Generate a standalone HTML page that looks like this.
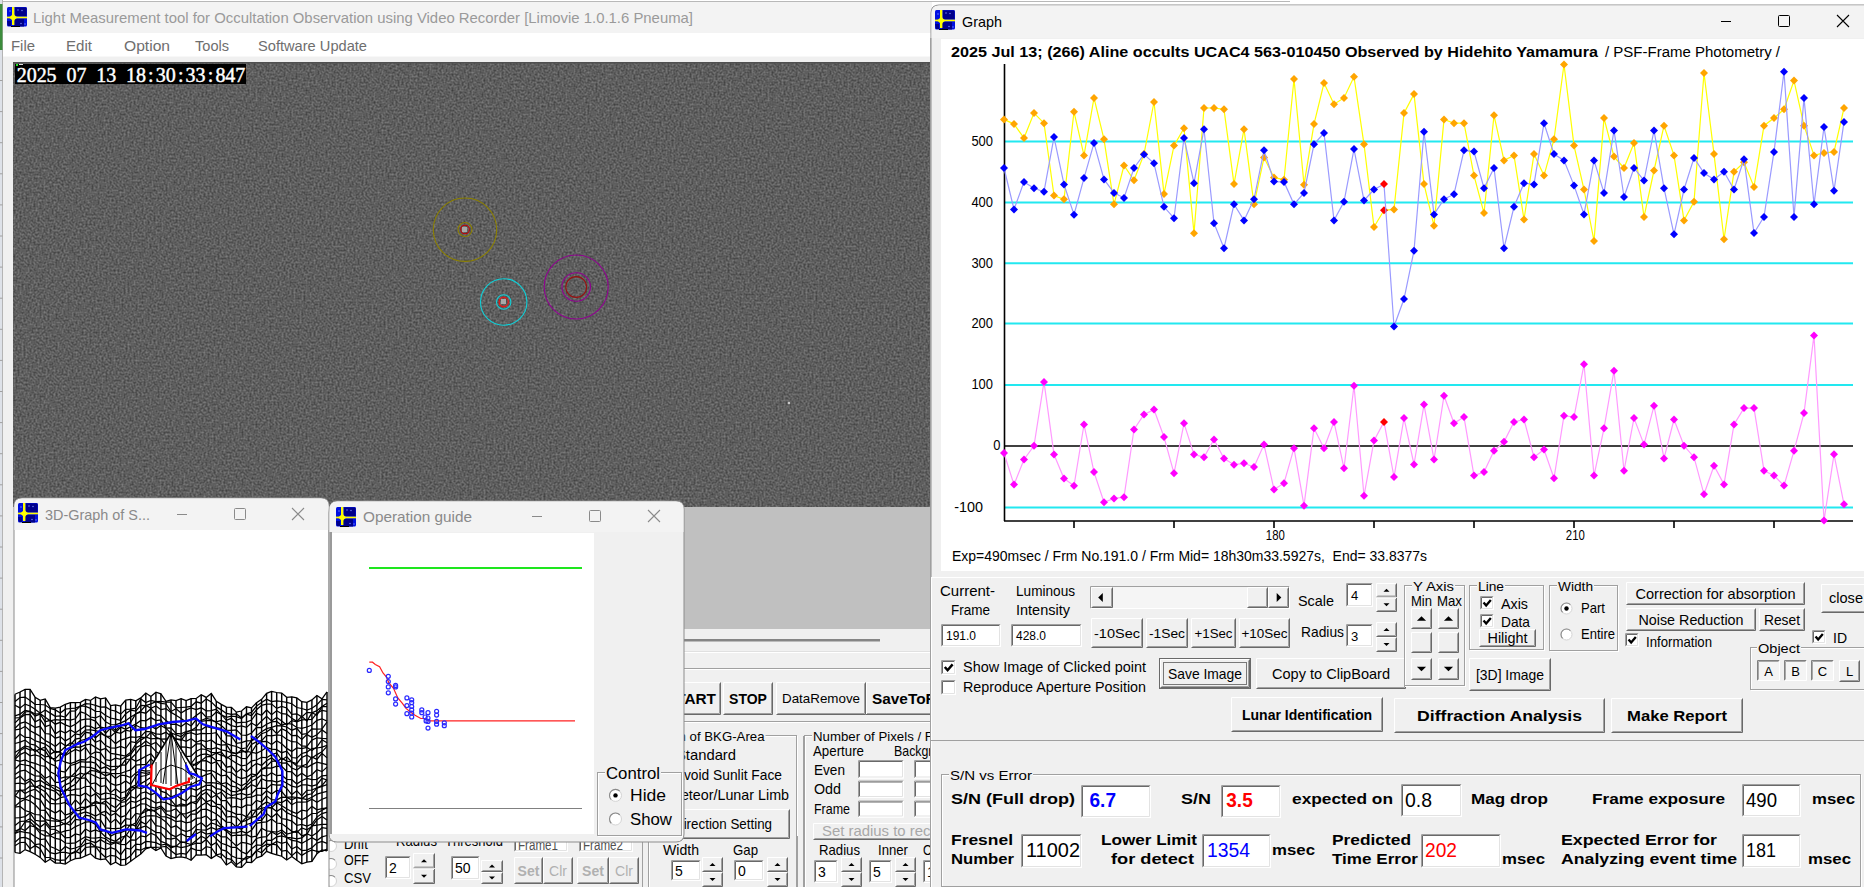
<!DOCTYPE html><html><head><meta charset="utf-8"><style>html,body{margin:0;padding:0;overflow:hidden;background:#fff}</style></head><body><svg width="1864" height="887" viewBox="0 0 1864 887" style="display:block">
<defs><filter id="noise" x="0" y="0" width="100%" height="100%" filterUnits="objectBoundingBox" color-interpolation-filters="sRGB"><feTurbulence type="fractalNoise" baseFrequency="0.5" numOctaves="3" seed="3" result="t"/><feColorMatrix in="t" type="matrix" values="0.36 0 0 0 0.19  0.36 0 0 0 0.19  0.36 0 0 0 0.19  0 0 0 0 1"/><feGaussianBlur stdDeviation="0.5"/></filter></defs>
<rect x="0" y="0" width="1864" height="887" fill="#ffffff" />
<line x1="0" y1="1.5" x2="1290" y2="1.5" stroke="#b8b8b8" stroke-width="1" />
<rect x="0" y="0" width="2.5" height="887" fill="#dde1e8" />
<line x1="2.5" y1="0" x2="2.5" y2="887" stroke="#b4b4b4" stroke-width="1" />
<line x1="0" y1="889.0999999999999" x2="2.5" y2="889.0999999999999" stroke="#a0a0a0" stroke-width="1" />
<line x1="0" y1="858.0" x2="2.5" y2="858.0" stroke="#a0a0a0" stroke-width="1" />
<line x1="0" y1="826.8999999999999" x2="2.5" y2="826.8999999999999" stroke="#a0a0a0" stroke-width="1" />
<line x1="0" y1="795.8" x2="2.5" y2="795.8" stroke="#a0a0a0" stroke-width="1" />
<line x1="0" y1="764.7" x2="2.5" y2="764.7" stroke="#a0a0a0" stroke-width="1" />
<line x1="0" y1="733.5999999999999" x2="2.5" y2="733.5999999999999" stroke="#a0a0a0" stroke-width="1" />
<line x1="0" y1="702.5" x2="2.5" y2="702.5" stroke="#a0a0a0" stroke-width="1" />
<line x1="0" y1="671.3999999999999" x2="2.5" y2="671.3999999999999" stroke="#a0a0a0" stroke-width="1" />
<line x1="0" y1="640.3" x2="2.5" y2="640.3" stroke="#a0a0a0" stroke-width="1" />
<line x1="0" y1="609.1999999999999" x2="2.5" y2="609.1999999999999" stroke="#a0a0a0" stroke-width="1" />
<line x1="0" y1="578.0999999999999" x2="2.5" y2="578.0999999999999" stroke="#a0a0a0" stroke-width="1" />
<line x1="0" y1="547.0" x2="2.5" y2="547.0" stroke="#a0a0a0" stroke-width="1" />
<line x1="0" y1="515.8999999999999" x2="2.5" y2="515.8999999999999" stroke="#a0a0a0" stroke-width="1" />
<line x1="0" y1="484.79999999999995" x2="2.5" y2="484.79999999999995" stroke="#a0a0a0" stroke-width="1" />
<line x1="0" y1="453.69999999999993" x2="2.5" y2="453.69999999999993" stroke="#a0a0a0" stroke-width="1" />
<line x1="0" y1="422.59999999999997" x2="2.5" y2="422.59999999999997" stroke="#a0a0a0" stroke-width="1" />
<line x1="0" y1="391.49999999999994" x2="2.5" y2="391.49999999999994" stroke="#a0a0a0" stroke-width="1" />
<line x1="0" y1="360.3999999999999" x2="2.5" y2="360.3999999999999" stroke="#a0a0a0" stroke-width="1" />
<line x1="0" y1="329.2999999999999" x2="2.5" y2="329.2999999999999" stroke="#a0a0a0" stroke-width="1" />
<line x1="0" y1="298.2" x2="2.5" y2="298.2" stroke="#a0a0a0" stroke-width="1" />
<line x1="0" y1="267.09999999999997" x2="2.5" y2="267.09999999999997" stroke="#a0a0a0" stroke-width="1" />
<line x1="0" y1="235.99999999999994" x2="2.5" y2="235.99999999999994" stroke="#a0a0a0" stroke-width="1" />
<line x1="0" y1="204.89999999999992" x2="2.5" y2="204.89999999999992" stroke="#a0a0a0" stroke-width="1" />
<line x1="0" y1="173.7999999999999" x2="2.5" y2="173.7999999999999" stroke="#a0a0a0" stroke-width="1" />
<line x1="0" y1="142.69999999999987" x2="2.5" y2="142.69999999999987" stroke="#a0a0a0" stroke-width="1" />
<line x1="0" y1="111.59999999999997" x2="2.5" y2="111.59999999999997" stroke="#a0a0a0" stroke-width="1" />
<line x1="0" y1="80.49999999999994" x2="2.5" y2="80.49999999999994" stroke="#a0a0a0" stroke-width="1" />
<line x1="0" y1="49.39999999999992" x2="2.5" y2="49.39999999999992" stroke="#a0a0a0" stroke-width="1" />
<line x1="0" y1="18.299999999999898" x2="2.5" y2="18.299999999999898" stroke="#a0a0a0" stroke-width="1" />
<line x1="0" y1="-12.800000000000125" x2="2.5" y2="-12.800000000000125" stroke="#a0a0a0" stroke-width="1" />
<rect x="0" y="4" width="2.5" height="46" fill="#3c8c3c" />
<rect x="3" y="2" width="929" height="885" fill="#f0f0f0" />
<rect x="3" y="2" width="929" height="31" fill="#f3f3f3" />
<g transform="translate(7,7) scale(1.0)"><rect x="0" y="0" width="20" height="19.5" rx="1.5" fill="#0010e0"/><path d="M8,0.5 H19.5 V9 H8Z M7,12 H17 V19.5 H7Z M0,14 H4 V19 H1Z" fill="#00008a"/><path d="M4,19 H13 V20 H4Z" fill="#000000"/><rect x="5" y="0" width="2.4" height="18" fill="#ffff00"/><rect x="0" y="9.6" width="20" height="1.7" fill="#ffff00"/><path d="M6.2,5 Q7,9.4 11.5,10.4 Q7,11.4 6.2,16 Q5.4,11.4 1,10.4 Q5.4,9.4 6.2,5Z" fill="#ffff00"/><circle cx="3" cy="4" r="0.7" fill="#8090ff"/><circle cx="11" cy="3" r="0.7" fill="#8090ff"/><circle cx="15" cy="3.5" r="0.7" fill="#8090ff"/><circle cx="14" cy="16.5" r="0.7" fill="#8090ff"/><circle cx="18" cy="17" r="0.7" fill="#8090ff"/></g>
<text x="33" y="23" font-family="Liberation Sans" font-size="15" fill="#9a9a9a" textLength="660" lengthAdjust="spacingAndGlyphs" >Light Measurement tool for Occultation Observation using Video Recorder [Limovie 1.0.1.6 Pneuma]</text>
<rect x="3" y="33" width="929" height="23.5" fill="#ffffff" />
<text x="11" y="51.3" font-family="Liberation Sans" font-size="15" fill="#6e6e6e" textLength="24" lengthAdjust="spacingAndGlyphs" >File</text>
<text x="66" y="51.3" font-family="Liberation Sans" font-size="15" fill="#6e6e6e" textLength="26" lengthAdjust="spacingAndGlyphs" >Edit</text>
<text x="124" y="51.3" font-family="Liberation Sans" font-size="15" fill="#6e6e6e" textLength="46" lengthAdjust="spacingAndGlyphs" >Option</text>
<text x="195" y="51.3" font-family="Liberation Sans" font-size="15" fill="#6e6e6e" textLength="34" lengthAdjust="spacingAndGlyphs" >Tools</text>
<text x="258" y="51.3" font-family="Liberation Sans" font-size="15" fill="#6e6e6e" textLength="109" lengthAdjust="spacingAndGlyphs" >Software Update</text>
<rect x="13" y="62" width="918" height="445" fill="#666" filter="url(#noise)"/>
<rect x="13" y="62" width="918" height="1.5" fill="#505050" />
<rect x="15" y="64" width="231" height="20" fill="#000000" />
<text x="21.80 31.73 41.66 51.59 61.52 71.45 81.38 91.31 101.24 111.17 121.10 131.03 140.96 150.89 160.82 170.75 180.68 190.61 200.54 210.47 220.40 230.33 240.26" y="81.5" text-anchor="middle" font-family="Liberation Serif" font-size="20" fill="#ffffff" stroke="#ffffff" stroke-width="0.45" style="white-space:pre">2025 07 13 18:30:33:847</text>
<rect x="16" y="64" width="2" height="2" fill="#20e020" />
<rect x="19" y="64" width="4" height="1" fill="#e0e0e0" />
<rect x="462" y="227" width="5" height="5" fill="#a8a8a8" />
<rect x="501" y="299" width="5" height="5" fill="#a8a8a8" />
<circle cx="465" cy="229.7" r="31.7" fill="none" stroke="#8c8000" stroke-width="1.1"/>
<circle cx="465" cy="229.5" r="7" fill="none" stroke="#8c8000" stroke-width="1.1"/>
<circle cx="465" cy="229.5" r="4.3" fill="none" stroke="#c00000" stroke-width="1.1"/>
<circle cx="503.7" cy="302" r="23.2" fill="none" stroke="#10d0d8" stroke-width="1.1"/>
<circle cx="503.7" cy="302" r="7.2" fill="none" stroke="#10d0d8" stroke-width="1.1"/>
<circle cx="503.7" cy="302" r="4.6" fill="none" stroke="#f01010" stroke-width="1.1"/>
<circle cx="576.2" cy="287" r="32" fill="none" stroke="#900090" stroke-width="1.1"/>
<circle cx="576.2" cy="287" r="14.3" fill="none" stroke="#900090" stroke-width="1.1"/>
<circle cx="576.2" cy="287" r="10.4" fill="none" stroke="#981010" stroke-width="1.1"/>
<circle cx="789" cy="403" r="1.3" fill="#c8c8c8"/>
<rect x="684" y="507" width="247" height="122" fill="#c0c0c0" />
<rect x="684" y="629" width="247" height="258" fill="#f0f0f0" />
<rect x="684" y="639" width="196" height="2.5" fill="#858585" />
<line x1="684" y1="651.5" x2="931" y2="651.5" stroke="#e0e0e0" stroke-width="1" />
<line x1="684" y1="652.5" x2="931" y2="652.5" stroke="#ffffff" stroke-width="1" />
<line x1="684" y1="668.5" x2="931" y2="668.5" stroke="#a0a0a0" stroke-width="1" />
<line x1="684" y1="669.5" x2="931" y2="669.5" stroke="#ffffff" stroke-width="1" />
<rect x="660" y="682" width="61" height="33" fill="#f0f0f0" />
<path d="M660.5,714.5 V682.5 H720.5" stroke="#ffffff" fill="none"/>
<path d="M660.5,714.5 H720.5 V682.5" stroke="#696969" fill="none"/>
<path d="M661.5,713.5 H719.5 V683.5" stroke="#a0a0a0" fill="none"/>
<text x="716" y="704" font-family="Liberation Sans" font-size="15" fill="#000" font-weight="bold" text-anchor="end" textLength="50" lengthAdjust="spacingAndGlyphs" >START</text>
<rect x="723" y="682" width="50" height="33" fill="#f0f0f0" />
<path d="M723.5,714.5 V682.5 H772.5" stroke="#ffffff" fill="none"/>
<path d="M723.5,714.5 H772.5 V682.5" stroke="#696969" fill="none"/>
<path d="M724.5,713.5 H771.5 V683.5" stroke="#a0a0a0" fill="none"/>
<text x="748.0" y="703.54" font-family="Liberation Sans" font-size="14" fill="#000" font-weight="bold" text-anchor="middle" >STOP</text>
<rect x="776" y="682" width="90" height="33" fill="#f0f0f0" />
<path d="M776.5,714.5 V682.5 H865.5" stroke="#ffffff" fill="none"/>
<path d="M776.5,714.5 H865.5 V682.5" stroke="#696969" fill="none"/>
<path d="M777.5,713.5 H864.5 V683.5" stroke="#a0a0a0" fill="none"/>
<text x="821.0" y="703.18" font-family="Liberation Sans" font-size="13" fill="#000" text-anchor="middle" textLength="78" lengthAdjust="spacingAndGlyphs" >DataRemove</text>
<rect x="866" y="682" width="70" height="33" fill="#f0f0f0" />
<path d="M866.5,714.5 V682.5 H940" stroke="#ffffff" fill="none"/>
<line x1="866" y1="714.5" x2="940" y2="714.5" stroke="#696969" stroke-width="1" />
<line x1="867" y1="713.5" x2="940" y2="713.5" stroke="#a0a0a0" stroke-width="1" />
<text x="872" y="704" font-family="Liberation Sans" font-size="15" fill="#000" font-weight="bold" textLength="80" lengthAdjust="spacingAndGlyphs" >SaveToFile</text>
<line x1="684" y1="721.5" x2="931" y2="721.5" stroke="#a0a0a0" stroke-width="1" />
<line x1="684" y1="722.5" x2="931" y2="722.5" stroke="#ffffff" stroke-width="1" />
<rect x="649.5" y="736.5" width="148" height="158" fill="none" stroke="#ffffff"/>
<rect x="648.5" y="735.5" width="148" height="158" fill="none" stroke="#a0a0a0"/>
<rect x="630.5" y="733" width="135" height="6" fill="#f0f0f0" />
<text x="631.5" y="740.5" font-family="Liberation Sans" font-size="13" fill="#000" textLength="133" lengthAdjust="spacingAndGlyphs" >Selection of BKG-Area</text>
<text x="676" y="760" font-family="Liberation Sans" font-size="14.5" fill="#000" textLength="60" lengthAdjust="spacingAndGlyphs" >Standard</text>
<text x="675" y="780" font-family="Liberation Sans" font-size="14.5" fill="#000" textLength="107" lengthAdjust="spacingAndGlyphs" >Avoid Sunlit Face</text>
<text x="669" y="800" font-family="Liberation Sans" font-size="14.5" fill="#000" textLength="120" lengthAdjust="spacingAndGlyphs" >Meteor/Lunar Limb</text>
<rect x="600" y="809" width="190" height="30" fill="#f0f0f0" />
<path d="M600.5,838.5 V809.5 H789.5" stroke="#ffffff" fill="none"/>
<path d="M600.5,838.5 H789.5 V809.5" stroke="#696969" fill="none"/>
<path d="M601.5,837.5 H788.5 V810.5" stroke="#a0a0a0" fill="none"/>
<text x="674" y="829" font-family="Liberation Sans" font-size="14.5" fill="#000" textLength="98" lengthAdjust="spacingAndGlyphs" >Direction Setting</text>
<rect x="805.5" y="736.5" width="138" height="158" fill="none" stroke="#ffffff"/>
<rect x="804.5" y="735.5" width="138" height="158" fill="none" stroke="#a0a0a0"/>
<rect x="812" y="733" width="152" height="6" fill="#f0f0f0" />
<text x="813" y="741" font-family="Liberation Sans" font-size="13" fill="#000" textLength="150" lengthAdjust="spacingAndGlyphs" >Number of Pixels / Frame</text>
<text x="813" y="756" font-family="Liberation Sans" font-size="14.5" fill="#000" textLength="51" lengthAdjust="spacingAndGlyphs" >Aperture</text>
<text x="894" y="756" font-family="Liberation Sans" font-size="14.5" fill="#000" textLength="66" lengthAdjust="spacingAndGlyphs" >Background</text>
<text x="814" y="775" font-family="Liberation Sans" font-size="14.5" fill="#000" textLength="31" lengthAdjust="spacingAndGlyphs" >Even</text>
<rect x="858" y="760" width="46" height="18.5" fill="#ffffff" />
<path d="M858.5,778.0 V760.5 H903.5" stroke="#a0a0a0" fill="none"/>
<path d="M859.5,777.0 V761.5 H902.5" stroke="#696969" fill="none"/>
<path d="M858.5,778.0 H903.5 V760.5" stroke="#ffffff" fill="none"/>
<path d="M859.5,777.0 H902.5 V761.5" stroke="#e3e3e3" fill="none"/>
<rect x="914" y="760" width="40" height="18.5" fill="#ffffff" />
<path d="M914.5,778.0 V760.5 H953.5" stroke="#a0a0a0" fill="none"/>
<path d="M915.5,777.0 V761.5 H952.5" stroke="#696969" fill="none"/>
<path d="M914.5,778.0 H953.5 V760.5" stroke="#ffffff" fill="none"/>
<path d="M915.5,777.0 H952.5 V761.5" stroke="#e3e3e3" fill="none"/>
<text x="814" y="794" font-family="Liberation Sans" font-size="14.5" fill="#000" textLength="27" lengthAdjust="spacingAndGlyphs" >Odd</text>
<rect x="858" y="780.5" width="46" height="17.5" fill="#ffffff" />
<path d="M858.5,797.5 V781.0 H903.5" stroke="#a0a0a0" fill="none"/>
<path d="M859.5,796.5 V782.0 H902.5" stroke="#696969" fill="none"/>
<path d="M858.5,797.5 H903.5 V781.0" stroke="#ffffff" fill="none"/>
<path d="M859.5,796.5 H902.5 V782.0" stroke="#e3e3e3" fill="none"/>
<rect x="914" y="780.5" width="40" height="17.5" fill="#ffffff" />
<path d="M914.5,797.5 V781.0 H953.5" stroke="#a0a0a0" fill="none"/>
<path d="M915.5,796.5 V782.0 H952.5" stroke="#696969" fill="none"/>
<path d="M914.5,797.5 H953.5 V781.0" stroke="#ffffff" fill="none"/>
<path d="M915.5,796.5 H952.5 V782.0" stroke="#e3e3e3" fill="none"/>
<text x="814" y="814" font-family="Liberation Sans" font-size="14.5" fill="#000" textLength="36" lengthAdjust="spacingAndGlyphs" >Frame</text>
<rect x="858" y="800.5" width="46" height="17" fill="#ffffff" />
<path d="M858.5,817.0 V801.0 H903.5" stroke="#a0a0a0" fill="none"/>
<path d="M859.5,816.0 V802.0 H902.5" stroke="#696969" fill="none"/>
<path d="M858.5,817.0 H903.5 V801.0" stroke="#ffffff" fill="none"/>
<path d="M859.5,816.0 H902.5 V802.0" stroke="#e3e3e3" fill="none"/>
<rect x="914" y="800.5" width="40" height="17" fill="#ffffff" />
<path d="M914.5,817.0 V801.0 H953.5" stroke="#a0a0a0" fill="none"/>
<path d="M915.5,816.0 V802.0 H952.5" stroke="#696969" fill="none"/>
<path d="M914.5,817.0 H953.5 V801.0" stroke="#ffffff" fill="none"/>
<path d="M915.5,816.0 H952.5 V802.0" stroke="#e3e3e3" fill="none"/>
<rect x="813" y="823" width="140" height="17" fill="#f0f0f0" />
<path d="M813.5,839.5 V823.5 H952.5" stroke="#ffffff" fill="none"/>
<path d="M813.5,839.5 H952.5 V823.5" stroke="#696969" fill="none"/>
<path d="M814.5,838.5 H951.5 V824.5" stroke="#a0a0a0" fill="none"/>
<text x="822" y="836" font-family="Liberation Sans" font-size="14.5" fill="#a8a8a8" textLength="130" lengthAdjust="spacingAndGlyphs" >Set  radius to record</text>
<text x="819" y="855" font-family="Liberation Sans" font-size="14.5" fill="#000" textLength="41" lengthAdjust="spacingAndGlyphs" >Radius</text>
<text x="878" y="855" font-family="Liberation Sans" font-size="14.5" fill="#000" textLength="30" lengthAdjust="spacingAndGlyphs" >Inner</text>
<text x="923" y="855" font-family="Liberation Sans" font-size="14.5" fill="#000" textLength="30" lengthAdjust="spacingAndGlyphs" >Outer</text>
<rect x="814" y="860" width="24" height="23" fill="#ffffff" />
<path d="M814.5,882.5 V860.5 H837.5" stroke="#a0a0a0" fill="none"/>
<path d="M815.5,881.5 V861.5 H836.5" stroke="#696969" fill="none"/>
<path d="M814.5,882.5 H837.5 V860.5" stroke="#ffffff" fill="none"/>
<path d="M815.5,881.5 H836.5 V861.5" stroke="#e3e3e3" fill="none"/>
<text x="818" y="876.54" font-family="Liberation Sans" font-size="14" fill="#000" >3</text>
<rect x="841" y="857" width="21" height="15.0" fill="#f0f0f0" />
<path d="M841.5,871.5 V857.5 H861.5" stroke="#ffffff" fill="none"/>
<path d="M841.5,871.5 H861.5 V857.5" stroke="#696969" fill="none"/>
<path d="M842.5,870.5 H860.5 V858.5" stroke="#a0a0a0" fill="none"/>
<rect x="841" y="872.0" width="21" height="15.0" fill="#f0f0f0" />
<path d="M841.5,886.5 V872.5 H861.5" stroke="#ffffff" fill="none"/>
<path d="M841.5,886.5 H861.5 V872.5" stroke="#696969" fill="none"/>
<path d="M842.5,885.5 H860.5 V873.5" stroke="#a0a0a0" fill="none"/>
<path d="M848.5,866.0 L854.5,866.0 L851.5,863.0 Z" fill="#000"/>
<path d="M848.5,878.0 L854.5,878.0 L851.5,881.0 Z" fill="#000"/>
<rect x="869" y="860" width="23" height="23" fill="#ffffff" />
<path d="M869.5,882.5 V860.5 H891.5" stroke="#a0a0a0" fill="none"/>
<path d="M870.5,881.5 V861.5 H890.5" stroke="#696969" fill="none"/>
<path d="M869.5,882.5 H891.5 V860.5" stroke="#ffffff" fill="none"/>
<path d="M870.5,881.5 H890.5 V861.5" stroke="#e3e3e3" fill="none"/>
<text x="873" y="876.54" font-family="Liberation Sans" font-size="14" fill="#000" >5</text>
<rect x="895" y="857" width="21" height="15.0" fill="#f0f0f0" />
<path d="M895.5,871.5 V857.5 H915.5" stroke="#ffffff" fill="none"/>
<path d="M895.5,871.5 H915.5 V857.5" stroke="#696969" fill="none"/>
<path d="M896.5,870.5 H914.5 V858.5" stroke="#a0a0a0" fill="none"/>
<rect x="895" y="872.0" width="21" height="15.0" fill="#f0f0f0" />
<path d="M895.5,886.5 V872.5 H915.5" stroke="#ffffff" fill="none"/>
<path d="M895.5,886.5 H915.5 V872.5" stroke="#696969" fill="none"/>
<path d="M896.5,885.5 H914.5 V873.5" stroke="#a0a0a0" fill="none"/>
<path d="M902.5,866.0 L908.5,866.0 L905.5,863.0 Z" fill="#000"/>
<path d="M902.5,878.0 L908.5,878.0 L905.5,881.0 Z" fill="#000"/>
<rect x="923" y="860" width="20" height="23" fill="#ffffff" />
<path d="M923.5,882.5 V860.5 H942.5" stroke="#a0a0a0" fill="none"/>
<path d="M924.5,881.5 V861.5 H941.5" stroke="#696969" fill="none"/>
<path d="M923.5,882.5 H942.5 V860.5" stroke="#ffffff" fill="none"/>
<path d="M924.5,881.5 H941.5 V861.5" stroke="#e3e3e3" fill="none"/>
<text x="927" y="876.54" font-family="Liberation Sans" font-size="14" fill="#000" >10</text>
<text x="663" y="855" font-family="Liberation Sans" font-size="14.5" fill="#000" textLength="36" lengthAdjust="spacingAndGlyphs" >Width</text>
<text x="733" y="855" font-family="Liberation Sans" font-size="14.5" fill="#000" textLength="25" lengthAdjust="spacingAndGlyphs" >Gap</text>
<rect x="671" y="860" width="30" height="21" fill="#ffffff" />
<path d="M671.5,880.5 V860.5 H700.5" stroke="#a0a0a0" fill="none"/>
<path d="M672.5,879.5 V861.5 H699.5" stroke="#696969" fill="none"/>
<path d="M671.5,880.5 H700.5 V860.5" stroke="#ffffff" fill="none"/>
<path d="M672.5,879.5 H699.5 V861.5" stroke="#e3e3e3" fill="none"/>
<text x="675" y="875.54" font-family="Liberation Sans" font-size="14" fill="#000" >5</text>
<rect x="702" y="857" width="21" height="15.0" fill="#f0f0f0" />
<path d="M702.5,871.5 V857.5 H722.5" stroke="#ffffff" fill="none"/>
<path d="M702.5,871.5 H722.5 V857.5" stroke="#696969" fill="none"/>
<path d="M703.5,870.5 H721.5 V858.5" stroke="#a0a0a0" fill="none"/>
<rect x="702" y="872.0" width="21" height="15.0" fill="#f0f0f0" />
<path d="M702.5,886.5 V872.5 H722.5" stroke="#ffffff" fill="none"/>
<path d="M702.5,886.5 H722.5 V872.5" stroke="#696969" fill="none"/>
<path d="M703.5,885.5 H721.5 V873.5" stroke="#a0a0a0" fill="none"/>
<path d="M709.5,866.0 L715.5,866.0 L712.5,863.0 Z" fill="#000"/>
<path d="M709.5,878.0 L715.5,878.0 L712.5,881.0 Z" fill="#000"/>
<rect x="734" y="860" width="30" height="21" fill="#ffffff" />
<path d="M734.5,880.5 V860.5 H763.5" stroke="#a0a0a0" fill="none"/>
<path d="M735.5,879.5 V861.5 H762.5" stroke="#696969" fill="none"/>
<path d="M734.5,880.5 H763.5 V860.5" stroke="#ffffff" fill="none"/>
<path d="M735.5,879.5 H762.5 V861.5" stroke="#e3e3e3" fill="none"/>
<text x="738" y="875.54" font-family="Liberation Sans" font-size="14" fill="#000" >0</text>
<rect x="767" y="857" width="21" height="15.0" fill="#f0f0f0" />
<path d="M767.5,871.5 V857.5 H787.5" stroke="#ffffff" fill="none"/>
<path d="M767.5,871.5 H787.5 V857.5" stroke="#696969" fill="none"/>
<path d="M768.5,870.5 H786.5 V858.5" stroke="#a0a0a0" fill="none"/>
<rect x="767" y="872.0" width="21" height="15.0" fill="#f0f0f0" />
<path d="M767.5,886.5 V872.5 H787.5" stroke="#ffffff" fill="none"/>
<path d="M767.5,886.5 H787.5 V872.5" stroke="#696969" fill="none"/>
<path d="M768.5,885.5 H786.5 V873.5" stroke="#a0a0a0" fill="none"/>
<path d="M774.5,866.0 L780.5,866.0 L777.5,863.0 Z" fill="#000"/>
<path d="M774.5,878.0 L780.5,878.0 L777.5,881.0 Z" fill="#000"/>
<line x1="642.5" y1="836" x2="642.5" y2="887" stroke="#a0a0a0" stroke-width="1" />
<line x1="648.5" y1="836" x2="648.5" y2="887" stroke="#a0a0a0" stroke-width="1" />
<line x1="649.5" y1="836" x2="649.5" y2="887" stroke="#ffffff" stroke-width="1" />
<line x1="797.5" y1="836" x2="797.5" y2="887" stroke="#a0a0a0" stroke-width="1" />
<line x1="803.5" y1="736" x2="803.5" y2="887" stroke="#a0a0a0" stroke-width="1" />
<text x="344" y="849" font-family="Liberation Sans" font-size="14" fill="#000" textLength="24" lengthAdjust="spacingAndGlyphs" >Drift</text>
<text x="344" y="865" font-family="Liberation Sans" font-size="14" fill="#000" textLength="25" lengthAdjust="spacingAndGlyphs" >OFF</text>
<text x="344" y="883" font-family="Liberation Sans" font-size="14" fill="#000" textLength="27" lengthAdjust="spacingAndGlyphs" >CSV</text>
<circle cx="331" cy="846" r="5.5" fill="#fff" stroke="#d4d4d4" stroke-width="1"/>
<path d="M327.108,849.8919999999999 A5.5,5.5 0 0 1 334.892,842.1080000000001" stroke="#8a8a8a" stroke-width="1.1" fill="none"/>
<circle cx="331" cy="864" r="5.5" fill="#fff" stroke="#d4d4d4" stroke-width="1"/>
<path d="M327.108,867.8919999999999 A5.5,5.5 0 0 1 334.892,860.1080000000001" stroke="#8a8a8a" stroke-width="1.1" fill="none"/>
<circle cx="331" cy="881" r="5.5" fill="#fff" stroke="#d4d4d4" stroke-width="1"/>
<path d="M327.108,884.8919999999999 A5.5,5.5 0 0 1 334.892,877.1080000000001" stroke="#8a8a8a" stroke-width="1.1" fill="none"/>
<text x="396" y="846" font-family="Liberation Sans" font-size="14.5" fill="#000" textLength="41" lengthAdjust="spacingAndGlyphs" >Radius</text>
<text x="445" y="846" font-family="Liberation Sans" font-size="14.5" fill="#000" textLength="58" lengthAdjust="spacingAndGlyphs" >Threshold</text>
<rect x="385" y="856" width="26" height="23" fill="#ffffff" />
<path d="M385.5,878.5 V856.5 H410.5" stroke="#a0a0a0" fill="none"/>
<path d="M386.5,877.5 V857.5 H409.5" stroke="#696969" fill="none"/>
<path d="M385.5,878.5 H410.5 V856.5" stroke="#ffffff" fill="none"/>
<path d="M386.5,877.5 H409.5 V857.5" stroke="#e3e3e3" fill="none"/>
<text x="389" y="872.54" font-family="Liberation Sans" font-size="14" fill="#000" >2</text>
<rect x="413" y="853" width="22" height="15.5" fill="#f0f0f0" />
<path d="M413.5,868.0 V853.5 H434.5" stroke="#ffffff" fill="none"/>
<path d="M413.5,868.0 H434.5 V853.5" stroke="#696969" fill="none"/>
<path d="M414.5,867.0 H433.5 V854.5" stroke="#a0a0a0" fill="none"/>
<rect x="413" y="868.5" width="22" height="15.5" fill="#f0f0f0" />
<path d="M413.5,883.5 V869.0 H434.5" stroke="#ffffff" fill="none"/>
<path d="M413.5,883.5 H434.5 V869.0" stroke="#696969" fill="none"/>
<path d="M414.5,882.5 H433.5 V870.0" stroke="#a0a0a0" fill="none"/>
<path d="M421.0,862.25 L427.0,862.25 L424.0,859.25 Z" fill="#000"/>
<path d="M421.0,874.75 L427.0,874.75 L424.0,877.75 Z" fill="#000"/>
<rect x="451" y="856" width="29" height="24" fill="#ffffff" />
<path d="M451.5,879.5 V856.5 H479.5" stroke="#a0a0a0" fill="none"/>
<path d="M452.5,878.5 V857.5 H478.5" stroke="#696969" fill="none"/>
<path d="M451.5,879.5 H479.5 V856.5" stroke="#ffffff" fill="none"/>
<path d="M452.5,878.5 H478.5 V857.5" stroke="#e3e3e3" fill="none"/>
<text x="455" y="873.04" font-family="Liberation Sans" font-size="14" fill="#000" >50</text>
<rect x="481" y="860" width="22" height="12.0" fill="#f0f0f0" />
<path d="M481.5,871.5 V860.5 H502.5" stroke="#ffffff" fill="none"/>
<path d="M481.5,871.5 H502.5 V860.5" stroke="#696969" fill="none"/>
<path d="M482.5,870.5 H501.5 V861.5" stroke="#a0a0a0" fill="none"/>
<rect x="481" y="872.0" width="22" height="12.0" fill="#f0f0f0" />
<path d="M481.5,883.5 V872.5 H502.5" stroke="#ffffff" fill="none"/>
<path d="M481.5,883.5 H502.5 V872.5" stroke="#696969" fill="none"/>
<path d="M482.5,882.5 H501.5 V873.5" stroke="#a0a0a0" fill="none"/>
<path d="M489.0,867.5 L495.0,867.5 L492.0,864.5 Z" fill="#000"/>
<path d="M489.0,876.5 L495.0,876.5 L492.0,879.5 Z" fill="#000"/>
<rect x="514" y="838" width="54" height="14" fill="#ffffff" />
<path d="M514.5,851.5 V838.5 H567.5" stroke="#a0a0a0" fill="none"/>
<path d="M515.5,850.5 V839.5 H566.5" stroke="#696969" fill="none"/>
<path d="M514.5,851.5 H567.5 V838.5" stroke="#ffffff" fill="none"/>
<path d="M515.5,850.5 H566.5 V839.5" stroke="#e3e3e3" fill="none"/>
<text x="518" y="850" font-family="Liberation Sans" font-size="14" fill="#505050" textLength="40" lengthAdjust="spacingAndGlyphs" >Frame1</text>
<rect x="579" y="838" width="54" height="14" fill="#ffffff" />
<path d="M579.5,851.5 V838.5 H632.5" stroke="#a0a0a0" fill="none"/>
<path d="M580.5,850.5 V839.5 H631.5" stroke="#696969" fill="none"/>
<path d="M579.5,851.5 H632.5 V838.5" stroke="#ffffff" fill="none"/>
<path d="M580.5,850.5 H631.5 V839.5" stroke="#e3e3e3" fill="none"/>
<text x="583" y="850" font-family="Liberation Sans" font-size="14" fill="#505050" textLength="40" lengthAdjust="spacingAndGlyphs" >Frame2</text>
<rect x="514" y="857" width="29" height="27" fill="#f0f0f0" />
<path d="M514.5,883.5 V857.5 H542.5" stroke="#ffffff" fill="none"/>
<path d="M514.5,883.5 H542.5 V857.5" stroke="#696969" fill="none"/>
<path d="M515.5,882.5 H541.5 V858.5" stroke="#a0a0a0" fill="none"/>
<text x="528.5" y="875.54" font-family="Liberation Sans" font-size="14" fill="#b0b0b0" font-weight="bold" text-anchor="middle" >Set</text>
<rect x="543" y="857" width="30" height="27" fill="#f0f0f0" />
<path d="M543.5,883.5 V857.5 H572.5" stroke="#ffffff" fill="none"/>
<path d="M543.5,883.5 H572.5 V857.5" stroke="#696969" fill="none"/>
<path d="M544.5,882.5 H571.5 V858.5" stroke="#a0a0a0" fill="none"/>
<text x="558.0" y="875.54" font-family="Liberation Sans" font-size="14" fill="#b0b0b0" text-anchor="middle" >Clr</text>
<rect x="577" y="857" width="32" height="27" fill="#f0f0f0" />
<path d="M577.5,883.5 V857.5 H608.5" stroke="#ffffff" fill="none"/>
<path d="M577.5,883.5 H608.5 V857.5" stroke="#696969" fill="none"/>
<path d="M578.5,882.5 H607.5 V858.5" stroke="#a0a0a0" fill="none"/>
<text x="593.0" y="875.54" font-family="Liberation Sans" font-size="14" fill="#b0b0b0" font-weight="bold" text-anchor="middle" >Set</text>
<rect x="609" y="857" width="30" height="27" fill="#f0f0f0" />
<path d="M609.5,883.5 V857.5 H638.5" stroke="#ffffff" fill="none"/>
<path d="M609.5,883.5 H638.5 V857.5" stroke="#696969" fill="none"/>
<path d="M610.5,882.5 H637.5 V858.5" stroke="#a0a0a0" fill="none"/>
<text x="624.0" y="875.54" font-family="Liberation Sans" font-size="14" fill="#b0b0b0" text-anchor="middle" >Clr</text>
<path d="M14,889 V506 Q14,498 22,498 H321 Q329,498 329,506 V889 Z" fill="#ffffff" stroke="#8c8c8c" stroke-width="1"/>
<path d="M14.5,530 V506 Q14.5,498.5 22,498.5 H321 Q328.5,498.5 328.5,506 V530 Z" fill="#f3f3f3"/>
<g transform="translate(18,503) scale(1.0)"><rect x="0" y="0" width="20" height="19.5" rx="1.5" fill="#0010e0"/><path d="M8,0.5 H19.5 V9 H8Z M7,12 H17 V19.5 H7Z M0,14 H4 V19 H1Z" fill="#00008a"/><path d="M4,19 H13 V20 H4Z" fill="#000000"/><rect x="5" y="0" width="2.4" height="18" fill="#ffff00"/><rect x="0" y="9.6" width="20" height="1.7" fill="#ffff00"/><path d="M6.2,5 Q7,9.4 11.5,10.4 Q7,11.4 6.2,16 Q5.4,11.4 1,10.4 Q5.4,9.4 6.2,5Z" fill="#ffff00"/><circle cx="3" cy="4" r="0.7" fill="#8090ff"/><circle cx="11" cy="3" r="0.7" fill="#8090ff"/><circle cx="15" cy="3.5" r="0.7" fill="#8090ff"/><circle cx="14" cy="16.5" r="0.7" fill="#8090ff"/><circle cx="18" cy="17" r="0.7" fill="#8090ff"/></g>
<text x="45" y="520" font-family="Liberation Sans" font-size="15" fill="#8a8a8a" textLength="105" lengthAdjust="spacingAndGlyphs" >3D-Graph of S...</text>
<line x1="177" y1="514.5" x2="187" y2="514.5" stroke="#8a8a8a" stroke-width="1"/>
<rect x="234.5" y="508.5" width="11" height="11" rx="1" fill="none" stroke="#8a8a8a" stroke-width="1"/>
<path d="M292,508 L304,520 M304,508 L292,520" stroke="#8a8a8a" stroke-width="1.1"/>
<g stroke="#000" stroke-width="1.25" fill="none" stroke-linejoin="miter">
<polyline points="15.0,694.2 20.0,692.0 25.1,689.4 30.1,689.4 35.1,697.2 40.2,700.3 45.2,699.0 50.2,707.6 55.3,708.2 60.3,707.1 65.3,704.3 70.4,702.7 75.4,702.7 80.4,702.3 85.5,699.4 90.5,700.4 95.5,696.9 100.5,698.8 105.6,698.0 110.6,705.6 115.6,704.9 120.7,706.0 125.7,700.2 130.7,699.4 135.8,700.8 140.8,697.9 145.8,693.0 150.9,696.4 155.9,692.2 160.9,693.8 166.0,701.3 171.0,700.0 176.0,700.5 181.1,698.6 186.1,700.6 191.1,698.6 196.2,698.4 201.2,694.8 206.2,697.4 211.3,693.4 216.3,701.2 221.3,704.4 226.4,707.1 231.4,707.3 236.4,712.1 241.5,711.0 246.5,706.8 251.5,707.9 256.5,702.8 261.6,699.3 266.6,693.4 271.6,691.5 276.7,692.5 281.7,693.1 286.7,697.3 291.8,696.8 296.8,697.9 301.8,701.7 306.9,702.3 311.9,699.9 316.9,695.5 322.0,698.8 327.0,691.9"/>
<polyline points="15.0,701.5 20.0,697.5 25.1,697.1 30.1,700.4 35.1,704.3 40.2,704.5 45.2,705.0 50.2,708.4 55.3,709.9 60.3,713.1 65.3,709.2 70.4,708.5 75.4,708.2 80.4,706.2 85.5,703.6 90.5,704.0 95.5,705.4 100.5,707.2 105.6,706.9 110.6,710.0 115.6,711.2 120.7,714.1 125.7,709.3 130.7,709.2 135.8,708.2 140.8,699.0 145.8,702.6 150.9,700.5 155.9,701.6 160.9,701.5 166.0,702.1 171.0,702.2 176.0,707.9 181.1,707.5 186.1,707.2 191.1,706.3 196.2,701.8 201.2,703.2 206.2,698.9 211.3,701.9 216.3,706.9 221.3,709.9 226.4,713.4 231.4,714.3 236.4,713.9 241.5,717.9 246.5,713.8 251.5,712.4 256.5,706.1 261.6,702.4 266.6,699.2 271.6,701.6 276.7,701.0 281.7,701.5 286.7,702.4 291.8,703.7 296.8,707.5 301.8,708.5 306.9,710.0 311.9,708.3 316.9,704.8 322.0,699.4 327.0,699.9"/>
<polyline points="15.0,705.3 20.0,707.9 25.1,704.1 30.1,706.0 35.1,709.3 40.2,713.2 45.2,709.9 50.2,713.1 55.3,716.3 60.3,716.0 65.3,717.0 70.4,711.2 75.4,711.0 80.4,705.8 85.5,706.4 90.5,708.3 95.5,711.4 100.5,711.5 105.6,715.5 110.6,718.0 115.6,719.1 120.7,720.3 125.7,713.7 130.7,710.2 135.8,711.0 140.8,705.3 145.8,705.5 150.9,703.9 155.9,701.7 160.9,703.4 166.0,704.0 171.0,711.5 176.0,708.8 181.1,713.0 186.1,709.9 191.1,707.9 196.2,709.6 201.2,707.8 206.2,710.9 211.3,710.6 216.3,709.2 221.3,714.8 226.4,717.4 231.4,716.1 236.4,716.7 241.5,718.6 246.5,713.9 251.5,715.7 256.5,709.8 261.6,705.3 266.6,704.1 271.6,704.1 276.7,708.4 281.7,706.5 286.7,708.0 291.8,714.4 296.8,713.8 301.8,716.9 306.9,712.4 311.9,712.8 316.9,710.7 322.0,706.6 327.0,703.3"/>
<polyline points="15.0,715.8 20.0,714.1 25.1,710.5 30.1,711.3 35.1,714.0 40.2,713.7 45.2,717.2 50.2,720.8 55.3,719.6 60.3,720.1 65.3,719.5 70.4,720.1 75.4,718.8 80.4,711.8 85.5,713.5 90.5,717.0 95.5,717.9 100.5,715.7 105.6,721.8 110.6,724.5 115.6,724.9 120.7,722.8 125.7,720.7 130.7,717.0 135.8,714.0 140.8,711.0 145.8,705.3 150.9,708.3 155.9,705.9 160.9,709.7 166.0,708.6 171.0,712.4 176.0,715.3 181.1,718.5 186.1,721.7 191.1,719.5 196.2,715.5 201.2,711.9 206.2,717.2 211.3,716.7 216.3,712.0 221.3,714.4 226.4,720.3 231.4,718.3 236.4,722.8 241.5,722.4 246.5,722.1 251.5,720.1 256.5,713.3 261.6,715.3 266.6,710.0 271.6,714.7 276.7,710.8 281.7,713.7 286.7,714.2 291.8,718.2 296.8,721.4 301.8,716.4 306.9,721.0 311.9,712.8 316.9,715.1 322.0,706.6 327.0,706.7"/>
<polyline points="15.0,718.0 20.0,717.7 25.1,712.0 30.1,711.5 35.1,716.1 40.2,714.1 45.2,721.8 50.2,720.3 55.3,724.2 60.3,722.3 65.3,724.9 70.4,726.9 75.4,724.2 80.4,720.2 85.5,719.2 90.5,719.1 95.5,721.1 100.5,727.0 105.6,728.0 110.6,726.2 115.6,730.7 120.7,725.3 125.7,725.6 130.7,722.4 135.8,713.6 140.8,712.1 145.8,713.2 150.9,708.7 155.9,714.5 160.9,715.8 166.0,720.6 171.0,724.3 176.0,724.2 181.1,726.6 186.1,723.0 191.1,726.0 196.2,719.5 201.2,721.3 206.2,720.6 211.3,720.3 216.3,721.8 221.3,720.4 226.4,722.6 231.4,725.6 236.4,726.8 241.5,725.9 246.5,727.4 251.5,723.0 256.5,725.9 261.6,721.0 266.6,716.3 271.6,721.0 276.7,717.6 281.7,720.9 286.7,725.0 291.8,720.6 296.8,721.9 301.8,719.8 306.9,719.7 311.9,719.5 316.9,713.2 322.0,710.5 327.0,711.4"/>
<polyline points="15.0,722.9 20.0,718.0 25.1,714.7 30.1,714.5 35.1,721.9 40.2,719.2 45.2,726.7 50.2,725.0 55.3,733.8 60.3,730.7 65.3,733.1 70.4,729.9 75.4,732.7 80.4,729.4 85.5,725.9 90.5,726.4 95.5,728.8 100.5,726.7 105.6,733.2 110.6,728.0 115.6,732.6 120.7,727.1 125.7,729.4 130.7,726.6 135.8,724.1 140.8,720.4 145.8,720.8 150.9,717.6 155.9,720.6 160.9,720.0 166.0,728.1 171.0,727.8 176.0,733.3 181.1,733.9 186.1,731.5 191.1,730.5 196.2,727.4 201.2,720.4 206.2,718.5 211.3,719.5 216.3,722.5 221.3,725.6 226.4,730.1 231.4,730.3 236.4,729.9 241.5,735.0 246.5,735.3 251.5,733.0 256.5,727.4 261.6,727.6 266.6,724.3 271.6,721.9 276.7,721.4 281.7,725.2 286.7,723.4 291.8,724.1 296.8,727.5 301.8,728.4 306.9,727.0 311.9,725.0 316.9,720.3 322.0,718.8 327.0,721.1"/>
<polyline points="15.0,728.3 20.0,723.4 25.1,721.9 30.1,724.5 35.1,727.6 40.2,726.3 45.2,733.5 50.2,734.1 55.3,738.2 60.3,736.6 65.3,740.9 70.4,738.0 75.4,733.8 80.4,734.8 85.5,730.0 90.5,729.9 95.5,730.6 100.5,732.1 105.6,736.2 110.6,736.4 115.6,732.2 120.7,733.3 125.7,730.1 130.7,731.3 135.8,725.2 140.8,727.7 145.8,728.1 150.9,726.3 155.9,728.9 160.9,725.5 166.0,728.4 171.0,733.2 176.0,734.7 181.1,736.8 186.1,732.5 191.1,730.3 196.2,729.9 201.2,729.8 206.2,726.5 211.3,727.9 216.3,727.9 221.3,728.4 226.4,735.6 231.4,736.2 236.4,743.3 241.5,742.7 246.5,740.9 251.5,740.6 256.5,735.6 261.6,731.8 266.6,728.7 271.6,727.3 276.7,725.7 281.7,725.9 286.7,727.0 291.8,730.2 296.8,728.3 301.8,734.4 306.9,733.6 311.9,729.0 316.9,729.2 322.0,728.9 327.0,722.0"/>
<polyline points="15.0,729.8 20.0,729.2 25.1,726.4 30.1,730.7 35.1,733.4 40.2,736.3 45.2,740.6 50.2,743.1 55.3,746.5 60.3,742.2 65.3,745.5 70.4,745.0 75.4,739.1 80.4,738.1 85.5,732.3 90.5,733.2 95.5,737.8 100.5,733.5 105.6,735.9 110.6,738.9 115.6,743.6 120.7,740.1 125.7,738.6 130.7,736.8 135.8,737.3 140.8,736.4 145.8,731.3 150.9,731.9 155.9,733.8 160.9,734.4 166.0,732.3 171.0,736.3 176.0,739.0 181.1,740.3 186.1,733.8 191.1,732.7 196.2,734.5 201.2,733.3 206.2,733.7 211.3,733.5 216.3,732.7 221.3,739.8 226.4,743.7 231.4,745.3 236.4,746.5 241.5,748.9 246.5,747.8 251.5,740.3 256.5,739.0 261.6,733.7 266.6,732.0 271.6,728.4 276.7,733.6 281.7,728.8 286.7,731.1 291.8,735.7 296.8,735.3 301.8,739.4 306.9,734.6 311.9,737.3 316.9,734.7 322.0,729.9 327.0,733.5"/>
<polyline points="15.0,739.0 20.0,734.0 25.1,737.4 30.1,737.5 35.1,740.8 40.2,742.4 45.2,744.1 50.2,747.5 55.3,752.7 60.3,751.1 65.3,746.7 70.4,742.8 75.4,744.8 80.4,740.5 85.5,739.3 90.5,737.1 95.5,742.3 100.5,740.2 105.6,745.6 110.6,747.9 115.6,748.1 120.7,746.5 125.7,748.3 130.7,741.7 135.8,742.6 140.8,737.1 145.8,737.7 150.9,732.3 155.9,737.3 160.9,739.0 166.0,738.9 171.0,741.9 176.0,738.9 181.1,739.4 186.1,741.3 191.1,738.8 196.2,742.3 201.2,740.2 206.2,741.5 211.3,740.0 216.3,743.8 221.3,745.0 226.4,744.7 231.4,752.2 236.4,753.9 241.5,749.8 246.5,752.9 251.5,744.5 256.5,741.7 261.6,740.6 266.6,735.3 271.6,735.8 276.7,734.9 281.7,735.5 286.7,739.3 291.8,741.7 296.8,742.0 301.8,745.9 306.9,746.3 311.9,740.1 316.9,737.8 322.0,738.4 327.0,738.7"/>
<polyline points="15.0,743.5 20.0,742.1 25.1,740.1 30.1,744.0 35.1,745.1 40.2,749.0 45.2,746.9 50.2,754.3 55.3,751.1 60.3,752.5 65.3,754.7 70.4,748.4 75.4,746.9 80.4,747.0 85.5,744.9 90.5,744.2 95.5,747.4 100.5,750.2 105.6,748.5 110.6,753.4 115.6,754.2 120.7,755.1 125.7,756.1 130.7,752.3 135.8,744.2 140.8,740.1 145.8,737.0 150.9,738.8 155.9,738.4 160.9,739.0 166.0,745.7 171.0,745.7 176.0,749.6 181.1,747.0 186.1,747.2 191.1,748.2 196.2,743.9 201.2,743.9 206.2,748.3 211.3,749.1 216.3,747.7 221.3,749.8 226.4,750.9 231.4,752.9 236.4,753.4 241.5,751.9 246.5,751.5 251.5,752.3 256.5,744.6 261.6,741.7 266.6,741.3 271.6,744.5 276.7,740.8 281.7,743.8 286.7,748.4 291.8,751.4 296.8,748.0 301.8,748.7 306.9,747.4 311.9,750.5 316.9,746.9 322.0,739.8 327.0,742.8"/>
<polyline points="15.0,752.6 20.0,749.3 25.1,746.0 30.1,747.2 35.1,751.6 40.2,748.8 45.2,750.8 50.2,758.4 55.3,758.7 60.3,753.8 65.3,755.5 70.4,752.2 75.4,749.5 80.4,751.3 85.5,747.3 90.5,754.5 95.5,751.9 100.5,752.9 105.6,759.7 110.6,760.6 115.6,758.2 120.7,759.3 125.7,757.2 130.7,754.4 135.8,747.6 140.8,745.3 145.8,741.1 150.9,744.5 155.9,742.4 160.9,747.5 166.0,745.6 171.0,750.9 176.0,751.5 181.1,752.7 186.1,756.7 191.1,756.2 196.2,751.3 201.2,748.8 206.2,749.5 211.3,752.4 216.3,752.9 221.3,752.0 226.4,758.5 231.4,755.2 236.4,755.8 241.5,758.4 246.5,758.7 251.5,752.5 256.5,753.3 261.6,750.8 266.6,747.5 271.6,749.2 276.7,749.7 281.7,752.7 286.7,751.2 291.8,757.5 296.8,758.1 301.8,753.5 306.9,752.1 311.9,748.6 316.9,748.0 322.0,747.1 327.0,745.3"/>
<polyline points="15.0,757.7 20.0,750.6 25.1,747.7 30.1,750.1 35.1,749.3 40.2,753.8 45.2,756.8 50.2,756.1 55.3,761.3 60.3,759.8 65.3,762.2 70.4,763.5 75.4,761.9 80.4,759.7 85.5,759.9 90.5,756.1 95.5,758.2 100.5,761.4 105.6,764.8 110.6,766.6 115.6,766.4 120.7,766.2 125.7,759.4 130.7,759.0 135.8,753.8 140.8,747.3 145.8,745.1 150.9,746.0 155.9,751.4 160.9,755.3 166.0,756.1 171.0,759.1 176.0,757.7 181.1,764.3 186.1,765.2 191.1,763.6 196.2,756.9 201.2,754.6 206.2,753.8 211.3,755.8 216.3,753.0 221.3,755.4 226.4,756.5 231.4,760.0 236.4,763.3 241.5,765.9 246.5,765.0 251.5,760.9 256.5,760.0 261.6,757.3 266.6,757.7 271.6,754.6 276.7,752.9 281.7,760.0 286.7,756.6 291.8,762.1 296.8,763.5 301.8,757.5 306.9,755.3 311.9,758.0 316.9,754.6 322.0,751.8 327.0,746.3"/>
<polyline points="15.0,759.2 20.0,754.6 25.1,752.2 30.1,755.8 35.1,754.9 40.2,756.5 45.2,760.7 50.2,763.9 55.3,766.0 60.3,771.2 65.3,772.0 70.4,765.5 75.4,764.2 80.4,761.7 85.5,762.2 90.5,761.9 95.5,763.1 100.5,768.7 105.6,766.8 110.6,770.1 115.6,769.4 120.7,764.8 125.7,765.0 130.7,758.4 135.8,761.4 140.8,759.1 145.8,756.2 150.9,753.8 155.9,759.7 160.9,756.6 166.0,759.7 171.0,764.2 176.0,765.6 181.1,765.7 186.1,769.7 191.1,763.6 196.2,765.2 201.2,760.7 206.2,756.8 211.3,756.5 216.3,760.7 221.3,760.6 226.4,767.2 231.4,766.3 236.4,772.5 241.5,768.8 246.5,771.7 251.5,767.0 256.5,763.4 261.6,765.4 266.6,760.7 271.6,757.8 276.7,762.1 281.7,758.1 286.7,761.1 291.8,762.0 296.8,765.8 301.8,766.2 306.9,764.1 311.9,757.0 316.9,759.4 322.0,753.3 327.0,757.9"/>
<polyline points="15.0,759.9 20.0,761.3 25.1,759.9 30.1,762.2 35.1,763.4 40.2,765.5 45.2,766.3 50.2,771.7 55.3,774.2 60.3,778.4 65.3,776.8 70.4,777.1 75.4,772.5 80.4,766.7 85.5,767.2 90.5,767.4 95.5,769.1 100.5,772.1 105.6,772.4 110.6,773.5 115.6,773.7 120.7,773.3 125.7,771.5 130.7,769.9 135.8,765.2 140.8,764.7 145.8,764.6 150.9,758.7 155.9,764.4 160.9,766.0 166.0,767.3 171.0,770.6 176.0,769.4 181.1,774.0 186.1,772.4 191.1,767.5 196.2,763.1 201.2,760.8 206.2,760.7 211.3,763.6 216.3,761.7 221.3,768.7 226.4,772.0 231.4,772.3 236.4,776.5 241.5,778.6 246.5,777.3 251.5,774.0 256.5,774.9 261.6,768.9 266.6,766.5 271.6,761.3 276.7,760.9 281.7,763.2 286.7,763.0 291.8,768.0 296.8,770.1 301.8,766.2 306.9,767.6 311.9,764.6 316.9,762.2 322.0,763.4 327.0,764.6"/>
<polyline points="15.0,769.0 20.0,764.2 25.1,765.0 30.1,765.9 35.1,769.6 40.2,773.3 45.2,778.2 50.2,776.0 55.3,782.3 60.3,782.3 65.3,780.2 70.4,776.5 75.4,776.2 80.4,773.2 85.5,774.6 90.5,770.5 95.5,771.2 100.5,772.9 105.6,775.7 110.6,774.0 115.6,778.5 120.7,775.1 125.7,775.7 130.7,777.6 135.8,773.0 140.8,770.1 145.8,771.0 150.9,770.6 155.9,767.5 160.9,768.1 166.0,770.0 171.0,774.3 176.0,776.9 181.1,774.6 186.1,772.9 191.1,772.9 196.2,768.3 201.2,769.6 206.2,771.0 211.3,770.3 216.3,772.9 221.3,775.9 226.4,775.2 231.4,780.4 236.4,783.2 241.5,785.8 246.5,783.0 251.5,777.1 256.5,775.3 261.6,769.4 266.6,767.8 271.6,768.0 276.7,766.1 281.7,766.4 286.7,771.3 291.8,771.9 296.8,776.6 301.8,773.2 306.9,776.8 311.9,774.8 316.9,769.7 322.0,771.6 327.0,767.1"/>
<polyline points="15.0,774.5 20.0,771.2 25.1,770.1 30.1,773.4 35.1,776.0 40.2,776.2 45.2,780.6 50.2,785.0 55.3,786.0 60.3,789.1 65.3,784.8 70.4,782.7 75.4,777.3 80.4,778.6 85.5,773.1 90.5,774.0 95.5,776.4 100.5,778.7 105.6,778.0 110.6,783.4 115.6,785.3 120.7,784.1 125.7,781.0 130.7,784.3 135.8,775.7 140.8,772.5 145.8,773.3 150.9,772.4 155.9,774.5 160.9,774.3 166.0,777.7 171.0,780.5 176.0,775.5 181.1,778.2 186.1,779.0 191.1,776.5 196.2,776.3 201.2,776.9 206.2,774.6 211.3,773.2 216.3,780.4 221.3,783.8 226.4,782.7 231.4,786.2 236.4,787.0 241.5,790.6 246.5,785.4 251.5,781.3 256.5,778.6 261.6,775.0 266.6,776.0 271.6,772.7 276.7,775.7 281.7,775.2 286.7,779.3 291.8,779.7 296.8,783.9 301.8,780.7 306.9,778.4 311.9,779.7 316.9,779.3 322.0,775.8 327.0,775.3"/>
<polyline points="15.0,779.0 20.0,776.1 25.1,781.3 30.1,778.6 35.1,781.8 40.2,780.3 45.2,783.6 50.2,786.1 55.3,789.4 60.3,791.3 65.3,791.1 70.4,787.1 75.4,784.2 80.4,778.4 85.5,778.0 90.5,783.8 95.5,782.9 100.5,786.6 105.6,785.6 110.6,792.4 115.6,788.8 120.7,792.8 125.7,791.5 130.7,787.4 135.8,785.0 140.8,776.5 145.8,775.5 150.9,773.5 155.9,777.0 160.9,774.7 166.0,777.7 171.0,781.2 176.0,784.0 181.1,785.9 186.1,785.0 191.1,784.7 196.2,781.7 201.2,779.6 206.2,782.9 211.3,782.7 216.3,783.1 221.3,784.5 226.4,787.6 231.4,791.4 236.4,791.9 241.5,789.7 246.5,788.6 251.5,784.6 256.5,786.7 261.6,778.7 266.6,780.8 271.6,780.7 276.7,782.2 281.7,780.4 286.7,783.3 291.8,786.1 296.8,787.4 301.8,784.9 306.9,784.8 311.9,786.1 316.9,784.6 322.0,778.3 327.0,780.0"/>
<polyline points="15.0,783.6 20.0,783.2 25.1,784.0 30.1,780.9 35.1,787.7 40.2,785.0 45.2,787.9 50.2,789.7 55.3,791.3 60.3,796.2 65.3,789.4 70.4,790.6 75.4,789.1 80.4,789.0 85.5,786.5 90.5,786.4 95.5,792.3 100.5,794.7 105.6,792.8 110.6,794.0 115.6,795.0 120.7,798.8 125.7,797.0 130.7,787.8 135.8,787.3 140.8,783.6 145.8,780.7 150.9,777.2 155.9,782.1 160.9,782.5 166.0,787.0 171.0,788.3 176.0,787.7 181.1,789.6 186.1,789.6 191.1,788.5 196.2,790.2 201.2,787.6 206.2,785.4 211.3,785.2 216.3,788.6 221.3,789.4 226.4,793.0 231.4,795.7 236.4,794.6 241.5,793.3 246.5,795.0 251.5,793.8 256.5,788.5 261.6,788.1 266.6,788.5 271.6,784.3 276.7,785.2 281.7,784.9 286.7,788.4 291.8,794.6 296.8,790.8 301.8,795.9 306.9,790.4 311.9,790.0 316.9,787.9 322.0,785.5 327.0,779.7"/>
<polyline points="15.0,791.2 20.0,790.6 25.1,789.9 30.1,786.2 35.1,786.2 40.2,788.7 45.2,791.7 50.2,797.9 55.3,800.5 60.3,797.7 65.3,796.7 70.4,794.7 75.4,794.9 80.4,795.9 85.5,792.9 90.5,796.5 95.5,793.6 100.5,799.1 105.6,799.1 110.6,797.9 115.6,798.8 120.7,801.6 125.7,798.4 130.7,791.3 135.8,787.5 140.8,788.6 145.8,786.8 150.9,782.1 155.9,784.2 160.9,791.1 166.0,792.8 171.0,797.1 176.0,795.0 181.1,798.6 186.1,801.1 191.1,795.6 196.2,796.8 201.2,791.6 206.2,789.3 211.3,790.3 216.3,794.5 221.3,792.2 226.4,798.3 231.4,797.7 236.4,798.1 241.5,799.9 246.5,797.3 251.5,797.2 256.5,795.0 261.6,795.3 266.6,790.8 271.6,793.9 276.7,790.4 281.7,791.6 286.7,797.4 291.8,799.7 296.8,797.4 301.8,798.8 306.9,794.9 311.9,793.8 316.9,788.2 322.0,786.3 327.0,784.6"/>
<polyline points="15.0,796.1 20.0,789.5 25.1,793.5 30.1,790.8 35.1,789.1 40.2,793.0 45.2,798.6 50.2,803.3 55.3,803.8 60.3,803.7 65.3,802.5 70.4,806.2 75.4,799.9 80.4,804.8 85.5,798.4 90.5,803.1 95.5,802.9 100.5,803.5 105.6,800.9 110.6,804.9 115.6,807.7 120.7,802.5 125.7,801.7 130.7,796.7 135.8,798.3 140.8,793.2 145.8,792.0 150.9,794.7 155.9,793.0 160.9,799.2 166.0,796.9 171.0,800.2 176.0,806.0 181.1,803.8 186.1,805.2 191.1,802.9 196.2,801.3 201.2,795.2 206.2,792.2 211.3,797.7 216.3,795.0 221.3,800.5 226.4,800.5 231.4,807.0 236.4,806.5 241.5,807.8 246.5,804.9 251.5,805.4 256.5,800.4 261.6,802.0 266.6,795.8 271.6,799.7 276.7,800.0 281.7,797.2 286.7,797.4 291.8,796.8 296.8,797.5 301.8,798.3 306.9,799.6 311.9,797.2 316.9,794.1 322.0,792.6 327.0,791.4"/>
<polyline points="15.0,795.7 20.0,798.9 25.1,798.1 30.1,794.9 35.1,798.1 40.2,799.6 45.2,807.2 50.2,810.1 55.3,813.0 60.3,810.1 65.3,815.1 70.4,813.4 75.4,809.8 80.4,807.3 85.5,807.3 90.5,805.7 95.5,801.3 100.5,803.3 105.6,804.1 110.6,810.7 115.6,811.9 120.7,806.9 125.7,805.5 130.7,801.1 135.8,802.4 140.8,799.8 145.8,797.8 150.9,800.1 155.9,803.0 160.9,802.0 166.0,802.7 171.0,805.1 176.0,806.3 181.1,805.6 186.1,805.8 191.1,802.0 196.2,803.9 201.2,796.9 206.2,801.9 211.3,800.0 216.3,804.1 221.3,804.9 226.4,810.6 231.4,811.9 236.4,814.4 241.5,814.3 246.5,816.9 251.5,810.3 256.5,810.0 261.6,805.1 266.6,801.9 271.6,804.4 276.7,801.9 281.7,802.5 286.7,799.6 291.8,804.7 296.8,802.0 301.8,802.0 306.9,801.9 311.9,799.3 316.9,802.2 322.0,799.2 327.0,797.4"/>
<polyline points="15.0,806.3 20.0,802.0 25.1,799.2 30.1,801.0 35.1,804.8 40.2,810.1 45.2,810.3 50.2,817.4 55.3,819.4 60.3,820.9 65.3,819.3 70.4,815.5 75.4,810.7 80.4,810.4 85.5,808.1 90.5,806.0 95.5,805.1 100.5,812.8 105.6,811.3 110.6,815.5 115.6,813.3 120.7,817.2 125.7,815.5 130.7,808.6 135.8,806.9 140.8,803.9 145.8,804.0 150.9,807.2 155.9,808.0 160.9,806.0 166.0,811.0 171.0,810.9 176.0,808.7 181.1,814.1 186.1,813.6 191.1,811.6 196.2,809.7 201.2,805.5 206.2,802.5 211.3,806.3 216.3,806.4 221.3,809.8 226.4,817.1 231.4,816.4 236.4,817.3 241.5,822.4 246.5,817.1 251.5,816.9 256.5,809.7 261.6,808.3 266.6,807.2 271.6,807.8 276.7,802.8 281.7,805.7 286.7,808.8 291.8,811.7 296.8,813.5 301.8,810.2 306.9,811.1 311.9,806.4 316.9,809.8 322.0,808.7 327.0,807.8"/>
<polyline points="15.0,807.1 20.0,806.5 25.1,810.5 30.1,812.2 35.1,814.5 40.2,814.9 45.2,819.6 50.2,820.7 55.3,821.1 60.3,821.5 65.3,824.6 70.4,820.8 75.4,814.9 80.4,813.6 85.5,812.0 90.5,813.7 95.5,816.1 100.5,813.5 105.6,816.3 110.6,822.9 115.6,819.1 120.7,824.7 125.7,818.6 130.7,819.3 135.8,813.4 140.8,814.4 145.8,808.4 150.9,811.0 155.9,809.8 160.9,807.7 166.0,814.1 171.0,816.2 176.0,818.2 181.1,812.6 186.1,818.6 191.1,814.0 196.2,814.0 201.2,809.7 206.2,809.2 211.3,811.3 216.3,814.0 221.3,817.8 226.4,822.1 231.4,822.5 236.4,827.1 241.5,821.8 246.5,820.3 251.5,817.4 256.5,816.1 261.6,810.8 266.6,808.0 271.6,807.7 276.7,811.4 281.7,808.3 286.7,812.6 291.8,815.0 296.8,817.1 301.8,819.8 306.9,817.1 311.9,813.5 316.9,813.3 322.0,810.3 327.0,807.6"/>
<polyline points="15.0,818.0 20.0,817.6 25.1,816.6 30.1,813.1 35.1,820.3 40.2,821.2 45.2,821.0 50.2,826.9 55.3,826.4 60.3,825.3 65.3,823.1 70.4,825.3 75.4,819.4 80.4,820.2 85.5,815.1 90.5,816.1 95.5,819.7 100.5,819.8 105.6,827.9 110.6,828.4 115.6,828.7 120.7,828.1 125.7,824.9 130.7,825.5 135.8,822.8 140.8,814.2 145.8,811.3 150.9,809.2 155.9,812.2 160.9,816.7 166.0,816.9 171.0,818.9 176.0,821.7 181.1,820.9 186.1,822.8 191.1,821.8 196.2,818.4 201.2,817.8 206.2,815.9 211.3,820.5 216.3,819.2 221.3,825.9 226.4,829.0 231.4,827.0 236.4,827.5 241.5,829.2 246.5,824.5 251.5,823.2 256.5,820.4 261.6,820.4 266.6,813.6 271.6,817.4 276.7,813.4 281.7,818.7 286.7,819.3 291.8,821.1 296.8,825.3 301.8,824.3 306.9,826.1 311.9,824.1 316.9,817.1 322.0,813.6 327.0,812.1"/>
<polyline points="15.0,825.6 20.0,821.5 25.1,821.2 30.1,818.8 35.1,822.9 40.2,827.1 45.2,823.3 50.2,829.1 55.3,829.5 60.3,832.5 65.3,830.8 70.4,830.0 75.4,826.6 80.4,824.5 85.5,822.1 90.5,821.6 95.5,824.5 100.5,831.6 105.6,830.0 110.6,836.1 115.6,833.5 120.7,832.6 125.7,830.6 130.7,824.2 135.8,826.2 140.8,818.0 145.8,816.0 150.9,815.6 155.9,816.0 160.9,818.2 166.0,821.9 171.0,827.6 176.0,825.8 181.1,829.6 186.1,831.6 191.1,829.9 196.2,825.4 201.2,822.8 206.2,826.9 211.3,822.9 216.3,824.5 221.3,827.4 226.4,830.0 231.4,832.8 236.4,832.9 241.5,831.2 246.5,833.2 251.5,830.2 256.5,823.4 261.6,822.3 266.6,821.8 271.6,818.9 276.7,823.0 281.7,823.6 286.7,827.3 291.8,831.3 296.8,832.5 301.8,827.9 306.9,829.8 311.9,826.5 316.9,819.9 322.0,816.6 327.0,820.1"/>
<polyline points="15.0,831.0 20.0,829.0 25.1,821.9 30.1,821.7 35.1,826.8 40.2,830.5 45.2,830.8 50.2,835.2 55.3,832.9 60.3,833.0 65.3,837.8 70.4,837.3 75.4,833.9 80.4,835.0 85.5,829.0 90.5,831.7 95.5,829.9 100.5,832.0 105.6,837.0 110.6,839.6 115.6,841.3 120.7,837.4 125.7,836.0 130.7,828.9 135.8,829.7 140.8,821.6 145.8,824.3 150.9,818.7 155.9,825.7 160.9,826.5 166.0,829.7 171.0,834.6 176.0,836.8 181.1,833.7 186.1,836.3 191.1,836.8 196.2,829.5 201.2,830.0 206.2,830.1 211.3,827.5 216.3,829.6 221.3,828.0 226.4,831.1 231.4,835.8 236.4,835.2 241.5,835.4 246.5,834.7 251.5,837.0 256.5,836.1 261.6,828.3 266.6,830.9 271.6,831.5 276.7,832.2 281.7,829.9 286.7,834.1 291.8,832.8 296.8,830.8 301.8,835.8 306.9,834.2 311.9,825.9 316.9,825.1 322.0,824.4 327.0,824.4"/>
<polyline points="15.0,833.4 20.0,828.2 25.1,830.5 30.1,825.7 35.1,827.0 40.2,833.3 45.2,835.9 50.2,835.8 55.3,838.3 60.3,839.3 65.3,843.0 70.4,843.4 75.4,842.8 80.4,839.8 85.5,836.7 90.5,837.8 95.5,838.0 100.5,837.5 105.6,838.7 110.6,842.9 115.6,842.0 120.7,842.0 125.7,834.8 130.7,838.1 135.8,829.2 140.8,827.7 145.8,826.0 150.9,829.3 155.9,832.3 160.9,832.8 166.0,838.4 171.0,839.2 176.0,838.0 181.1,842.6 186.1,841.9 191.1,836.2 196.2,834.0 201.2,831.5 206.2,834.1 211.3,833.2 216.3,833.3 221.3,836.8 226.4,836.9 231.4,841.4 236.4,845.9 241.5,842.3 246.5,843.1 251.5,844.8 256.5,838.5 261.6,837.1 266.6,836.6 271.6,831.7 276.7,834.8 281.7,832.0 286.7,837.4 291.8,837.8 296.8,838.8 301.8,837.9 306.9,833.8 311.9,836.0 316.9,832.8 322.0,827.6 327.0,828.4"/>
<polyline points="15.0,833.4 20.0,831.3 25.1,832.3 30.1,833.2 35.1,836.8 40.2,839.6 45.2,838.9 50.2,846.5 55.3,848.5 60.3,851.3 65.3,846.5 70.4,849.0 75.4,848.0 80.4,846.0 85.5,839.0 90.5,841.0 95.5,842.7 100.5,839.6 105.6,842.8 110.6,844.6 115.6,842.7 120.7,844.3 125.7,844.7 130.7,840.0 135.8,840.2 140.8,835.8 145.8,836.8 150.9,833.1 155.9,835.5 160.9,841.4 166.0,843.2 171.0,846.4 176.0,846.4 181.1,841.6 186.1,843.0 191.1,844.6 196.2,840.4 201.2,836.3 206.2,838.8 211.3,833.8 216.3,838.8 221.3,843.3 226.4,844.8 231.4,847.4 236.4,847.4 241.5,851.7 246.5,853.9 251.5,848.7 256.5,844.8 261.6,845.3 266.6,840.2 271.6,840.4 276.7,836.9 281.7,835.9 286.7,837.5 291.8,840.4 296.8,841.1 301.8,843.2 306.9,840.5 311.9,837.8 316.9,840.4 322.0,836.9 327.0,835.5"/>
<polyline points="15.0,842.2 20.0,837.8 25.1,837.5 30.1,839.6 35.1,844.6 40.2,843.8 45.2,847.5 50.2,852.7 55.3,853.9 60.3,852.4 65.3,852.4 70.4,853.7 75.4,852.4 80.4,847.6 85.5,843.8 90.5,843.0 95.5,846.7 100.5,847.7 105.6,849.7 110.6,847.7 115.6,849.3 120.7,854.7 125.7,848.2 130.7,849.1 135.8,844.1 140.8,844.6 145.8,841.4 150.9,841.8 155.9,842.7 160.9,845.1 166.0,844.1 171.0,847.7 176.0,846.2 181.1,847.7 186.1,846.6 191.1,845.0 196.2,843.1 201.2,843.3 206.2,839.4 211.3,845.4 216.3,842.5 221.3,849.7 226.4,851.1 231.4,855.7 236.4,858.0 241.5,858.7 246.5,859.2 251.5,856.1 256.5,850.7 261.6,847.3 266.6,844.2 271.6,844.5 276.7,841.4 281.7,843.4 286.7,841.9 291.8,849.0 296.8,846.5 301.8,850.6 306.9,850.1 311.9,847.8 316.9,843.1 322.0,841.3 327.0,843.4"/>
<polyline points="15.0,845.7 20.0,842.5 25.1,842.3 30.1,848.7 35.1,845.6 40.2,848.8 45.2,857.4 50.2,857.5 55.3,859.6 60.3,860.4 65.3,859.9 70.4,854.1 75.4,851.3 80.4,853.4 85.5,847.5 90.5,846.8 95.5,846.7 100.5,852.7 105.6,857.5 110.6,855.3 115.6,856.1 120.7,859.9 125.7,859.1 130.7,855.8 135.8,849.3 140.8,850.2 145.8,847.6 150.9,847.3 155.9,847.3 160.9,847.0 166.0,846.3 171.0,850.7 176.0,854.5 181.1,853.5 186.1,854.1 191.1,848.1 196.2,850.1 201.2,850.7 206.2,846.7 211.3,847.7 216.3,854.8 221.3,853.7 226.4,858.4 231.4,859.4 236.4,864.8 241.5,861.3 246.5,856.7 251.5,856.8 256.5,850.5 261.6,852.7 266.6,847.3 271.6,844.2 276.7,844.8 281.7,851.0 286.7,850.4 291.8,855.7 296.8,851.5 301.8,855.4 306.9,852.3 311.9,849.9 316.9,851.4 322.0,851.3 327.0,849.2"/>
<polyline points="15.0,852.5 20.0,853.3 25.1,849.6 30.1,851.6 35.1,854.2 40.2,857.4 45.2,862.2 50.2,859.3 55.3,863.1 60.3,863.1 65.3,864.0 70.4,860.8 75.4,858.6 80.4,858.2 85.5,855.9 90.5,853.7 95.5,858.1 100.5,859.5 105.6,858.9 110.6,864.7 115.6,862.2 120.7,865.3 125.7,865.0 130.7,861.2 135.8,857.5 140.8,853.9 145.8,848.8 150.9,847.2 155.9,850.5 160.9,847.9 166.0,856.1 171.0,858.5 176.0,857.4 181.1,856.8 186.1,857.8 191.1,860.3 196.2,854.9 201.2,855.1 206.2,854.7 211.3,858.4 216.3,855.3 221.3,857.9 226.4,865.0 231.4,861.7 236.4,866.9 241.5,867.4 246.5,862.1 251.5,862.6 256.5,857.9 261.6,856.2 266.6,851.3 271.6,853.4 276.7,854.9 281.7,856.2 286.7,860.0 291.8,856.5 296.8,860.2 301.8,863.8 306.9,862.1 311.9,861.4 316.9,853.8 322.0,849.9 327.0,850.9"/>
</g><g stroke="#000" stroke-width="1.45" fill="none">
<polyline points="15.0,694.2 15.0,701.5 15.0,705.3 15.0,715.8 15.0,718.0 15.0,722.9 15.0,728.3 15.0,729.8 15.0,739.0 15.0,743.5 15.0,752.6 15.0,757.7 15.0,759.2 15.0,759.9 15.0,769.0 15.0,774.5 15.0,779.0 15.0,783.6 15.0,791.2 15.0,796.1 15.0,795.7 15.0,806.3 15.0,807.1 15.0,818.0 15.0,825.6 15.0,831.0 15.0,833.4 15.0,833.4 15.0,842.2 15.0,845.7 15.0,852.5"/>
<polyline points="20.0,692.0 20.0,697.5 20.0,707.9 20.0,714.1 20.0,717.7 20.0,718.0 20.0,723.4 20.0,729.2 20.0,734.0 20.0,742.1 20.0,749.3 20.0,750.6 20.0,754.6 20.0,761.3 20.0,764.2 20.0,771.2 20.0,776.1 20.0,783.2 20.0,790.6 20.0,789.5 20.0,798.9 20.0,802.0 20.0,806.5 20.0,817.6 20.0,821.5 20.0,829.0 20.0,828.2 20.0,831.3 20.0,837.8 20.0,842.5 20.0,853.3"/>
<polyline points="25.1,689.4 25.1,697.1 25.1,704.1 25.1,710.5 25.1,712.0 25.1,714.7 25.1,721.9 25.1,726.4 25.1,737.4 25.1,740.1 25.1,746.0 25.1,747.7 25.1,752.2 25.1,759.9 25.1,765.0 25.1,770.1 25.1,781.3 25.1,784.0 25.1,789.9 25.1,793.5 25.1,798.1 25.1,799.2 25.1,810.5 25.1,816.6 25.1,821.2 25.1,821.9 25.1,830.5 25.1,832.3 25.1,837.5 25.1,842.3 25.1,849.6"/>
<polyline points="30.1,689.4 30.1,700.4 30.1,706.0 30.1,711.3 30.1,711.5 30.1,714.5 30.1,724.5 30.1,730.7 30.1,737.5 30.1,744.0 30.1,747.2 30.1,750.1 30.1,755.8 30.1,762.2 30.1,765.9 30.1,773.4 30.1,778.6 30.1,780.9 30.1,786.2 30.1,790.8 30.1,794.9 30.1,801.0 30.1,812.2 30.1,813.1 30.1,818.8 30.1,821.7 30.1,825.7 30.1,833.2 30.1,839.6 30.1,848.7 30.1,851.6"/>
<polyline points="35.1,697.2 35.1,704.3 35.1,709.3 35.1,714.0 35.1,716.1 35.1,721.9 35.1,727.6 35.1,733.4 35.1,740.8 35.1,745.1 35.1,751.6 35.1,749.3 35.1,754.9 35.1,763.4 35.1,769.6 35.1,776.0 35.1,781.8 35.1,787.7 35.1,786.2 35.1,789.1 35.1,798.1 35.1,804.8 35.1,814.5 35.1,820.3 35.1,822.9 35.1,826.8 35.1,827.0 35.1,836.8 35.1,844.6 35.1,845.6 35.1,854.2"/>
<polyline points="40.2,700.3 40.2,704.5 40.2,713.2 40.2,713.7 40.2,714.1 40.2,719.2 40.2,726.3 40.2,736.3 40.2,742.4 40.2,749.0 40.2,748.8 40.2,753.8 40.2,756.5 40.2,765.5 40.2,773.3 40.2,776.2 40.2,780.3 40.2,785.0 40.2,788.7 40.2,793.0 40.2,799.6 40.2,810.1 40.2,814.9 40.2,821.2 40.2,827.1 40.2,830.5 40.2,833.3 40.2,839.6 40.2,843.8 40.2,848.8 40.2,857.4"/>
<polyline points="45.2,699.0 45.2,705.0 45.2,709.9 45.2,717.2 45.2,721.8 45.2,726.7 45.2,733.5 45.2,740.6 45.2,744.1 45.2,746.9 45.2,750.8 45.2,756.8 45.2,760.7 45.2,766.3 45.2,778.2 45.2,780.6 45.2,783.6 45.2,787.9 45.2,791.7 45.2,798.6 45.2,807.2 45.2,810.3 45.2,819.6 45.2,821.0 45.2,823.3 45.2,830.8 45.2,835.9 45.2,838.9 45.2,847.5 45.2,857.4 45.2,862.2"/>
<polyline points="50.2,707.6 50.2,708.4 50.2,713.1 50.2,720.8 50.2,720.3 50.2,725.0 50.2,734.1 50.2,743.1 50.2,747.5 50.2,754.3 50.2,758.4 50.2,756.1 50.2,763.9 50.2,771.7 50.2,776.0 50.2,785.0 50.2,786.1 50.2,789.7 50.2,797.9 50.2,803.3 50.2,810.1 50.2,817.4 50.2,820.7 50.2,826.9 50.2,829.1 50.2,835.2 50.2,835.8 50.2,846.5 50.2,852.7 50.2,857.5 50.2,859.3"/>
<polyline points="55.3,708.2 55.3,709.9 55.3,716.3 55.3,719.6 55.3,724.2 55.3,733.8 55.3,738.2 55.3,746.5 55.3,752.7 55.3,751.1 55.3,758.7 55.3,761.3 55.3,766.0 55.3,774.2 55.3,782.3 55.3,786.0 55.3,789.4 55.3,791.3 55.3,800.5 55.3,803.8 55.3,813.0 55.3,819.4 55.3,821.1 55.3,826.4 55.3,829.5 55.3,832.9 55.3,838.3 55.3,848.5 55.3,853.9 55.3,859.6 55.3,863.1"/>
<polyline points="60.3,707.1 60.3,713.1 60.3,716.0 60.3,720.1 60.3,722.3 60.3,730.7 60.3,736.6 60.3,742.2 60.3,751.1 60.3,752.5 60.3,753.8 60.3,759.8 60.3,771.2 60.3,778.4 60.3,782.3 60.3,789.1 60.3,791.3 60.3,796.2 60.3,797.7 60.3,803.7 60.3,810.1 60.3,820.9 60.3,821.5 60.3,825.3 60.3,832.5 60.3,833.0 60.3,839.3 60.3,851.3 60.3,852.4 60.3,860.4 60.3,863.1"/>
<polyline points="65.3,704.3 65.3,709.2 65.3,717.0 65.3,719.5 65.3,724.9 65.3,733.1 65.3,740.9 65.3,745.5 65.3,746.7 65.3,754.7 65.3,755.5 65.3,762.2 65.3,772.0 65.3,776.8 65.3,780.2 65.3,784.8 65.3,791.1 65.3,789.4 65.3,796.7 65.3,802.5 65.3,815.1 65.3,819.3 65.3,824.6 65.3,823.1 65.3,830.8 65.3,837.8 65.3,843.0 65.3,846.5 65.3,852.4 65.3,859.9 65.3,864.0"/>
<polyline points="70.4,702.7 70.4,708.5 70.4,711.2 70.4,720.1 70.4,726.9 70.4,729.9 70.4,738.0 70.4,745.0 70.4,742.8 70.4,748.4 70.4,752.2 70.4,763.5 70.4,765.5 70.4,777.1 70.4,776.5 70.4,782.7 70.4,787.1 70.4,790.6 70.4,794.7 70.4,806.2 70.4,813.4 70.4,815.5 70.4,820.8 70.4,825.3 70.4,830.0 70.4,837.3 70.4,843.4 70.4,849.0 70.4,853.7 70.4,854.1 70.4,860.8"/>
<polyline points="75.4,702.7 75.4,708.2 75.4,711.0 75.4,718.8 75.4,724.2 75.4,732.7 75.4,733.8 75.4,739.1 75.4,744.8 75.4,746.9 75.4,749.5 75.4,761.9 75.4,764.2 75.4,772.5 75.4,776.2 75.4,777.3 75.4,784.2 75.4,789.1 75.4,794.9 75.4,799.9 75.4,809.8 75.4,810.7 75.4,814.9 75.4,819.4 75.4,826.6 75.4,833.9 75.4,842.8 75.4,848.0 75.4,852.4 75.4,851.3 75.4,858.6"/>
<polyline points="80.4,702.3 80.4,706.2 80.4,705.8 80.4,711.8 80.4,720.2 80.4,729.4 80.4,734.8 80.4,738.1 80.4,740.5 80.4,747.0 80.4,751.3 80.4,759.7 80.4,761.7 80.4,766.7 80.4,773.2 80.4,778.6 80.4,778.4 80.4,789.0 80.4,795.9 80.4,804.8 80.4,807.3 80.4,810.4 80.4,813.6 80.4,820.2 80.4,824.5 80.4,835.0 80.4,839.8 80.4,846.0 80.4,847.6 80.4,853.4 80.4,858.2"/>
<polyline points="85.5,699.4 85.5,703.6 85.5,706.4 85.5,713.5 85.5,719.2 85.5,725.9 85.5,730.0 85.5,732.3 85.5,739.3 85.5,744.9 85.5,747.3 85.5,759.9 85.5,762.2 85.5,767.2 85.5,774.6 85.5,773.1 85.5,778.0 85.5,786.5 85.5,792.9 85.5,798.4 85.5,807.3 85.5,808.1 85.5,812.0 85.5,815.1 85.5,822.1 85.5,829.0 85.5,836.7 85.5,839.0 85.5,843.8 85.5,847.5 85.5,855.9"/>
<polyline points="90.5,700.4 90.5,704.0 90.5,708.3 90.5,717.0 90.5,719.1 90.5,726.4 90.5,729.9 90.5,733.2 90.5,737.1 90.5,744.2 90.5,754.5 90.5,756.1 90.5,761.9 90.5,767.4 90.5,770.5 90.5,774.0 90.5,783.8 90.5,786.4 90.5,796.5 90.5,803.1 90.5,805.7 90.5,806.0 90.5,813.7 90.5,816.1 90.5,821.6 90.5,831.7 90.5,837.8 90.5,841.0 90.5,843.0 90.5,846.8 90.5,853.7"/>
<polyline points="95.5,696.9 95.5,705.4 95.5,711.4 95.5,717.9 95.5,721.1 95.5,728.8 95.5,730.6 95.5,737.8 95.5,742.3 95.5,747.4 95.5,751.9 95.5,758.2 95.5,763.1 95.5,769.1 95.5,771.2 95.5,776.4 95.5,782.9 95.5,792.3 95.5,793.6 95.5,802.9 95.5,801.3 95.5,805.1 95.5,816.1 95.5,819.7 95.5,824.5 95.5,829.9 95.5,838.0 95.5,842.7 95.5,846.7 95.5,846.7 95.5,858.1"/>
<polyline points="100.5,698.8 100.5,707.2 100.5,711.5 100.5,715.7 100.5,727.0 100.5,726.7 100.5,732.1 100.5,733.5 100.5,740.2 100.5,750.2 100.5,752.9 100.5,761.4 100.5,768.7 100.5,772.1 100.5,772.9 100.5,778.7 100.5,786.6 100.5,794.7 100.5,799.1 100.5,803.5 100.5,803.3 100.5,812.8 100.5,813.5 100.5,819.8 100.5,831.6 100.5,832.0 100.5,837.5 100.5,839.6 100.5,847.7 100.5,852.7 100.5,859.5"/>
<polyline points="105.6,698.0 105.6,706.9 105.6,715.5 105.6,721.8 105.6,728.0 105.6,733.2 105.6,736.2 105.6,735.9 105.6,745.6 105.6,748.5 105.6,759.7 105.6,764.8 105.6,766.8 105.6,772.4 105.6,775.7 105.6,778.0 105.6,785.6 105.6,792.8 105.6,799.1 105.6,800.9 105.6,804.1 105.6,811.3 105.6,816.3 105.6,827.9 105.6,830.0 105.6,837.0 105.6,838.7 105.6,842.8 105.6,849.7 105.6,857.5 105.6,858.9"/>
<polyline points="110.6,705.6 110.6,710.0 110.6,718.0 110.6,724.5 110.6,726.2 110.6,728.0 110.6,736.4 110.6,738.9 110.6,747.9 110.6,753.4 110.6,760.6 110.6,766.6 110.6,770.1 110.6,773.5 110.6,774.0 110.6,783.4 110.6,792.4 110.6,794.0 110.6,797.9 110.6,804.9 110.6,810.7 110.6,815.5 110.6,822.9 110.6,828.4 110.6,836.1 110.6,839.6 110.6,842.9 110.6,844.6 110.6,847.7 110.6,855.3 110.6,864.7"/>
<polyline points="115.6,704.9 115.6,711.2 115.6,719.1 115.6,724.9 115.6,730.7 115.6,732.6 115.6,732.2 115.6,743.6 115.6,748.1 115.6,754.2 115.6,758.2 115.6,766.4 115.6,769.4 115.6,773.7 115.6,778.5 115.6,785.3 115.6,788.8 115.6,795.0 115.6,798.8 115.6,807.7 115.6,811.9 115.6,813.3 115.6,819.1 115.6,828.7 115.6,833.5 115.6,841.3 115.6,842.0 115.6,842.7 115.6,849.3 115.6,856.1 115.6,862.2"/>
<polyline points="120.7,706.0 120.7,714.1 120.7,720.3 120.7,722.8 120.7,725.3 120.7,727.1 120.7,733.3 120.7,740.1 120.7,746.5 120.7,755.1 120.7,759.3 120.7,766.2 120.7,764.8 120.7,773.3 120.7,775.1 120.7,784.1 120.7,792.8 120.7,798.8 120.7,801.6 120.7,802.5 120.7,806.9 120.7,817.2 120.7,824.7 120.7,828.1 120.7,832.6 120.7,837.4 120.7,842.0 120.7,844.3 120.7,854.7 120.7,859.9 120.7,865.3"/>
<polyline points="125.7,700.2 125.7,709.3 125.7,713.7 125.7,720.7 125.7,725.6 125.7,729.4 125.7,730.1 125.7,738.6 125.7,748.3 125.7,756.1 125.7,757.2 125.7,759.4 125.7,765.0 125.7,771.5 125.7,775.7 125.7,781.0 125.7,791.5 125.7,797.0 125.7,798.4 125.7,801.7 125.7,805.5 125.7,815.5 125.7,818.6 125.7,824.9 125.7,830.6 125.7,836.0 125.7,834.8 125.7,844.7 125.7,848.2 125.7,859.1 125.7,865.0"/>
<polyline points="130.7,699.4 130.7,709.2 130.7,710.2 130.7,717.0 130.7,722.4 130.7,726.6 130.7,731.3 130.7,736.8 130.7,741.7 130.7,752.3 130.7,754.4 130.7,759.0 130.7,758.4 130.7,769.9 130.7,777.6 130.7,784.3 130.7,787.4 130.7,787.8 130.7,791.3 130.7,796.7 130.7,801.1 130.7,808.6 130.7,819.3 130.7,825.5 130.7,824.2 130.7,828.9 130.7,838.1 130.7,840.0 130.7,849.1 130.7,855.8 130.7,861.2"/>
<polyline points="135.8,700.8 135.8,708.2 135.8,711.0 135.8,714.0 135.8,713.6 135.8,724.1 135.8,725.2 135.8,737.3 135.8,742.6 135.8,744.2 135.8,747.6 135.8,753.8 135.8,761.4 135.8,765.2 135.8,773.0 135.8,775.7 135.8,785.0 135.8,787.3 135.8,787.5 135.8,798.3 135.8,802.4 135.8,806.9 135.8,813.4 135.8,822.8 135.8,826.2 135.8,829.7 135.8,829.2 135.8,840.2 135.8,844.1 135.8,849.3 135.8,857.5"/>
<polyline points="140.8,697.9 140.8,699.0 140.8,705.3 140.8,711.0 140.8,712.1 140.8,720.4 140.8,727.7 140.8,736.4 140.8,737.1 140.8,740.1 140.8,745.3 140.8,747.3 140.8,759.1 140.8,764.7 140.8,770.1 140.8,772.5 140.8,776.5 140.8,783.6 140.8,788.6 140.8,793.2 140.8,799.8 140.8,803.9 140.8,814.4 140.8,814.2 140.8,818.0 140.8,821.6 140.8,827.7 140.8,835.8 140.8,844.6 140.8,850.2 140.8,853.9"/>
<polyline points="145.8,693.0 145.8,702.6 145.8,705.5 145.8,705.3 145.8,713.2 145.8,720.8 145.8,728.1 145.8,731.3 145.8,737.7 145.8,737.0 145.8,741.1 145.8,745.1 145.8,756.2 145.8,764.6 145.8,771.0 145.8,773.3 145.8,775.5 145.8,780.7 145.8,786.8 145.8,792.0 145.8,797.8 145.8,804.0 145.8,808.4 145.8,811.3 145.8,816.0 145.8,824.3 145.8,826.0 145.8,836.8 145.8,841.4 145.8,847.6 145.8,848.8"/>
<polyline points="150.9,696.4 150.9,700.5 150.9,703.9 150.9,708.3 150.9,708.7 150.9,717.6 150.9,726.3 150.9,731.9 150.9,732.3 150.9,738.8 150.9,744.5 150.9,746.0 150.9,753.8 150.9,758.7 150.9,770.6 150.9,772.4 150.9,773.5 150.9,777.2 150.9,782.1 150.9,794.7 150.9,800.1 150.9,807.2 150.9,811.0 150.9,809.2 150.9,815.6 150.9,818.7 150.9,829.3 150.9,833.1 150.9,841.8 150.9,847.3 150.9,847.2"/>
<polyline points="155.9,692.2 155.9,701.6 155.9,701.7 155.9,705.9 155.9,714.5 155.9,720.6 155.9,728.9 155.9,733.8 155.9,737.3 155.9,738.4 155.9,742.4 155.9,751.4 155.9,759.7 155.9,764.4 155.9,767.5 155.9,774.5 155.9,777.0 155.9,782.1 155.9,784.2 155.9,793.0 155.9,803.0 155.9,808.0 155.9,809.8 155.9,812.2 155.9,816.0 155.9,825.7 155.9,832.3 155.9,835.5 155.9,842.7 155.9,847.3 155.9,850.5"/>
<polyline points="160.9,693.8 160.9,701.5 160.9,703.4 160.9,709.7 160.9,715.8 160.9,720.0 160.9,725.5 160.9,734.4 160.9,739.0 160.9,739.0 160.9,747.5 160.9,755.3 160.9,756.6 160.9,766.0 160.9,768.1 160.9,774.3 160.9,774.7 160.9,782.5 160.9,791.1 160.9,799.2 160.9,802.0 160.9,806.0 160.9,807.7 160.9,816.7 160.9,818.2 160.9,826.5 160.9,832.8 160.9,841.4 160.9,845.1 160.9,847.0 160.9,847.9"/>
<polyline points="166.0,701.3 166.0,702.1 166.0,704.0 166.0,708.6 166.0,720.6 166.0,728.1 166.0,728.4 166.0,732.3 166.0,738.9 166.0,745.7 166.0,745.6 166.0,756.1 166.0,759.7 166.0,767.3 166.0,770.0 166.0,777.7 166.0,777.7 166.0,787.0 166.0,792.8 166.0,796.9 166.0,802.7 166.0,811.0 166.0,814.1 166.0,816.9 166.0,821.9 166.0,829.7 166.0,838.4 166.0,843.2 166.0,844.1 166.0,846.3 166.0,856.1"/>
<polyline points="171.0,700.0 171.0,702.2 171.0,711.5 171.0,712.4 171.0,724.3 171.0,727.8 171.0,733.2 171.0,736.3 171.0,741.9 171.0,745.7 171.0,750.9 171.0,759.1 171.0,764.2 171.0,770.6 171.0,774.3 171.0,780.5 171.0,781.2 171.0,788.3 171.0,797.1 171.0,800.2 171.0,805.1 171.0,810.9 171.0,816.2 171.0,818.9 171.0,827.6 171.0,834.6 171.0,839.2 171.0,846.4 171.0,847.7 171.0,850.7 171.0,858.5"/>
<polyline points="176.0,700.5 176.0,707.9 176.0,708.8 176.0,715.3 176.0,724.2 176.0,733.3 176.0,734.7 176.0,739.0 176.0,738.9 176.0,749.6 176.0,751.5 176.0,757.7 176.0,765.6 176.0,769.4 176.0,776.9 176.0,775.5 176.0,784.0 176.0,787.7 176.0,795.0 176.0,806.0 176.0,806.3 176.0,808.7 176.0,818.2 176.0,821.7 176.0,825.8 176.0,836.8 176.0,838.0 176.0,846.4 176.0,846.2 176.0,854.5 176.0,857.4"/>
<polyline points="181.1,698.6 181.1,707.5 181.1,713.0 181.1,718.5 181.1,726.6 181.1,733.9 181.1,736.8 181.1,740.3 181.1,739.4 181.1,747.0 181.1,752.7 181.1,764.3 181.1,765.7 181.1,774.0 181.1,774.6 181.1,778.2 181.1,785.9 181.1,789.6 181.1,798.6 181.1,803.8 181.1,805.6 181.1,814.1 181.1,812.6 181.1,820.9 181.1,829.6 181.1,833.7 181.1,842.6 181.1,841.6 181.1,847.7 181.1,853.5 181.1,856.8"/>
<polyline points="186.1,700.6 186.1,707.2 186.1,709.9 186.1,721.7 186.1,723.0 186.1,731.5 186.1,732.5 186.1,733.8 186.1,741.3 186.1,747.2 186.1,756.7 186.1,765.2 186.1,769.7 186.1,772.4 186.1,772.9 186.1,779.0 186.1,785.0 186.1,789.6 186.1,801.1 186.1,805.2 186.1,805.8 186.1,813.6 186.1,818.6 186.1,822.8 186.1,831.6 186.1,836.3 186.1,841.9 186.1,843.0 186.1,846.6 186.1,854.1 186.1,857.8"/>
<polyline points="191.1,698.6 191.1,706.3 191.1,707.9 191.1,719.5 191.1,726.0 191.1,730.5 191.1,730.3 191.1,732.7 191.1,738.8 191.1,748.2 191.1,756.2 191.1,763.6 191.1,763.6 191.1,767.5 191.1,772.9 191.1,776.5 191.1,784.7 191.1,788.5 191.1,795.6 191.1,802.9 191.1,802.0 191.1,811.6 191.1,814.0 191.1,821.8 191.1,829.9 191.1,836.8 191.1,836.2 191.1,844.6 191.1,845.0 191.1,848.1 191.1,860.3"/>
<polyline points="196.2,698.4 196.2,701.8 196.2,709.6 196.2,715.5 196.2,719.5 196.2,727.4 196.2,729.9 196.2,734.5 196.2,742.3 196.2,743.9 196.2,751.3 196.2,756.9 196.2,765.2 196.2,763.1 196.2,768.3 196.2,776.3 196.2,781.7 196.2,790.2 196.2,796.8 196.2,801.3 196.2,803.9 196.2,809.7 196.2,814.0 196.2,818.4 196.2,825.4 196.2,829.5 196.2,834.0 196.2,840.4 196.2,843.1 196.2,850.1 196.2,854.9"/>
<polyline points="201.2,694.8 201.2,703.2 201.2,707.8 201.2,711.9 201.2,721.3 201.2,720.4 201.2,729.8 201.2,733.3 201.2,740.2 201.2,743.9 201.2,748.8 201.2,754.6 201.2,760.7 201.2,760.8 201.2,769.6 201.2,776.9 201.2,779.6 201.2,787.6 201.2,791.6 201.2,795.2 201.2,796.9 201.2,805.5 201.2,809.7 201.2,817.8 201.2,822.8 201.2,830.0 201.2,831.5 201.2,836.3 201.2,843.3 201.2,850.7 201.2,855.1"/>
<polyline points="206.2,697.4 206.2,698.9 206.2,710.9 206.2,717.2 206.2,720.6 206.2,718.5 206.2,726.5 206.2,733.7 206.2,741.5 206.2,748.3 206.2,749.5 206.2,753.8 206.2,756.8 206.2,760.7 206.2,771.0 206.2,774.6 206.2,782.9 206.2,785.4 206.2,789.3 206.2,792.2 206.2,801.9 206.2,802.5 206.2,809.2 206.2,815.9 206.2,826.9 206.2,830.1 206.2,834.1 206.2,838.8 206.2,839.4 206.2,846.7 206.2,854.7"/>
<polyline points="211.3,693.4 211.3,701.9 211.3,710.6 211.3,716.7 211.3,720.3 211.3,719.5 211.3,727.9 211.3,733.5 211.3,740.0 211.3,749.1 211.3,752.4 211.3,755.8 211.3,756.5 211.3,763.6 211.3,770.3 211.3,773.2 211.3,782.7 211.3,785.2 211.3,790.3 211.3,797.7 211.3,800.0 211.3,806.3 211.3,811.3 211.3,820.5 211.3,822.9 211.3,827.5 211.3,833.2 211.3,833.8 211.3,845.4 211.3,847.7 211.3,858.4"/>
<polyline points="216.3,701.2 216.3,706.9 216.3,709.2 216.3,712.0 216.3,721.8 216.3,722.5 216.3,727.9 216.3,732.7 216.3,743.8 216.3,747.7 216.3,752.9 216.3,753.0 216.3,760.7 216.3,761.7 216.3,772.9 216.3,780.4 216.3,783.1 216.3,788.6 216.3,794.5 216.3,795.0 216.3,804.1 216.3,806.4 216.3,814.0 216.3,819.2 216.3,824.5 216.3,829.6 216.3,833.3 216.3,838.8 216.3,842.5 216.3,854.8 216.3,855.3"/>
<polyline points="221.3,704.4 221.3,709.9 221.3,714.8 221.3,714.4 221.3,720.4 221.3,725.6 221.3,728.4 221.3,739.8 221.3,745.0 221.3,749.8 221.3,752.0 221.3,755.4 221.3,760.6 221.3,768.7 221.3,775.9 221.3,783.8 221.3,784.5 221.3,789.4 221.3,792.2 221.3,800.5 221.3,804.9 221.3,809.8 221.3,817.8 221.3,825.9 221.3,827.4 221.3,828.0 221.3,836.8 221.3,843.3 221.3,849.7 221.3,853.7 221.3,857.9"/>
<polyline points="226.4,707.1 226.4,713.4 226.4,717.4 226.4,720.3 226.4,722.6 226.4,730.1 226.4,735.6 226.4,743.7 226.4,744.7 226.4,750.9 226.4,758.5 226.4,756.5 226.4,767.2 226.4,772.0 226.4,775.2 226.4,782.7 226.4,787.6 226.4,793.0 226.4,798.3 226.4,800.5 226.4,810.6 226.4,817.1 226.4,822.1 226.4,829.0 226.4,830.0 226.4,831.1 226.4,836.9 226.4,844.8 226.4,851.1 226.4,858.4 226.4,865.0"/>
<polyline points="231.4,707.3 231.4,714.3 231.4,716.1 231.4,718.3 231.4,725.6 231.4,730.3 231.4,736.2 231.4,745.3 231.4,752.2 231.4,752.9 231.4,755.2 231.4,760.0 231.4,766.3 231.4,772.3 231.4,780.4 231.4,786.2 231.4,791.4 231.4,795.7 231.4,797.7 231.4,807.0 231.4,811.9 231.4,816.4 231.4,822.5 231.4,827.0 231.4,832.8 231.4,835.8 231.4,841.4 231.4,847.4 231.4,855.7 231.4,859.4 231.4,861.7"/>
<polyline points="236.4,712.1 236.4,713.9 236.4,716.7 236.4,722.8 236.4,726.8 236.4,729.9 236.4,743.3 236.4,746.5 236.4,753.9 236.4,753.4 236.4,755.8 236.4,763.3 236.4,772.5 236.4,776.5 236.4,783.2 236.4,787.0 236.4,791.9 236.4,794.6 236.4,798.1 236.4,806.5 236.4,814.4 236.4,817.3 236.4,827.1 236.4,827.5 236.4,832.9 236.4,835.2 236.4,845.9 236.4,847.4 236.4,858.0 236.4,864.8 236.4,866.9"/>
<polyline points="241.5,711.0 241.5,717.9 241.5,718.6 241.5,722.4 241.5,725.9 241.5,735.0 241.5,742.7 241.5,748.9 241.5,749.8 241.5,751.9 241.5,758.4 241.5,765.9 241.5,768.8 241.5,778.6 241.5,785.8 241.5,790.6 241.5,789.7 241.5,793.3 241.5,799.9 241.5,807.8 241.5,814.3 241.5,822.4 241.5,821.8 241.5,829.2 241.5,831.2 241.5,835.4 241.5,842.3 241.5,851.7 241.5,858.7 241.5,861.3 241.5,867.4"/>
<polyline points="246.5,706.8 246.5,713.8 246.5,713.9 246.5,722.1 246.5,727.4 246.5,735.3 246.5,740.9 246.5,747.8 246.5,752.9 246.5,751.5 246.5,758.7 246.5,765.0 246.5,771.7 246.5,777.3 246.5,783.0 246.5,785.4 246.5,788.6 246.5,795.0 246.5,797.3 246.5,804.9 246.5,816.9 246.5,817.1 246.5,820.3 246.5,824.5 246.5,833.2 246.5,834.7 246.5,843.1 246.5,853.9 246.5,859.2 246.5,856.7 246.5,862.1"/>
<polyline points="251.5,707.9 251.5,712.4 251.5,715.7 251.5,720.1 251.5,723.0 251.5,733.0 251.5,740.6 251.5,740.3 251.5,744.5 251.5,752.3 251.5,752.5 251.5,760.9 251.5,767.0 251.5,774.0 251.5,777.1 251.5,781.3 251.5,784.6 251.5,793.8 251.5,797.2 251.5,805.4 251.5,810.3 251.5,816.9 251.5,817.4 251.5,823.2 251.5,830.2 251.5,837.0 251.5,844.8 251.5,848.7 251.5,856.1 251.5,856.8 251.5,862.6"/>
<polyline points="256.5,702.8 256.5,706.1 256.5,709.8 256.5,713.3 256.5,725.9 256.5,727.4 256.5,735.6 256.5,739.0 256.5,741.7 256.5,744.6 256.5,753.3 256.5,760.0 256.5,763.4 256.5,774.9 256.5,775.3 256.5,778.6 256.5,786.7 256.5,788.5 256.5,795.0 256.5,800.4 256.5,810.0 256.5,809.7 256.5,816.1 256.5,820.4 256.5,823.4 256.5,836.1 256.5,838.5 256.5,844.8 256.5,850.7 256.5,850.5 256.5,857.9"/>
<polyline points="261.6,699.3 261.6,702.4 261.6,705.3 261.6,715.3 261.6,721.0 261.6,727.6 261.6,731.8 261.6,733.7 261.6,740.6 261.6,741.7 261.6,750.8 261.6,757.3 261.6,765.4 261.6,768.9 261.6,769.4 261.6,775.0 261.6,778.7 261.6,788.1 261.6,795.3 261.6,802.0 261.6,805.1 261.6,808.3 261.6,810.8 261.6,820.4 261.6,822.3 261.6,828.3 261.6,837.1 261.6,845.3 261.6,847.3 261.6,852.7 261.6,856.2"/>
<polyline points="266.6,693.4 266.6,699.2 266.6,704.1 266.6,710.0 266.6,716.3 266.6,724.3 266.6,728.7 266.6,732.0 266.6,735.3 266.6,741.3 266.6,747.5 266.6,757.7 266.6,760.7 266.6,766.5 266.6,767.8 266.6,776.0 266.6,780.8 266.6,788.5 266.6,790.8 266.6,795.8 266.6,801.9 266.6,807.2 266.6,808.0 266.6,813.6 266.6,821.8 266.6,830.9 266.6,836.6 266.6,840.2 266.6,844.2 266.6,847.3 266.6,851.3"/>
<polyline points="271.6,691.5 271.6,701.6 271.6,704.1 271.6,714.7 271.6,721.0 271.6,721.9 271.6,727.3 271.6,728.4 271.6,735.8 271.6,744.5 271.6,749.2 271.6,754.6 271.6,757.8 271.6,761.3 271.6,768.0 271.6,772.7 271.6,780.7 271.6,784.3 271.6,793.9 271.6,799.7 271.6,804.4 271.6,807.8 271.6,807.7 271.6,817.4 271.6,818.9 271.6,831.5 271.6,831.7 271.6,840.4 271.6,844.5 271.6,844.2 271.6,853.4"/>
<polyline points="276.7,692.5 276.7,701.0 276.7,708.4 276.7,710.8 276.7,717.6 276.7,721.4 276.7,725.7 276.7,733.6 276.7,734.9 276.7,740.8 276.7,749.7 276.7,752.9 276.7,762.1 276.7,760.9 276.7,766.1 276.7,775.7 276.7,782.2 276.7,785.2 276.7,790.4 276.7,800.0 276.7,801.9 276.7,802.8 276.7,811.4 276.7,813.4 276.7,823.0 276.7,832.2 276.7,834.8 276.7,836.9 276.7,841.4 276.7,844.8 276.7,854.9"/>
<polyline points="281.7,693.1 281.7,701.5 281.7,706.5 281.7,713.7 281.7,720.9 281.7,725.2 281.7,725.9 281.7,728.8 281.7,735.5 281.7,743.8 281.7,752.7 281.7,760.0 281.7,758.1 281.7,763.2 281.7,766.4 281.7,775.2 281.7,780.4 281.7,784.9 281.7,791.6 281.7,797.2 281.7,802.5 281.7,805.7 281.7,808.3 281.7,818.7 281.7,823.6 281.7,829.9 281.7,832.0 281.7,835.9 281.7,843.4 281.7,851.0 281.7,856.2"/>
<polyline points="286.7,697.3 286.7,702.4 286.7,708.0 286.7,714.2 286.7,725.0 286.7,723.4 286.7,727.0 286.7,731.1 286.7,739.3 286.7,748.4 286.7,751.2 286.7,756.6 286.7,761.1 286.7,763.0 286.7,771.3 286.7,779.3 286.7,783.3 286.7,788.4 286.7,797.4 286.7,797.4 286.7,799.6 286.7,808.8 286.7,812.6 286.7,819.3 286.7,827.3 286.7,834.1 286.7,837.4 286.7,837.5 286.7,841.9 286.7,850.4 286.7,860.0"/>
<polyline points="291.8,696.8 291.8,703.7 291.8,714.4 291.8,718.2 291.8,720.6 291.8,724.1 291.8,730.2 291.8,735.7 291.8,741.7 291.8,751.4 291.8,757.5 291.8,762.1 291.8,762.0 291.8,768.0 291.8,771.9 291.8,779.7 291.8,786.1 291.8,794.6 291.8,799.7 291.8,796.8 291.8,804.7 291.8,811.7 291.8,815.0 291.8,821.1 291.8,831.3 291.8,832.8 291.8,837.8 291.8,840.4 291.8,849.0 291.8,855.7 291.8,856.5"/>
<polyline points="296.8,697.9 296.8,707.5 296.8,713.8 296.8,721.4 296.8,721.9 296.8,727.5 296.8,728.3 296.8,735.3 296.8,742.0 296.8,748.0 296.8,758.1 296.8,763.5 296.8,765.8 296.8,770.1 296.8,776.6 296.8,783.9 296.8,787.4 296.8,790.8 296.8,797.4 296.8,797.5 296.8,802.0 296.8,813.5 296.8,817.1 296.8,825.3 296.8,832.5 296.8,830.8 296.8,838.8 296.8,841.1 296.8,846.5 296.8,851.5 296.8,860.2"/>
<polyline points="301.8,701.7 301.8,708.5 301.8,716.9 301.8,716.4 301.8,719.8 301.8,728.4 301.8,734.4 301.8,739.4 301.8,745.9 301.8,748.7 301.8,753.5 301.8,757.5 301.8,766.2 301.8,766.2 301.8,773.2 301.8,780.7 301.8,784.9 301.8,795.9 301.8,798.8 301.8,798.3 301.8,802.0 301.8,810.2 301.8,819.8 301.8,824.3 301.8,827.9 301.8,835.8 301.8,837.9 301.8,843.2 301.8,850.6 301.8,855.4 301.8,863.8"/>
<polyline points="306.9,702.3 306.9,710.0 306.9,712.4 306.9,721.0 306.9,719.7 306.9,727.0 306.9,733.6 306.9,734.6 306.9,746.3 306.9,747.4 306.9,752.1 306.9,755.3 306.9,764.1 306.9,767.6 306.9,776.8 306.9,778.4 306.9,784.8 306.9,790.4 306.9,794.9 306.9,799.6 306.9,801.9 306.9,811.1 306.9,817.1 306.9,826.1 306.9,829.8 306.9,834.2 306.9,833.8 306.9,840.5 306.9,850.1 306.9,852.3 306.9,862.1"/>
<polyline points="311.9,699.9 311.9,708.3 311.9,712.8 311.9,712.8 311.9,719.5 311.9,725.0 311.9,729.0 311.9,737.3 311.9,740.1 311.9,750.5 311.9,748.6 311.9,758.0 311.9,757.0 311.9,764.6 311.9,774.8 311.9,779.7 311.9,786.1 311.9,790.0 311.9,793.8 311.9,797.2 311.9,799.3 311.9,806.4 311.9,813.5 311.9,824.1 311.9,826.5 311.9,825.9 311.9,836.0 311.9,837.8 311.9,847.8 311.9,849.9 311.9,861.4"/>
<polyline points="316.9,695.5 316.9,704.8 316.9,710.7 316.9,715.1 316.9,713.2 316.9,720.3 316.9,729.2 316.9,734.7 316.9,737.8 316.9,746.9 316.9,748.0 316.9,754.6 316.9,759.4 316.9,762.2 316.9,769.7 316.9,779.3 316.9,784.6 316.9,787.9 316.9,788.2 316.9,794.1 316.9,802.2 316.9,809.8 316.9,813.3 316.9,817.1 316.9,819.9 316.9,825.1 316.9,832.8 316.9,840.4 316.9,843.1 316.9,851.4 316.9,853.8"/>
<polyline points="322.0,698.8 322.0,699.4 322.0,706.6 322.0,706.6 322.0,710.5 322.0,718.8 322.0,728.9 322.0,729.9 322.0,738.4 322.0,739.8 322.0,747.1 322.0,751.8 322.0,753.3 322.0,763.4 322.0,771.6 322.0,775.8 322.0,778.3 322.0,785.5 322.0,786.3 322.0,792.6 322.0,799.2 322.0,808.7 322.0,810.3 322.0,813.6 322.0,816.6 322.0,824.4 322.0,827.6 322.0,836.9 322.0,841.3 322.0,851.3 322.0,849.9"/>
<polyline points="327.0,691.9 327.0,699.9 327.0,703.3 327.0,706.7 327.0,711.4 327.0,721.1 327.0,722.0 327.0,733.5 327.0,738.7 327.0,742.8 327.0,745.3 327.0,746.3 327.0,757.9 327.0,764.6 327.0,767.1 327.0,775.3 327.0,780.0 327.0,779.7 327.0,784.6 327.0,791.4 327.0,797.4 327.0,807.8 327.0,807.6 327.0,812.1 327.0,820.1 327.0,824.4 327.0,828.4 327.0,835.5 327.0,843.4 327.0,849.2 327.0,850.9"/>
</g>
<path d="M171,733 L150,768 L152,785 L170,790 L190,783 L198,776 Z" fill="#ffffff" stroke="none"/>
<g stroke="#000" stroke-width="1" fill="none">
<line x1="171" y1="733" x2="163" y2="784"/>
<line x1="171" y1="733" x2="178" y2="786"/>
<line x1="171" y1="733" x2="193" y2="779"/>
<line x1="156" y1="762" x2="156" y2="782"/>
<line x1="161" y1="752" x2="161" y2="783"/>
<line x1="166" y1="742" x2="166" y2="784"/>
<line x1="171" y1="733" x2="171" y2="786"/>
<line x1="176" y1="742" x2="176" y2="784"/>
<line x1="181" y1="752" x2="181" y2="783"/>
<line x1="186" y1="762" x2="186" y2="782"/>
<line x1="191" y1="771" x2="191" y2="780"/>
<polyline points="152,785 160,770 171,765 183,769 195,778"/>
<polyline points="150,768 171,733 198,776" stroke-width="1.6"/>
</g>
<circle cx="171" cy="734" r="1.8" fill="#000"/>
<polyline points="77.0,744.2 84.0,741.8 93.3,736.0 100.4,730.2 109.7,727.8 121.4,725.5 128.4,723.2 135.4,730.2 144.7,729.0 158.7,724.3 172.7,722.0 186.7,720.8 196.0,718.5 203.0,724.3 214.7,727.8 226.4,731.3 240.4,739.5" fill="none" stroke="#0a0aff" stroke-width="2.3"/>
<polyline points="250.9,736.0 259.0,741.8 268.4,750.0 275.4,757.0 278.9,764.0 282.4,771.0 282.4,785.0 277.7,794.4 275.4,801.4 266.0,807.2 263.7,814.2 249.7,825.9" fill="none" stroke="#0a0aff" stroke-width="2.3"/>
<polyline points="247.4,826.6 224.0,828.2 217.0,831.7 210.0,836.4" fill="none" stroke="#0a0aff" stroke-width="2.3"/>
<polyline points="196.0,834.0 186.7,841.0" fill="none" stroke="#0a0aff" stroke-width="2.3"/>
<polyline points="147.0,832.9 140.0,830.5 126.0,829.4 112.0,832.9 100.4,829.4 95.7,822.4 88.7,820.0 79.3,817.7 70.0,806.0 65.3,796.7 60.7,787.4 58.3,773.3 60.7,761.7 65.3,750.0 70.0,747.7 79.3,743.0" fill="none" stroke="#0a0aff" stroke-width="2.3"/>
<polyline points="149.8,764.5 139.2,770.1 138.6,785.6 146.7,786.8 154.7,791.8 163.4,799.3 172.1,798.0 182.0,793.0 190.7,786.8 199.4,784.4 201.9,778.2 194.4,774.4 189.5,773.2 185.8,764.5" fill="none" stroke="#0a0aff" stroke-width="2.2"/>
<polyline points="151.6,764.5 151.0,785.0 158.5,786.8 169.6,789.3 177.1,785.6 188.9,781.9 188.9,777.5" fill="none" stroke="#ff0000" stroke-width="2.2"/>
<path d="M329,513 Q329,501 337,501 H676 Q684,501 684,509 V834 Q684,842 676,842 H337 Q329,842 329,834 Z" fill="#f0f0f0" stroke="#8c8c8c" stroke-width="1"/>
<path d="M329.5,532 V509 Q329.5,501.5 337,501.5 H676 Q683.5,501.5 683.5,509 V532 Z" fill="#f3f3f3"/>
<rect x="329.5" y="532" width="2.5" height="302" fill="#9a9a9a" />
<rect x="332" y="533" width="262" height="301" fill="#ffffff" />
<g transform="translate(336,507) scale(1.0)"><rect x="0" y="0" width="20" height="19.5" rx="1.5" fill="#0010e0"/><path d="M8,0.5 H19.5 V9 H8Z M7,12 H17 V19.5 H7Z M0,14 H4 V19 H1Z" fill="#00008a"/><path d="M4,19 H13 V20 H4Z" fill="#000000"/><rect x="5" y="0" width="2.4" height="18" fill="#ffff00"/><rect x="0" y="9.6" width="20" height="1.7" fill="#ffff00"/><path d="M6.2,5 Q7,9.4 11.5,10.4 Q7,11.4 6.2,16 Q5.4,11.4 1,10.4 Q5.4,9.4 6.2,5Z" fill="#ffff00"/><circle cx="3" cy="4" r="0.7" fill="#8090ff"/><circle cx="11" cy="3" r="0.7" fill="#8090ff"/><circle cx="15" cy="3.5" r="0.7" fill="#8090ff"/><circle cx="14" cy="16.5" r="0.7" fill="#8090ff"/><circle cx="18" cy="17" r="0.7" fill="#8090ff"/></g>
<text x="363" y="522" font-family="Liberation Sans" font-size="15" fill="#8a8a8a" textLength="109" lengthAdjust="spacingAndGlyphs" >Operation guide</text>
<line x1="532" y1="516.5" x2="542" y2="516.5" stroke="#8a8a8a" stroke-width="1"/>
<rect x="589.5" y="510.5" width="11" height="11" rx="1" fill="none" stroke="#8a8a8a" stroke-width="1"/>
<path d="M648,510 L660,522 M660,510 L648,522" stroke="#8a8a8a" stroke-width="1.1"/>
<line x1="369" y1="568" x2="582" y2="568" stroke="#1ee61e" stroke-width="2" />
<line x1="369" y1="808.5" x2="582" y2="808.5" stroke="#808080" stroke-width="1.2" />
<polyline points="369.3,662.2 372.5,662.2 375.3,664.4 379.6,666.8 383.0,673.0 386.3,676.8 388.7,682.6 393.5,688.3 397.8,697.9 402.6,703.6 406.0,708.4 410.8,712.3 414.6,715.1 420.8,718.5 424.2,718.5 429.0,720.9 575,720.9" fill="none" stroke="#ff2020" stroke-width="1.2"/>
<circle cx="369.3" cy="670.4" r="2" fill="none" stroke="#2a2aff" stroke-width="1.2"/>
<circle cx="388.3" cy="676.3" r="2" fill="none" stroke="#2a2aff" stroke-width="1.2"/>
<circle cx="388.3" cy="681.6" r="2" fill="none" stroke="#2a2aff" stroke-width="1.2"/>
<circle cx="388.3" cy="686.9" r="2" fill="none" stroke="#2a2aff" stroke-width="1.2"/>
<circle cx="388.3" cy="692.8" r="2" fill="none" stroke="#2a2aff" stroke-width="1.2"/>
<circle cx="395.6" cy="685.4" r="2" fill="none" stroke="#2a2aff" stroke-width="1.2"/>
<circle cx="395.6" cy="686.9" r="2" fill="none" stroke="#2a2aff" stroke-width="1.2"/>
<circle cx="395.6" cy="698.9" r="2" fill="none" stroke="#2a2aff" stroke-width="1.2"/>
<circle cx="395.6" cy="704.1" r="2" fill="none" stroke="#2a2aff" stroke-width="1.2"/>
<circle cx="406.9" cy="697.9" r="2" fill="none" stroke="#2a2aff" stroke-width="1.2"/>
<circle cx="406.9" cy="705.6" r="2" fill="none" stroke="#2a2aff" stroke-width="1.2"/>
<circle cx="406.9" cy="713.7" r="2" fill="none" stroke="#2a2aff" stroke-width="1.2"/>
<circle cx="411.7" cy="699.8" r="2" fill="none" stroke="#2a2aff" stroke-width="1.2"/>
<circle cx="411.7" cy="702.7" r="2" fill="none" stroke="#2a2aff" stroke-width="1.2"/>
<circle cx="411.7" cy="706.5" r="2" fill="none" stroke="#2a2aff" stroke-width="1.2"/>
<circle cx="411.7" cy="709.9" r="2" fill="none" stroke="#2a2aff" stroke-width="1.2"/>
<circle cx="411.7" cy="713.2" r="2" fill="none" stroke="#2a2aff" stroke-width="1.2"/>
<circle cx="411.7" cy="717.0" r="2" fill="none" stroke="#2a2aff" stroke-width="1.2"/>
<circle cx="421.8" cy="709.9" r="2" fill="none" stroke="#2a2aff" stroke-width="1.2"/>
<circle cx="421.8" cy="712.7" r="2" fill="none" stroke="#2a2aff" stroke-width="1.2"/>
<circle cx="426.1" cy="720.9" r="2" fill="none" stroke="#2a2aff" stroke-width="1.2"/>
<circle cx="428.0" cy="712.7" r="2" fill="none" stroke="#2a2aff" stroke-width="1.2"/>
<circle cx="428.0" cy="718.0" r="2" fill="none" stroke="#2a2aff" stroke-width="1.2"/>
<circle cx="428.0" cy="721.4" r="2" fill="none" stroke="#2a2aff" stroke-width="1.2"/>
<circle cx="428.0" cy="728.1" r="2" fill="none" stroke="#2a2aff" stroke-width="1.2"/>
<circle cx="436.6" cy="711.3" r="2" fill="none" stroke="#2a2aff" stroke-width="1.2"/>
<circle cx="436.6" cy="715.1" r="2" fill="none" stroke="#2a2aff" stroke-width="1.2"/>
<circle cx="436.6" cy="721.4" r="2" fill="none" stroke="#2a2aff" stroke-width="1.2"/>
<circle cx="436.6" cy="724.2" r="2" fill="none" stroke="#2a2aff" stroke-width="1.2"/>
<circle cx="444.3" cy="722.8" r="2" fill="none" stroke="#2a2aff" stroke-width="1.2"/>
<circle cx="444.3" cy="725.7" r="2" fill="none" stroke="#2a2aff" stroke-width="1.2"/>
<circle cx="425.1" cy="717.0" r="2" fill="none" stroke="#2a2aff" stroke-width="1.2"/>
<rect x="598.5" y="773.5" width="84" height="63" fill="none" stroke="#ffffff"/>
<rect x="597.5" y="772.5" width="84" height="63" fill="none" stroke="#a0a0a0"/>
<rect x="605" y="770" width="56" height="6" fill="#f0f0f0" />
<text x="606" y="779" font-family="Liberation Sans" font-size="16" fill="#000" textLength="54" lengthAdjust="spacingAndGlyphs" >Control</text>
<circle cx="615.5" cy="795.4" r="6.0" fill="#fff" stroke="#d4d4d4" stroke-width="1"/>
<path d="M611.2545,799.6455 A6.0,6.0 0 0 1 619.7455,791.1545" stroke="#8a8a8a" stroke-width="1.1" fill="none"/>
<circle cx="615.5" cy="795.4" r="2.2" fill="#000"/>
<text x="630" y="801" font-family="Liberation Sans" font-size="16" fill="#000" textLength="36" lengthAdjust="spacingAndGlyphs" >Hide</text>
<circle cx="615.5" cy="819" r="6.0" fill="#fff" stroke="#d4d4d4" stroke-width="1"/>
<path d="M611.2545,823.2455 A6.0,6.0 0 0 1 619.7455,814.7545" stroke="#8a8a8a" stroke-width="1.1" fill="none"/>
<text x="630" y="825" font-family="Liberation Sans" font-size="16" fill="#000" textLength="42" lengthAdjust="spacingAndGlyphs" >Show</text>
<path d="M931,887 V13 Q931,5 939,5 H1864 V887 Z" fill="#f0f0f0"/>
<path d="M931,887 V13 Q931,5 939,5 H1866" fill="none" stroke="#8c8c8c" stroke-width="1"/>
<path d="M931.5,38 V13 Q931.5,5.5 939,5.5 H1864 V38 Z" fill="#f3f3f3"/>
<g transform="translate(935,10) scale(1.0)"><rect x="0" y="0" width="20" height="19.5" rx="1.5" fill="#0010e0"/><path d="M8,0.5 H19.5 V9 H8Z M7,12 H17 V19.5 H7Z M0,14 H4 V19 H1Z" fill="#00008a"/><path d="M4,19 H13 V20 H4Z" fill="#000000"/><rect x="5" y="0" width="2.4" height="18" fill="#ffff00"/><rect x="0" y="9.6" width="20" height="1.7" fill="#ffff00"/><path d="M6.2,5 Q7,9.4 11.5,10.4 Q7,11.4 6.2,16 Q5.4,11.4 1,10.4 Q5.4,9.4 6.2,5Z" fill="#ffff00"/><circle cx="3" cy="4" r="0.7" fill="#8090ff"/><circle cx="11" cy="3" r="0.7" fill="#8090ff"/><circle cx="15" cy="3.5" r="0.7" fill="#8090ff"/><circle cx="14" cy="16.5" r="0.7" fill="#8090ff"/><circle cx="18" cy="17" r="0.7" fill="#8090ff"/></g>
<text x="962" y="27" font-family="Liberation Sans" font-size="15" fill="#000" textLength="40" lengthAdjust="spacingAndGlyphs" >Graph</text>
<line x1="1721" y1="21.5" x2="1731" y2="21.5" stroke="#000" stroke-width="1"/>
<rect x="1778.5" y="15.5" width="11" height="11" rx="1" fill="none" stroke="#000" stroke-width="1"/>
<path d="M1837,15 L1849,27 M1849,15 L1837,27" stroke="#000" stroke-width="1.1"/>
<rect x="941" y="39" width="923" height="532" fill="#ffffff" />
<line x1="1004" y1="141.6" x2="1853" y2="141.6" stroke="#22e8f0" stroke-width="2" />
<line x1="1004" y1="202.4" x2="1853" y2="202.4" stroke="#22e8f0" stroke-width="2" />
<line x1="1004" y1="263.3" x2="1853" y2="263.3" stroke="#22e8f0" stroke-width="2" />
<line x1="1004" y1="323.6" x2="1853" y2="323.6" stroke="#22e8f0" stroke-width="2" />
<line x1="1004" y1="385.1" x2="1853" y2="385.1" stroke="#22e8f0" stroke-width="2" />
<line x1="1004" y1="507.6" x2="1853" y2="507.6" stroke="#22e8f0" stroke-width="2" />
<line x1="1004" y1="446" x2="1853" y2="446" stroke="#000" stroke-width="1.6" />
<line x1="1004.5" y1="64" x2="1004.5" y2="521" stroke="#000" stroke-width="1.6" />
<line x1="1004" y1="521" x2="1853" y2="521" stroke="#000" stroke-width="1.6" />
<line x1="1074" y1="521" x2="1074" y2="528" stroke="#000" stroke-width="1.6" />
<line x1="1174" y1="521" x2="1174" y2="528" stroke="#000" stroke-width="1.6" />
<line x1="1274" y1="521" x2="1274" y2="528" stroke="#000" stroke-width="1.6" />
<line x1="1374" y1="521" x2="1374" y2="528" stroke="#000" stroke-width="1.6" />
<line x1="1474" y1="521" x2="1474" y2="528" stroke="#000" stroke-width="1.6" />
<line x1="1574" y1="521" x2="1574" y2="528" stroke="#000" stroke-width="1.6" />
<line x1="1674" y1="521" x2="1674" y2="528" stroke="#000" stroke-width="1.6" />
<line x1="1774" y1="521" x2="1774" y2="528" stroke="#000" stroke-width="1.6" />
<text x="993" y="145.5" font-family="Liberation Sans" font-size="15" fill="#000" text-anchor="end" textLength="21.6" lengthAdjust="spacingAndGlyphs" >500</text>
<text x="993" y="206.5" font-family="Liberation Sans" font-size="15" fill="#000" text-anchor="end" textLength="21.6" lengthAdjust="spacingAndGlyphs" >400</text>
<text x="993" y="267.5" font-family="Liberation Sans" font-size="15" fill="#000" text-anchor="end" textLength="21.6" lengthAdjust="spacingAndGlyphs" >300</text>
<text x="993" y="327.5" font-family="Liberation Sans" font-size="15" fill="#000" text-anchor="end" textLength="21.6" lengthAdjust="spacingAndGlyphs" >200</text>
<text x="993" y="389" font-family="Liberation Sans" font-size="15" fill="#000" text-anchor="end" textLength="21.6" lengthAdjust="spacingAndGlyphs" >100</text>
<text x="1000.5" y="450" font-family="Liberation Sans" font-size="15" fill="#000" text-anchor="end" textLength="7.2" lengthAdjust="spacingAndGlyphs" >0</text>
<text x="983" y="511.5" font-family="Liberation Sans" font-size="15" fill="#000" text-anchor="end" textLength="28.8" lengthAdjust="spacingAndGlyphs" >-100</text>
<text x="1275.3" y="540" font-family="Liberation Sans" font-size="15" fill="#000" text-anchor="middle" textLength="19" lengthAdjust="spacingAndGlyphs" >180</text>
<text x="1575.3" y="540" font-family="Liberation Sans" font-size="15" fill="#000" text-anchor="middle" textLength="19" lengthAdjust="spacingAndGlyphs" >210</text>
<polyline points="1004,119.4 1014,124.1 1024,138.0 1034,113.1 1044,123.2 1054,195.5 1064,199.3 1074,111.8 1084,155.4 1094,97.9 1104,139.3 1114,204.3 1124,165.5 1134,180.3 1144,154.1 1154,102.0 1164,193.9 1174,145.6 1184,128.2 1194,233.3 1204,108.0 1214,108.0 1224,109.3 1234,184.1 1244,129.2 1254,204.3 1264,157.6 1274,177.5 1284,179.7 1294,79.0 1304,184.7 1314,124.1 1324,83.1 1334,104.2 1344,97.9 1354,76.8 1364,144.3 1374,227.0 1384,210.3 1394,209.4 1404,113.1 1414,94.1 1424,184.1 1434,225.8 1444,119.4 1454,123.2 1464,123.2 1474,175.6 1484,213.1 1494,115.3 1504,160.4 1514,155.4 1524,219.5 1534,154.1 1544,175.6 1554,139.3 1564,64.5 1574,145.6 1584,189.5 1594,240.9 1604,118.1 1614,156.6 1624,168.0 1634,143.1 1644,216.9 1654,170.5 1664,125.7 1674,155.4 1684,220.4 1694,201.8 1704,73.0 1714,154.1 1724,239.3 1734,171.8 1744,162.3 1754,186.9 1764,125.7 1774,118.1 1784,109.3 1794,80.6 1804,125.7 1814,155.4 1824,152.9 1834,151.9 1844,108.0" fill="none" stroke="#ffff00" stroke-width="1.2"/>
<path d="M1004,115.4 L1008,119.4 L1004,123.4 L1000,119.4Z" fill="#ffa500"/>
<path d="M1014,120.1 L1018,124.1 L1014,128.1 L1010,124.1Z" fill="#ffa500"/>
<path d="M1024,134.0 L1028,138.0 L1024,142.0 L1020,138.0Z" fill="#ffa500"/>
<path d="M1034,109.1 L1038,113.1 L1034,117.1 L1030,113.1Z" fill="#ffa500"/>
<path d="M1044,119.2 L1048,123.2 L1044,127.2 L1040,123.2Z" fill="#ffa500"/>
<path d="M1054,191.5 L1058,195.5 L1054,199.5 L1050,195.5Z" fill="#ffa500"/>
<path d="M1064,195.3 L1068,199.3 L1064,203.3 L1060,199.3Z" fill="#ffa500"/>
<path d="M1074,107.8 L1078,111.8 L1074,115.8 L1070,111.8Z" fill="#ffa500"/>
<path d="M1084,151.4 L1088,155.4 L1084,159.4 L1080,155.4Z" fill="#ffa500"/>
<path d="M1094,93.9 L1098,97.9 L1094,101.9 L1090,97.9Z" fill="#ffa500"/>
<path d="M1104,135.3 L1108,139.3 L1104,143.3 L1100,139.3Z" fill="#ffa500"/>
<path d="M1114,200.3 L1118,204.3 L1114,208.3 L1110,204.3Z" fill="#ffa500"/>
<path d="M1124,161.5 L1128,165.5 L1124,169.5 L1120,165.5Z" fill="#ffa500"/>
<path d="M1134,176.3 L1138,180.3 L1134,184.3 L1130,180.3Z" fill="#ffa500"/>
<path d="M1144,150.1 L1148,154.1 L1144,158.1 L1140,154.1Z" fill="#ffa500"/>
<path d="M1154,98.0 L1158,102.0 L1154,106.0 L1150,102.0Z" fill="#ffa500"/>
<path d="M1164,189.9 L1168,193.9 L1164,197.9 L1160,193.9Z" fill="#ffa500"/>
<path d="M1174,141.6 L1178,145.6 L1174,149.6 L1170,145.6Z" fill="#ffa500"/>
<path d="M1184,124.2 L1188,128.2 L1184,132.2 L1180,128.2Z" fill="#ffa500"/>
<path d="M1194,229.3 L1198,233.3 L1194,237.3 L1190,233.3Z" fill="#ffa500"/>
<path d="M1204,104.0 L1208,108.0 L1204,112.0 L1200,108.0Z" fill="#ffa500"/>
<path d="M1214,104.0 L1218,108.0 L1214,112.0 L1210,108.0Z" fill="#ffa500"/>
<path d="M1224,105.3 L1228,109.3 L1224,113.3 L1220,109.3Z" fill="#ffa500"/>
<path d="M1234,180.1 L1238,184.1 L1234,188.1 L1230,184.1Z" fill="#ffa500"/>
<path d="M1244,125.2 L1248,129.2 L1244,133.2 L1240,129.2Z" fill="#ffa500"/>
<path d="M1254,200.3 L1258,204.3 L1254,208.3 L1250,204.3Z" fill="#ffa500"/>
<path d="M1264,153.6 L1268,157.6 L1264,161.6 L1260,157.6Z" fill="#ffa500"/>
<path d="M1274,173.5 L1278,177.5 L1274,181.5 L1270,177.5Z" fill="#ffa500"/>
<path d="M1284,175.7 L1288,179.7 L1284,183.7 L1280,179.7Z" fill="#ffa500"/>
<path d="M1294,75.0 L1298,79.0 L1294,83.0 L1290,79.0Z" fill="#ffa500"/>
<path d="M1304,180.7 L1308,184.7 L1304,188.7 L1300,184.7Z" fill="#ffa500"/>
<path d="M1314,120.1 L1318,124.1 L1314,128.1 L1310,124.1Z" fill="#ffa500"/>
<path d="M1324,79.1 L1328,83.1 L1324,87.1 L1320,83.1Z" fill="#ffa500"/>
<path d="M1334,100.2 L1338,104.2 L1334,108.2 L1330,104.2Z" fill="#ffa500"/>
<path d="M1344,93.9 L1348,97.9 L1344,101.9 L1340,97.9Z" fill="#ffa500"/>
<path d="M1354,72.8 L1358,76.8 L1354,80.8 L1350,76.8Z" fill="#ffa500"/>
<path d="M1364,140.3 L1368,144.3 L1364,148.3 L1360,144.3Z" fill="#ffa500"/>
<path d="M1374,223.0 L1378,227.0 L1374,231.0 L1370,227.0Z" fill="#ffa500"/>
<path d="M1384,206.3 L1388,210.3 L1384,214.3 L1380,210.3Z" fill="#ff0000"/>
<path d="M1394,205.4 L1398,209.4 L1394,213.4 L1390,209.4Z" fill="#ffa500"/>
<path d="M1404,109.1 L1408,113.1 L1404,117.1 L1400,113.1Z" fill="#ffa500"/>
<path d="M1414,90.1 L1418,94.1 L1414,98.1 L1410,94.1Z" fill="#ffa500"/>
<path d="M1424,180.1 L1428,184.1 L1424,188.1 L1420,184.1Z" fill="#ffa500"/>
<path d="M1434,221.8 L1438,225.8 L1434,229.8 L1430,225.8Z" fill="#ffa500"/>
<path d="M1444,115.4 L1448,119.4 L1444,123.4 L1440,119.4Z" fill="#ffa500"/>
<path d="M1454,119.2 L1458,123.2 L1454,127.2 L1450,123.2Z" fill="#ffa500"/>
<path d="M1464,119.2 L1468,123.2 L1464,127.2 L1460,123.2Z" fill="#ffa500"/>
<path d="M1474,171.6 L1478,175.6 L1474,179.6 L1470,175.6Z" fill="#ffa500"/>
<path d="M1484,209.1 L1488,213.1 L1484,217.1 L1480,213.1Z" fill="#ffa500"/>
<path d="M1494,111.3 L1498,115.3 L1494,119.3 L1490,115.3Z" fill="#ffa500"/>
<path d="M1504,156.4 L1508,160.4 L1504,164.4 L1500,160.4Z" fill="#ffa500"/>
<path d="M1514,151.4 L1518,155.4 L1514,159.4 L1510,155.4Z" fill="#ffa500"/>
<path d="M1524,215.5 L1528,219.5 L1524,223.5 L1520,219.5Z" fill="#ffa500"/>
<path d="M1534,150.1 L1538,154.1 L1534,158.1 L1530,154.1Z" fill="#ffa500"/>
<path d="M1544,171.6 L1548,175.6 L1544,179.6 L1540,175.6Z" fill="#ffa500"/>
<path d="M1554,135.3 L1558,139.3 L1554,143.3 L1550,139.3Z" fill="#ffa500"/>
<path d="M1564,60.5 L1568,64.5 L1564,68.5 L1560,64.5Z" fill="#ffa500"/>
<path d="M1574,141.6 L1578,145.6 L1574,149.6 L1570,145.6Z" fill="#ffa500"/>
<path d="M1584,185.5 L1588,189.5 L1584,193.5 L1580,189.5Z" fill="#ffa500"/>
<path d="M1594,236.9 L1598,240.9 L1594,244.9 L1590,240.9Z" fill="#ffa500"/>
<path d="M1604,114.1 L1608,118.1 L1604,122.1 L1600,118.1Z" fill="#ffa500"/>
<path d="M1614,152.6 L1618,156.6 L1614,160.6 L1610,156.6Z" fill="#ffa500"/>
<path d="M1624,164.0 L1628,168.0 L1624,172.0 L1620,168.0Z" fill="#ffa500"/>
<path d="M1634,139.1 L1638,143.1 L1634,147.1 L1630,143.1Z" fill="#ffa500"/>
<path d="M1644,212.9 L1648,216.9 L1644,220.9 L1640,216.9Z" fill="#ffa500"/>
<path d="M1654,166.5 L1658,170.5 L1654,174.5 L1650,170.5Z" fill="#ffa500"/>
<path d="M1664,121.7 L1668,125.7 L1664,129.7 L1660,125.7Z" fill="#ffa500"/>
<path d="M1674,151.4 L1678,155.4 L1674,159.4 L1670,155.4Z" fill="#ffa500"/>
<path d="M1684,216.4 L1688,220.4 L1684,224.4 L1680,220.4Z" fill="#ffa500"/>
<path d="M1694,197.8 L1698,201.8 L1694,205.8 L1690,201.8Z" fill="#ffa500"/>
<path d="M1704,69.0 L1708,73.0 L1704,77.0 L1700,73.0Z" fill="#ffa500"/>
<path d="M1714,150.1 L1718,154.1 L1714,158.1 L1710,154.1Z" fill="#ffa500"/>
<path d="M1724,235.3 L1728,239.3 L1724,243.3 L1720,239.3Z" fill="#ffa500"/>
<path d="M1734,167.8 L1738,171.8 L1734,175.8 L1730,171.8Z" fill="#ffa500"/>
<path d="M1744,158.3 L1748,162.3 L1744,166.3 L1740,162.3Z" fill="#ffa500"/>
<path d="M1754,182.9 L1758,186.9 L1754,190.9 L1750,186.9Z" fill="#ffa500"/>
<path d="M1764,121.7 L1768,125.7 L1764,129.7 L1760,125.7Z" fill="#ffa500"/>
<path d="M1774,114.1 L1778,118.1 L1774,122.1 L1770,118.1Z" fill="#ffa500"/>
<path d="M1784,105.3 L1788,109.3 L1784,113.3 L1780,109.3Z" fill="#ffa500"/>
<path d="M1794,76.6 L1798,80.6 L1794,84.6 L1790,80.6Z" fill="#ffa500"/>
<path d="M1804,121.7 L1808,125.7 L1804,129.7 L1800,125.7Z" fill="#ffa500"/>
<path d="M1814,151.4 L1818,155.4 L1814,159.4 L1810,155.4Z" fill="#ffa500"/>
<path d="M1824,148.9 L1828,152.9 L1824,156.9 L1820,152.9Z" fill="#ffa500"/>
<path d="M1834,147.9 L1838,151.9 L1834,155.9 L1830,151.9Z" fill="#ffa500"/>
<path d="M1844,104.0 L1848,108.0 L1844,112.0 L1840,108.0Z" fill="#ffa500"/>
<polyline points="1004,168.0 1014,209.4 1024,181.9 1034,188.2 1044,191.7 1054,137.1 1064,184.4 1074,214.7 1084,178.1 1094,143.1 1104,179.4 1114,192.9 1124,198.0 1134,168.0 1144,154.4 1154,163.3 1164,206.8 1174,218.2 1184,138.0 1194,183.2 1204,129.2 1214,223.2 1224,248.2 1234,204.3 1244,220.4 1254,199.3 1264,150.3 1274,181.6 1284,181.9 1294,204.3 1304,192.9 1314,144.3 1324,133.0 1334,220.4 1344,201.8 1354,149.1 1364,200.5 1374,189.5 1384,184.1 1394,326.5 1404,299.0 1414,250.7 1424,131.7 1434,214.4 1444,199.3 1454,194.2 1464,150.3 1474,151.6 1484,188.2 1494,168.0 1504,248.2 1514,206.8 1524,183.2 1534,184.4 1544,123.2 1554,154.1 1564,160.4 1574,185.4 1584,214.4 1594,160.4 1604,192.9 1614,130.4 1624,197.0 1634,168.0 1644,180.6 1654,130.4 1664,188.2 1674,234.3 1684,189.5 1694,157.9 1704,173.1 1714,179.4 1724,171.8 1734,189.5 1744,159.2 1754,233.0 1764,216.9 1774,151.9 1784,71.7 1794,216.9 1804,97.9 1814,204.3 1824,127.0 1834,190.7 1844,121.9" fill="none" stroke="#9a9aff" stroke-width="1.2"/>
<path d="M1004,164.0 L1008,168.0 L1004,172.0 L1000,168.0Z" fill="#0000ff"/>
<path d="M1014,205.4 L1018,209.4 L1014,213.4 L1010,209.4Z" fill="#0000ff"/>
<path d="M1024,177.9 L1028,181.9 L1024,185.9 L1020,181.9Z" fill="#0000ff"/>
<path d="M1034,184.2 L1038,188.2 L1034,192.2 L1030,188.2Z" fill="#0000ff"/>
<path d="M1044,187.7 L1048,191.7 L1044,195.7 L1040,191.7Z" fill="#0000ff"/>
<path d="M1054,133.1 L1058,137.1 L1054,141.1 L1050,137.1Z" fill="#0000ff"/>
<path d="M1064,180.4 L1068,184.4 L1064,188.4 L1060,184.4Z" fill="#0000ff"/>
<path d="M1074,210.7 L1078,214.7 L1074,218.7 L1070,214.7Z" fill="#0000ff"/>
<path d="M1084,174.1 L1088,178.1 L1084,182.1 L1080,178.1Z" fill="#0000ff"/>
<path d="M1094,139.1 L1098,143.1 L1094,147.1 L1090,143.1Z" fill="#0000ff"/>
<path d="M1104,175.4 L1108,179.4 L1104,183.4 L1100,179.4Z" fill="#0000ff"/>
<path d="M1114,188.9 L1118,192.9 L1114,196.9 L1110,192.9Z" fill="#0000ff"/>
<path d="M1124,194.0 L1128,198.0 L1124,202.0 L1120,198.0Z" fill="#0000ff"/>
<path d="M1134,164.0 L1138,168.0 L1134,172.0 L1130,168.0Z" fill="#0000ff"/>
<path d="M1144,150.4 L1148,154.4 L1144,158.4 L1140,154.4Z" fill="#0000ff"/>
<path d="M1154,159.3 L1158,163.3 L1154,167.3 L1150,163.3Z" fill="#0000ff"/>
<path d="M1164,202.8 L1168,206.8 L1164,210.8 L1160,206.8Z" fill="#0000ff"/>
<path d="M1174,214.2 L1178,218.2 L1174,222.2 L1170,218.2Z" fill="#0000ff"/>
<path d="M1184,134.0 L1188,138.0 L1184,142.0 L1180,138.0Z" fill="#0000ff"/>
<path d="M1194,179.2 L1198,183.2 L1194,187.2 L1190,183.2Z" fill="#0000ff"/>
<path d="M1204,125.2 L1208,129.2 L1204,133.2 L1200,129.2Z" fill="#0000ff"/>
<path d="M1214,219.2 L1218,223.2 L1214,227.2 L1210,223.2Z" fill="#0000ff"/>
<path d="M1224,244.2 L1228,248.2 L1224,252.2 L1220,248.2Z" fill="#0000ff"/>
<path d="M1234,200.3 L1238,204.3 L1234,208.3 L1230,204.3Z" fill="#0000ff"/>
<path d="M1244,216.4 L1248,220.4 L1244,224.4 L1240,220.4Z" fill="#0000ff"/>
<path d="M1254,195.3 L1258,199.3 L1254,203.3 L1250,199.3Z" fill="#0000ff"/>
<path d="M1264,146.3 L1268,150.3 L1264,154.3 L1260,150.3Z" fill="#0000ff"/>
<path d="M1274,177.6 L1278,181.6 L1274,185.6 L1270,181.6Z" fill="#0000ff"/>
<path d="M1284,177.9 L1288,181.9 L1284,185.9 L1280,181.9Z" fill="#0000ff"/>
<path d="M1294,200.3 L1298,204.3 L1294,208.3 L1290,204.3Z" fill="#0000ff"/>
<path d="M1304,188.9 L1308,192.9 L1304,196.9 L1300,192.9Z" fill="#0000ff"/>
<path d="M1314,140.3 L1318,144.3 L1314,148.3 L1310,144.3Z" fill="#0000ff"/>
<path d="M1324,129.0 L1328,133.0 L1324,137.0 L1320,133.0Z" fill="#0000ff"/>
<path d="M1334,216.4 L1338,220.4 L1334,224.4 L1330,220.4Z" fill="#0000ff"/>
<path d="M1344,197.8 L1348,201.8 L1344,205.8 L1340,201.8Z" fill="#0000ff"/>
<path d="M1354,145.1 L1358,149.1 L1354,153.1 L1350,149.1Z" fill="#0000ff"/>
<path d="M1364,196.5 L1368,200.5 L1364,204.5 L1360,200.5Z" fill="#0000ff"/>
<path d="M1374,185.5 L1378,189.5 L1374,193.5 L1370,189.5Z" fill="#0000ff"/>
<path d="M1384,180.1 L1388,184.1 L1384,188.1 L1380,184.1Z" fill="#ff0000"/>
<path d="M1394,322.5 L1398,326.5 L1394,330.5 L1390,326.5Z" fill="#0000ff"/>
<path d="M1404,295.0 L1408,299.0 L1404,303.0 L1400,299.0Z" fill="#0000ff"/>
<path d="M1414,246.7 L1418,250.7 L1414,254.7 L1410,250.7Z" fill="#0000ff"/>
<path d="M1424,127.7 L1428,131.7 L1424,135.7 L1420,131.7Z" fill="#0000ff"/>
<path d="M1434,210.4 L1438,214.4 L1434,218.4 L1430,214.4Z" fill="#0000ff"/>
<path d="M1444,195.3 L1448,199.3 L1444,203.3 L1440,199.3Z" fill="#0000ff"/>
<path d="M1454,190.2 L1458,194.2 L1454,198.2 L1450,194.2Z" fill="#0000ff"/>
<path d="M1464,146.3 L1468,150.3 L1464,154.3 L1460,150.3Z" fill="#0000ff"/>
<path d="M1474,147.6 L1478,151.6 L1474,155.6 L1470,151.6Z" fill="#0000ff"/>
<path d="M1484,184.2 L1488,188.2 L1484,192.2 L1480,188.2Z" fill="#0000ff"/>
<path d="M1494,164.0 L1498,168.0 L1494,172.0 L1490,168.0Z" fill="#0000ff"/>
<path d="M1504,244.2 L1508,248.2 L1504,252.2 L1500,248.2Z" fill="#0000ff"/>
<path d="M1514,202.8 L1518,206.8 L1514,210.8 L1510,206.8Z" fill="#0000ff"/>
<path d="M1524,179.2 L1528,183.2 L1524,187.2 L1520,183.2Z" fill="#0000ff"/>
<path d="M1534,180.4 L1538,184.4 L1534,188.4 L1530,184.4Z" fill="#0000ff"/>
<path d="M1544,119.2 L1548,123.2 L1544,127.2 L1540,123.2Z" fill="#0000ff"/>
<path d="M1554,150.1 L1558,154.1 L1554,158.1 L1550,154.1Z" fill="#0000ff"/>
<path d="M1564,156.4 L1568,160.4 L1564,164.4 L1560,160.4Z" fill="#0000ff"/>
<path d="M1574,181.4 L1578,185.4 L1574,189.4 L1570,185.4Z" fill="#0000ff"/>
<path d="M1584,210.4 L1588,214.4 L1584,218.4 L1580,214.4Z" fill="#0000ff"/>
<path d="M1594,156.4 L1598,160.4 L1594,164.4 L1590,160.4Z" fill="#0000ff"/>
<path d="M1604,188.9 L1608,192.9 L1604,196.9 L1600,192.9Z" fill="#0000ff"/>
<path d="M1614,126.4 L1618,130.4 L1614,134.4 L1610,130.4Z" fill="#0000ff"/>
<path d="M1624,193.0 L1628,197.0 L1624,201.0 L1620,197.0Z" fill="#0000ff"/>
<path d="M1634,164.0 L1638,168.0 L1634,172.0 L1630,168.0Z" fill="#0000ff"/>
<path d="M1644,176.6 L1648,180.6 L1644,184.6 L1640,180.6Z" fill="#0000ff"/>
<path d="M1654,126.4 L1658,130.4 L1654,134.4 L1650,130.4Z" fill="#0000ff"/>
<path d="M1664,184.2 L1668,188.2 L1664,192.2 L1660,188.2Z" fill="#0000ff"/>
<path d="M1674,230.3 L1678,234.3 L1674,238.3 L1670,234.3Z" fill="#0000ff"/>
<path d="M1684,185.5 L1688,189.5 L1684,193.5 L1680,189.5Z" fill="#0000ff"/>
<path d="M1694,153.9 L1698,157.9 L1694,161.9 L1690,157.9Z" fill="#0000ff"/>
<path d="M1704,169.1 L1708,173.1 L1704,177.1 L1700,173.1Z" fill="#0000ff"/>
<path d="M1714,175.4 L1718,179.4 L1714,183.4 L1710,179.4Z" fill="#0000ff"/>
<path d="M1724,167.8 L1728,171.8 L1724,175.8 L1720,171.8Z" fill="#0000ff"/>
<path d="M1734,185.5 L1738,189.5 L1734,193.5 L1730,189.5Z" fill="#0000ff"/>
<path d="M1744,155.2 L1748,159.2 L1744,163.2 L1740,159.2Z" fill="#0000ff"/>
<path d="M1754,229.0 L1758,233.0 L1754,237.0 L1750,233.0Z" fill="#0000ff"/>
<path d="M1764,212.9 L1768,216.9 L1764,220.9 L1760,216.9Z" fill="#0000ff"/>
<path d="M1774,147.9 L1778,151.9 L1774,155.9 L1770,151.9Z" fill="#0000ff"/>
<path d="M1784,67.7 L1788,71.7 L1784,75.7 L1780,71.7Z" fill="#0000ff"/>
<path d="M1794,212.9 L1798,216.9 L1794,220.9 L1790,216.9Z" fill="#0000ff"/>
<path d="M1804,93.9 L1808,97.9 L1804,101.9 L1800,97.9Z" fill="#0000ff"/>
<path d="M1814,200.3 L1818,204.3 L1814,208.3 L1810,204.3Z" fill="#0000ff"/>
<path d="M1824,123.0 L1828,127.0 L1824,131.0 L1820,127.0Z" fill="#0000ff"/>
<path d="M1834,186.7 L1838,190.7 L1834,194.7 L1830,190.7Z" fill="#0000ff"/>
<path d="M1844,117.9 L1848,121.9 L1844,125.9 L1840,121.9Z" fill="#0000ff"/>
<polyline points="1004,453.1 1014,484.6 1024,459.5 1034,445.8 1044,381.9 1054,454.6 1064,478.5 1074,485.8 1084,424.5 1094,472.1 1104,502.2 1114,498.4 1124,497.2 1134,429.5 1144,414.5 1154,409.6 1164,437.0 1174,473.3 1184,423.3 1194,454.6 1204,457.2 1214,439.4 1224,458.6 1234,464.7 1244,463.3 1254,467.1 1264,444.6 1274,489.6 1284,483.2 1294,448.2 1304,505.7 1314,428.3 1324,448.2 1334,421.9 1344,468.3 1354,385.7 1364,495.8 1374,440.6 1384,421.9 1394,477.1 1404,418.1 1414,464.5 1424,404.6 1434,459.5 1444,395.8 1454,423.3 1464,417.1 1474,475.6 1484,472.1 1494,450.8 1504,441.8 1514,421.9 1524,419.5 1534,457.2 1544,449.6 1554,478.2 1564,415.7 1574,417.1 1584,364.3 1594,475.6 1604,428.3 1614,370.7 1624,470.7 1634,418.1 1644,444.6 1654,405.8 1664,458.4 1674,419.5 1684,445.8 1694,457.2 1704,494.3 1714,465.7 1724,484.4 1734,424.5 1744,408.1 1754,408.1 1764,470.7 1774,475.6 1784,485.6 1794,450.8 1804,413.1 1814,335.4 1824,520.6 1834,454.3 1844,504.3" fill="none" stroke="#ff9aff" stroke-width="1.2"/>
<path d="M1004,449.1 L1008,453.1 L1004,457.1 L1000,453.1Z" fill="#ff00ff"/>
<path d="M1014,480.6 L1018,484.6 L1014,488.6 L1010,484.6Z" fill="#ff00ff"/>
<path d="M1024,455.5 L1028,459.5 L1024,463.5 L1020,459.5Z" fill="#ff00ff"/>
<path d="M1034,441.8 L1038,445.8 L1034,449.8 L1030,445.8Z" fill="#ff00ff"/>
<path d="M1044,377.9 L1048,381.9 L1044,385.9 L1040,381.9Z" fill="#ff00ff"/>
<path d="M1054,450.6 L1058,454.6 L1054,458.6 L1050,454.6Z" fill="#ff00ff"/>
<path d="M1064,474.5 L1068,478.5 L1064,482.5 L1060,478.5Z" fill="#ff00ff"/>
<path d="M1074,481.8 L1078,485.8 L1074,489.8 L1070,485.8Z" fill="#ff00ff"/>
<path d="M1084,420.5 L1088,424.5 L1084,428.5 L1080,424.5Z" fill="#ff00ff"/>
<path d="M1094,468.1 L1098,472.1 L1094,476.1 L1090,472.1Z" fill="#ff00ff"/>
<path d="M1104,498.2 L1108,502.2 L1104,506.2 L1100,502.2Z" fill="#ff00ff"/>
<path d="M1114,494.4 L1118,498.4 L1114,502.4 L1110,498.4Z" fill="#ff00ff"/>
<path d="M1124,493.2 L1128,497.2 L1124,501.2 L1120,497.2Z" fill="#ff00ff"/>
<path d="M1134,425.5 L1138,429.5 L1134,433.5 L1130,429.5Z" fill="#ff00ff"/>
<path d="M1144,410.5 L1148,414.5 L1144,418.5 L1140,414.5Z" fill="#ff00ff"/>
<path d="M1154,405.6 L1158,409.6 L1154,413.6 L1150,409.6Z" fill="#ff00ff"/>
<path d="M1164,433.0 L1168,437.0 L1164,441.0 L1160,437.0Z" fill="#ff00ff"/>
<path d="M1174,469.3 L1178,473.3 L1174,477.3 L1170,473.3Z" fill="#ff00ff"/>
<path d="M1184,419.3 L1188,423.3 L1184,427.3 L1180,423.3Z" fill="#ff00ff"/>
<path d="M1194,450.6 L1198,454.6 L1194,458.6 L1190,454.6Z" fill="#ff00ff"/>
<path d="M1204,453.2 L1208,457.2 L1204,461.2 L1200,457.2Z" fill="#ff00ff"/>
<path d="M1214,435.4 L1218,439.4 L1214,443.4 L1210,439.4Z" fill="#ff00ff"/>
<path d="M1224,454.6 L1228,458.6 L1224,462.6 L1220,458.6Z" fill="#ff00ff"/>
<path d="M1234,460.7 L1238,464.7 L1234,468.7 L1230,464.7Z" fill="#ff00ff"/>
<path d="M1244,459.3 L1248,463.3 L1244,467.3 L1240,463.3Z" fill="#ff00ff"/>
<path d="M1254,463.1 L1258,467.1 L1254,471.1 L1250,467.1Z" fill="#ff00ff"/>
<path d="M1264,440.6 L1268,444.6 L1264,448.6 L1260,444.6Z" fill="#ff00ff"/>
<path d="M1274,485.6 L1278,489.6 L1274,493.6 L1270,489.6Z" fill="#ff00ff"/>
<path d="M1284,479.2 L1288,483.2 L1284,487.2 L1280,483.2Z" fill="#ff00ff"/>
<path d="M1294,444.2 L1298,448.2 L1294,452.2 L1290,448.2Z" fill="#ff00ff"/>
<path d="M1304,501.7 L1308,505.7 L1304,509.7 L1300,505.7Z" fill="#ff00ff"/>
<path d="M1314,424.3 L1318,428.3 L1314,432.3 L1310,428.3Z" fill="#ff00ff"/>
<path d="M1324,444.2 L1328,448.2 L1324,452.2 L1320,448.2Z" fill="#ff00ff"/>
<path d="M1334,417.9 L1338,421.9 L1334,425.9 L1330,421.9Z" fill="#ff00ff"/>
<path d="M1344,464.3 L1348,468.3 L1344,472.3 L1340,468.3Z" fill="#ff00ff"/>
<path d="M1354,381.7 L1358,385.7 L1354,389.7 L1350,385.7Z" fill="#ff00ff"/>
<path d="M1364,491.8 L1368,495.8 L1364,499.8 L1360,495.8Z" fill="#ff00ff"/>
<path d="M1374,436.6 L1378,440.6 L1374,444.6 L1370,440.6Z" fill="#ff00ff"/>
<path d="M1384,417.9 L1388,421.9 L1384,425.9 L1380,421.9Z" fill="#ff0000"/>
<path d="M1394,473.1 L1398,477.1 L1394,481.1 L1390,477.1Z" fill="#ff00ff"/>
<path d="M1404,414.1 L1408,418.1 L1404,422.1 L1400,418.1Z" fill="#ff00ff"/>
<path d="M1414,460.5 L1418,464.5 L1414,468.5 L1410,464.5Z" fill="#ff00ff"/>
<path d="M1424,400.6 L1428,404.6 L1424,408.6 L1420,404.6Z" fill="#ff00ff"/>
<path d="M1434,455.5 L1438,459.5 L1434,463.5 L1430,459.5Z" fill="#ff00ff"/>
<path d="M1444,391.8 L1448,395.8 L1444,399.8 L1440,395.8Z" fill="#ff00ff"/>
<path d="M1454,419.3 L1458,423.3 L1454,427.3 L1450,423.3Z" fill="#ff00ff"/>
<path d="M1464,413.1 L1468,417.1 L1464,421.1 L1460,417.1Z" fill="#ff00ff"/>
<path d="M1474,471.6 L1478,475.6 L1474,479.6 L1470,475.6Z" fill="#ff00ff"/>
<path d="M1484,468.1 L1488,472.1 L1484,476.1 L1480,472.1Z" fill="#ff00ff"/>
<path d="M1494,446.8 L1498,450.8 L1494,454.8 L1490,450.8Z" fill="#ff00ff"/>
<path d="M1504,437.8 L1508,441.8 L1504,445.8 L1500,441.8Z" fill="#ff00ff"/>
<path d="M1514,417.9 L1518,421.9 L1514,425.9 L1510,421.9Z" fill="#ff00ff"/>
<path d="M1524,415.5 L1528,419.5 L1524,423.5 L1520,419.5Z" fill="#ff00ff"/>
<path d="M1534,453.2 L1538,457.2 L1534,461.2 L1530,457.2Z" fill="#ff00ff"/>
<path d="M1544,445.6 L1548,449.6 L1544,453.6 L1540,449.6Z" fill="#ff00ff"/>
<path d="M1554,474.2 L1558,478.2 L1554,482.2 L1550,478.2Z" fill="#ff00ff"/>
<path d="M1564,411.7 L1568,415.7 L1564,419.7 L1560,415.7Z" fill="#ff00ff"/>
<path d="M1574,413.1 L1578,417.1 L1574,421.1 L1570,417.1Z" fill="#ff00ff"/>
<path d="M1584,360.3 L1588,364.3 L1584,368.3 L1580,364.3Z" fill="#ff00ff"/>
<path d="M1594,471.6 L1598,475.6 L1594,479.6 L1590,475.6Z" fill="#ff00ff"/>
<path d="M1604,424.3 L1608,428.3 L1604,432.3 L1600,428.3Z" fill="#ff00ff"/>
<path d="M1614,366.7 L1618,370.7 L1614,374.7 L1610,370.7Z" fill="#ff00ff"/>
<path d="M1624,466.7 L1628,470.7 L1624,474.7 L1620,470.7Z" fill="#ff00ff"/>
<path d="M1634,414.1 L1638,418.1 L1634,422.1 L1630,418.1Z" fill="#ff00ff"/>
<path d="M1644,440.6 L1648,444.6 L1644,448.6 L1640,444.6Z" fill="#ff00ff"/>
<path d="M1654,401.8 L1658,405.8 L1654,409.8 L1650,405.8Z" fill="#ff00ff"/>
<path d="M1664,454.4 L1668,458.4 L1664,462.4 L1660,458.4Z" fill="#ff00ff"/>
<path d="M1674,415.5 L1678,419.5 L1674,423.5 L1670,419.5Z" fill="#ff00ff"/>
<path d="M1684,441.8 L1688,445.8 L1684,449.8 L1680,445.8Z" fill="#ff00ff"/>
<path d="M1694,453.2 L1698,457.2 L1694,461.2 L1690,457.2Z" fill="#ff00ff"/>
<path d="M1704,490.3 L1708,494.3 L1704,498.3 L1700,494.3Z" fill="#ff00ff"/>
<path d="M1714,461.7 L1718,465.7 L1714,469.7 L1710,465.7Z" fill="#ff00ff"/>
<path d="M1724,480.4 L1728,484.4 L1724,488.4 L1720,484.4Z" fill="#ff00ff"/>
<path d="M1734,420.5 L1738,424.5 L1734,428.5 L1730,424.5Z" fill="#ff00ff"/>
<path d="M1744,404.1 L1748,408.1 L1744,412.1 L1740,408.1Z" fill="#ff00ff"/>
<path d="M1754,404.1 L1758,408.1 L1754,412.1 L1750,408.1Z" fill="#ff00ff"/>
<path d="M1764,466.7 L1768,470.7 L1764,474.7 L1760,470.7Z" fill="#ff00ff"/>
<path d="M1774,471.6 L1778,475.6 L1774,479.6 L1770,475.6Z" fill="#ff00ff"/>
<path d="M1784,481.6 L1788,485.6 L1784,489.6 L1780,485.6Z" fill="#ff00ff"/>
<path d="M1794,446.8 L1798,450.8 L1794,454.8 L1790,450.8Z" fill="#ff00ff"/>
<path d="M1804,409.1 L1808,413.1 L1804,417.1 L1800,413.1Z" fill="#ff00ff"/>
<path d="M1814,331.4 L1818,335.4 L1814,339.4 L1810,335.4Z" fill="#ff00ff"/>
<path d="M1824,516.6 L1828,520.6 L1824,524.6 L1820,520.6Z" fill="#ff00ff"/>
<path d="M1834,450.3 L1838,454.3 L1834,458.3 L1830,454.3Z" fill="#ff00ff"/>
<path d="M1844,500.3 L1848,504.3 L1844,508.3 L1840,504.3Z" fill="#ff00ff"/>
<text x="951" y="57" font-family="Liberation Sans" font-size="15" fill="#000" font-weight="bold" textLength="647" lengthAdjust="spacingAndGlyphs" >2025 Jul 13; (266) Aline occults UCAC4 563-010450 Observed by Hidehito Yamamura</text>
<text x="1605" y="57" font-family="Liberation Sans" font-size="15.5" fill="#000" textLength="175" lengthAdjust="spacingAndGlyphs" >/ PSF-Frame Photometry /</text>
<text x="952" y="561" font-family="Liberation Sans" font-size="14.5" fill="#000" textLength="475" lengthAdjust="spacingAndGlyphs" >Exp=490msec / Frm No.191.0 / Frm Mid= 18h30m33.5927s,  End= 33.8377s</text>
<line x1="932" y1="577.5" x2="1864" y2="577.5" stroke="#ffffff" stroke-width="1" />
<line x1="931.5" y1="577" x2="931.5" y2="887" stroke="#ffffff" stroke-width="1" />
<line x1="930.5" y1="38" x2="930.5" y2="887" stroke="#a0a0a0" stroke-width="1" />
<text x="940" y="596" font-family="Liberation Sans" font-size="14.5" fill="#000" textLength="55" lengthAdjust="spacingAndGlyphs" >Current-</text>
<text x="951" y="615" font-family="Liberation Sans" font-size="14.5" fill="#000" textLength="39" lengthAdjust="spacingAndGlyphs" >Frame</text>
<text x="1016" y="596" font-family="Liberation Sans" font-size="14.5" fill="#000" textLength="59" lengthAdjust="spacingAndGlyphs" >Luminous</text>
<text x="1016" y="615" font-family="Liberation Sans" font-size="14.5" fill="#000" textLength="54" lengthAdjust="spacingAndGlyphs" >Intensity</text>
<rect x="941" y="624" width="60" height="23" fill="#ffffff" />
<path d="M941.5,646.5 V624.5 H1000.5" stroke="#a0a0a0" fill="none"/>
<path d="M942.5,645.5 V625.5 H999.5" stroke="#696969" fill="none"/>
<path d="M941.5,646.5 H1000.5 V624.5" stroke="#ffffff" fill="none"/>
<path d="M942.5,645.5 H999.5 V625.5" stroke="#e3e3e3" fill="none"/>
<text x="946" y="640" font-family="Liberation Sans" font-size="13" fill="#000" textLength="30" lengthAdjust="spacingAndGlyphs" >191.0</text>
<rect x="1011" y="624" width="71" height="23" fill="#ffffff" />
<path d="M1011.5,646.5 V624.5 H1081.5" stroke="#a0a0a0" fill="none"/>
<path d="M1012.5,645.5 V625.5 H1080.5" stroke="#696969" fill="none"/>
<path d="M1011.5,646.5 H1081.5 V624.5" stroke="#ffffff" fill="none"/>
<path d="M1012.5,645.5 H1080.5 V625.5" stroke="#e3e3e3" fill="none"/>
<text x="1016" y="640" font-family="Liberation Sans" font-size="13" fill="#000" textLength="30" lengthAdjust="spacingAndGlyphs" >428.0</text>
<rect x="1090" y="586" width="200" height="23" fill="#f5f5f5" />
<path d="M1090.5,608.5 V586.5 H1289.5" stroke="#a0a0a0" fill="none"/>
<path d="M1090.5,608.5 H1289.5 V586.5" stroke="#ffffff" fill="none"/>
<rect x="1091" y="587" width="22" height="21" fill="#f0f0f0" />
<path d="M1091.5,607.5 V587.5 H1112.5" stroke="#ffffff" fill="none"/>
<path d="M1091.5,607.5 H1112.5 V587.5" stroke="#696969" fill="none"/>
<path d="M1092.5,606.5 H1111.5 V588.5" stroke="#a0a0a0" fill="none"/>
<path d="M1102.8,592.9 L1102.8,602.1 L1098.2,597.5 Z" fill="#000"/>
<rect x="1247" y="587" width="21" height="21" fill="#f0f0f0" />
<path d="M1247.5,607.5 V587.5 H1267.5" stroke="#ffffff" fill="none"/>
<path d="M1247.5,607.5 H1267.5 V587.5" stroke="#696969" fill="none"/>
<path d="M1248.5,606.5 H1266.5 V588.5" stroke="#a0a0a0" fill="none"/>
<rect x="1268" y="587" width="21" height="21" fill="#f0f0f0" />
<path d="M1268.5,607.5 V587.5 H1288.5" stroke="#ffffff" fill="none"/>
<path d="M1268.5,607.5 H1288.5 V587.5" stroke="#696969" fill="none"/>
<path d="M1269.5,606.5 H1287.5 V588.5" stroke="#a0a0a0" fill="none"/>
<path d="M1276.7,592.9 L1276.7,602.1 L1281.3,597.5 Z" fill="#000"/>
<text x="1298" y="606" font-family="Liberation Sans" font-size="14.5" fill="#000" textLength="36" lengthAdjust="spacingAndGlyphs" >Scale</text>
<rect x="1346" y="583" width="27" height="24" fill="#ffffff" />
<path d="M1346.5,606.5 V583.5 H1372.5" stroke="#a0a0a0" fill="none"/>
<path d="M1347.5,605.5 V584.5 H1371.5" stroke="#696969" fill="none"/>
<path d="M1346.5,606.5 H1372.5 V583.5" stroke="#ffffff" fill="none"/>
<path d="M1347.5,605.5 H1371.5 V584.5" stroke="#e3e3e3" fill="none"/>
<text x="1351" y="600" font-family="Liberation Sans" font-size="13" fill="#000" >4</text>
<rect x="1376" y="583" width="21" height="14.5" fill="#f0f0f0" />
<path d="M1376.5,597.0 V583.5 H1396.5" stroke="#ffffff" fill="none"/>
<path d="M1376.5,597.0 H1396.5 V583.5" stroke="#696969" fill="none"/>
<path d="M1377.5,596.0 H1395.5 V584.5" stroke="#a0a0a0" fill="none"/>
<rect x="1376" y="597.5" width="21" height="14.5" fill="#f0f0f0" />
<path d="M1376.5,611.5 V598.0 H1396.5" stroke="#ffffff" fill="none"/>
<path d="M1376.5,611.5 H1396.5 V598.0" stroke="#696969" fill="none"/>
<path d="M1377.5,610.5 H1395.5 V599.0" stroke="#a0a0a0" fill="none"/>
<path d="M1383.5,591.75 L1389.5,591.75 L1386.5,588.75 Z" fill="#000"/>
<path d="M1383.5,603.25 L1389.5,603.25 L1386.5,606.25 Z" fill="#000"/>
<rect x="1091" y="618" width="52" height="30" fill="#f0f0f0" />
<path d="M1091.5,647.5 V618.5 H1142.5" stroke="#ffffff" fill="none"/>
<path d="M1091.5,647.5 H1142.5 V618.5" stroke="#696969" fill="none"/>
<path d="M1092.5,646.5 H1141.5 V619.5" stroke="#a0a0a0" fill="none"/>
<text x="1117.0" y="637.68" font-family="Liberation Sans" font-size="13" fill="#000" text-anchor="middle" textLength="46" lengthAdjust="spacingAndGlyphs" >-10Sec</text>
<rect x="1146" y="618" width="42" height="30" fill="#f0f0f0" />
<path d="M1146.5,647.5 V618.5 H1187.5" stroke="#ffffff" fill="none"/>
<path d="M1146.5,647.5 H1187.5 V618.5" stroke="#696969" fill="none"/>
<path d="M1147.5,646.5 H1186.5 V619.5" stroke="#a0a0a0" fill="none"/>
<text x="1167.0" y="637.68" font-family="Liberation Sans" font-size="13" fill="#000" text-anchor="middle" textLength="36" lengthAdjust="spacingAndGlyphs" >-1Sec</text>
<rect x="1191" y="618" width="45" height="30" fill="#f0f0f0" />
<path d="M1191.5,647.5 V618.5 H1235.5" stroke="#ffffff" fill="none"/>
<path d="M1191.5,647.5 H1235.5 V618.5" stroke="#696969" fill="none"/>
<path d="M1192.5,646.5 H1234.5 V619.5" stroke="#a0a0a0" fill="none"/>
<text x="1213.5" y="637.68" font-family="Liberation Sans" font-size="13" fill="#000" text-anchor="middle" textLength="38" lengthAdjust="spacingAndGlyphs" >+1Sec</text>
<rect x="1239" y="618" width="51" height="30" fill="#f0f0f0" />
<path d="M1239.5,647.5 V618.5 H1289.5" stroke="#ffffff" fill="none"/>
<path d="M1239.5,647.5 H1289.5 V618.5" stroke="#696969" fill="none"/>
<path d="M1240.5,646.5 H1288.5 V619.5" stroke="#a0a0a0" fill="none"/>
<text x="1264.5" y="637.68" font-family="Liberation Sans" font-size="13" fill="#000" text-anchor="middle" textLength="46" lengthAdjust="spacingAndGlyphs" >+10Sec</text>
<text x="1301" y="637" font-family="Liberation Sans" font-size="14.5" fill="#000" textLength="43" lengthAdjust="spacingAndGlyphs" >Radius</text>
<rect x="1346" y="624" width="27" height="23" fill="#ffffff" />
<path d="M1346.5,646.5 V624.5 H1372.5" stroke="#a0a0a0" fill="none"/>
<path d="M1347.5,645.5 V625.5 H1371.5" stroke="#696969" fill="none"/>
<path d="M1346.5,646.5 H1372.5 V624.5" stroke="#ffffff" fill="none"/>
<path d="M1347.5,645.5 H1371.5 V625.5" stroke="#e3e3e3" fill="none"/>
<text x="1351" y="641" font-family="Liberation Sans" font-size="13" fill="#000" >3</text>
<rect x="1376" y="622" width="21" height="15.0" fill="#f0f0f0" />
<path d="M1376.5,636.5 V622.5 H1396.5" stroke="#ffffff" fill="none"/>
<path d="M1376.5,636.5 H1396.5 V622.5" stroke="#696969" fill="none"/>
<path d="M1377.5,635.5 H1395.5 V623.5" stroke="#a0a0a0" fill="none"/>
<rect x="1376" y="637.0" width="21" height="15.0" fill="#f0f0f0" />
<path d="M1376.5,651.5 V637.5 H1396.5" stroke="#ffffff" fill="none"/>
<path d="M1376.5,651.5 H1396.5 V637.5" stroke="#696969" fill="none"/>
<path d="M1377.5,650.5 H1395.5 V638.5" stroke="#a0a0a0" fill="none"/>
<path d="M1383.5,631.0 L1389.5,631.0 L1386.5,628.0 Z" fill="#000"/>
<path d="M1383.5,643.0 L1389.5,643.0 L1386.5,646.0 Z" fill="#000"/>
<rect x="941" y="660" width="15" height="15" fill="#ffffff" />
<path d="M941.5,674.5 V660.5 H955.5" stroke="#a0a0a0" fill="none"/>
<path d="M942.5,673.5 V661.5 H954.5" stroke="#696969" fill="none"/>
<path d="M941.5,674.5 H955.5 V660.5" stroke="#ffffff" fill="none"/>
<path d="M942.5,673.5 H954.5 V661.5" stroke="#e3e3e3" fill="none"/>
<path d="M944.8,667.0 L947.6,670.2 L952.6,664.4" stroke="#000" stroke-width="2.5" fill="none"/>
<text x="963" y="672" font-family="Liberation Sans" font-size="14.5" fill="#000" textLength="183" lengthAdjust="spacingAndGlyphs" >Show Image of Clicked point</text>
<rect x="941" y="680" width="15" height="15" fill="#ffffff" />
<path d="M941.5,694.5 V680.5 H955.5" stroke="#a0a0a0" fill="none"/>
<path d="M942.5,693.5 V681.5 H954.5" stroke="#696969" fill="none"/>
<path d="M941.5,694.5 H955.5 V680.5" stroke="#ffffff" fill="none"/>
<path d="M942.5,693.5 H954.5 V681.5" stroke="#e3e3e3" fill="none"/>
<text x="963" y="692" font-family="Liberation Sans" font-size="14.5" fill="#000" textLength="183" lengthAdjust="spacingAndGlyphs" >Reproduce Aperture Position</text>
<rect x="1159" y="658" width="92" height="31" fill="#f0f0f0" />
<rect x="1159.5" y="658.5" width="91" height="30" fill="none" stroke="#6a6a6a" stroke-width="1" />
<path d="M1160.5,687.5 V659.5 H1249.5" stroke="#ffffff" fill="none"/>
<path d="M1160.5,687.5 H1249.5 V659.5" stroke="#696969" fill="none"/>
<path d="M1161.5,686.5 H1248.5 V660.5" stroke="#a0a0a0" fill="none"/>
<rect x="1163.5" y="662.5" width="83" height="22" fill="none" stroke="#000" stroke-width="1" stroke-dasharray="1,1"/>
<text x="1205.0" y="678.72" font-family="Liberation Sans" font-size="14.5" fill="#000" text-anchor="middle" textLength="74" lengthAdjust="spacingAndGlyphs" >Save Image</text>
<rect x="1256" y="658" width="150" height="31" fill="#f0f0f0" />
<path d="M1256.5,688.5 V658.5 H1405.5" stroke="#ffffff" fill="none"/>
<path d="M1256.5,688.5 H1405.5 V658.5" stroke="#696969" fill="none"/>
<path d="M1257.5,687.5 H1404.5 V659.5" stroke="#a0a0a0" fill="none"/>
<text x="1331.0" y="678.72" font-family="Liberation Sans" font-size="14.5" fill="#000" text-anchor="middle" textLength="118" lengthAdjust="spacingAndGlyphs" >Copy to ClipBoard</text>
<rect x="1231" y="697" width="152" height="35" fill="#f0f0f0" />
<path d="M1231.5,731.5 V697.5 H1382.5" stroke="#ffffff" fill="none"/>
<path d="M1231.5,731.5 H1382.5 V697.5" stroke="#696969" fill="none"/>
<path d="M1232.5,730.5 H1381.5 V698.5" stroke="#a0a0a0" fill="none"/>
<text x="1307.0" y="719.54" font-family="Liberation Sans" font-size="14" fill="#000" font-weight="bold" text-anchor="middle" textLength="130" lengthAdjust="spacingAndGlyphs" >Lunar Identification</text>
<rect x="1405.5" y="586.5" width="60" height="100" fill="none" stroke="#ffffff"/>
<rect x="1404.5" y="585.5" width="60" height="100" fill="none" stroke="#a0a0a0"/>
<rect x="1412" y="583" width="43" height="6" fill="#f0f0f0" />
<text x="1413" y="591" font-family="Liberation Sans" font-size="13" fill="#000" textLength="41" lengthAdjust="spacingAndGlyphs" >Y Axis</text>
<text x="1411" y="606" font-family="Liberation Sans" font-size="14.5" fill="#000" textLength="21" lengthAdjust="spacingAndGlyphs" >Min</text>
<text x="1437" y="606" font-family="Liberation Sans" font-size="14.5" fill="#000" textLength="25" lengthAdjust="spacingAndGlyphs" >Max</text>
<rect x="1411" y="608" width="21" height="21" fill="#f0f0f0" />
<path d="M1411.5,628.5 V608.5 H1431.5" stroke="#ffffff" fill="none"/>
<path d="M1411.5,628.5 H1431.5 V608.5" stroke="#696969" fill="none"/>
<path d="M1412.5,627.5 H1430.5 V609.5" stroke="#a0a0a0" fill="none"/>
<path d="M1416.9,620.8 L1426.1,620.8 L1421.5,616.2 Z" fill="#000"/>
<rect x="1411" y="632" width="21" height="21" fill="#f0f0f0" />
<path d="M1411.5,652.5 V632.5 H1431.5" stroke="#ffffff" fill="none"/>
<path d="M1411.5,652.5 H1431.5 V632.5" stroke="#696969" fill="none"/>
<path d="M1412.5,651.5 H1430.5 V633.5" stroke="#a0a0a0" fill="none"/>
<rect x="1411" y="658" width="21" height="22" fill="#f0f0f0" />
<path d="M1411.5,679.5 V658.5 H1431.5" stroke="#ffffff" fill="none"/>
<path d="M1411.5,679.5 H1431.5 V658.5" stroke="#696969" fill="none"/>
<path d="M1412.5,678.5 H1430.5 V659.5" stroke="#a0a0a0" fill="none"/>
<path d="M1416.9,666.7 L1426.1,666.7 L1421.5,671.3 Z" fill="#000"/>
<rect x="1438" y="608" width="21" height="21" fill="#f0f0f0" />
<path d="M1438.5,628.5 V608.5 H1458.5" stroke="#ffffff" fill="none"/>
<path d="M1438.5,628.5 H1458.5 V608.5" stroke="#696969" fill="none"/>
<path d="M1439.5,627.5 H1457.5 V609.5" stroke="#a0a0a0" fill="none"/>
<path d="M1443.9,620.8 L1453.1,620.8 L1448.5,616.2 Z" fill="#000"/>
<rect x="1438" y="632" width="21" height="21" fill="#f0f0f0" />
<path d="M1438.5,652.5 V632.5 H1458.5" stroke="#ffffff" fill="none"/>
<path d="M1438.5,652.5 H1458.5 V632.5" stroke="#696969" fill="none"/>
<path d="M1439.5,651.5 H1457.5 V633.5" stroke="#a0a0a0" fill="none"/>
<rect x="1438" y="658" width="21" height="22" fill="#f0f0f0" />
<path d="M1438.5,679.5 V658.5 H1458.5" stroke="#ffffff" fill="none"/>
<path d="M1438.5,679.5 H1458.5 V658.5" stroke="#696969" fill="none"/>
<path d="M1439.5,678.5 H1457.5 V659.5" stroke="#a0a0a0" fill="none"/>
<path d="M1443.9,666.7 L1453.1,666.7 L1448.5,671.3 Z" fill="#000"/>
<rect x="1470.5" y="586.5" width="74" height="64" fill="none" stroke="#ffffff"/>
<rect x="1469.5" y="585.5" width="74" height="64" fill="none" stroke="#a0a0a0"/>
<rect x="1477" y="583" width="28" height="6" fill="#f0f0f0" />
<text x="1478" y="591" font-family="Liberation Sans" font-size="13" fill="#000" textLength="26" lengthAdjust="spacingAndGlyphs" >Line</text>
<rect x="1480" y="596" width="14" height="14" fill="#ffffff" />
<path d="M1480.5,609.5 V596.5 H1493.5" stroke="#a0a0a0" fill="none"/>
<path d="M1481.5,608.5 V597.5 H1492.5" stroke="#696969" fill="none"/>
<path d="M1480.5,609.5 H1493.5 V596.5" stroke="#ffffff" fill="none"/>
<path d="M1481.5,608.5 H1492.5 V597.5" stroke="#e3e3e3" fill="none"/>
<path d="M1483.5466666666666,602.5333333333333 L1486.16,605.52 L1490.8266666666666,600.1066666666667" stroke="#000" stroke-width="2.3333333333333335" fill="none"/>
<text x="1501" y="609" font-family="Liberation Sans" font-size="14.5" fill="#000" textLength="27" lengthAdjust="spacingAndGlyphs" >Axis</text>
<rect x="1480" y="614" width="14" height="14" fill="#ffffff" />
<path d="M1480.5,627.5 V614.5 H1493.5" stroke="#a0a0a0" fill="none"/>
<path d="M1481.5,626.5 V615.5 H1492.5" stroke="#696969" fill="none"/>
<path d="M1480.5,627.5 H1493.5 V614.5" stroke="#ffffff" fill="none"/>
<path d="M1481.5,626.5 H1492.5 V615.5" stroke="#e3e3e3" fill="none"/>
<path d="M1483.5466666666666,620.5333333333333 L1486.16,623.52 L1490.8266666666666,618.1066666666667" stroke="#000" stroke-width="2.3333333333333335" fill="none"/>
<text x="1501" y="627" font-family="Liberation Sans" font-size="14.5" fill="#000" textLength="29" lengthAdjust="spacingAndGlyphs" >Data</text>
<rect x="1479" y="629" width="57" height="18" fill="#f0f0f0" />
<path d="M1479.5,646.5 V629.5 H1535.5" stroke="#ffffff" fill="none"/>
<path d="M1479.5,646.5 H1535.5 V629.5" stroke="#696969" fill="none"/>
<path d="M1480.5,645.5 H1534.5 V630.5" stroke="#a0a0a0" fill="none"/>
<text x="1507.5" y="643" font-family="Liberation Sans" font-size="14.5" fill="#000" text-anchor="middle" textLength="40" lengthAdjust="spacingAndGlyphs" >Hilight</text>
<rect x="1469" y="658" width="82" height="33" fill="#f0f0f0" />
<path d="M1469.5,690.5 V658.5 H1550.5" stroke="#ffffff" fill="none"/>
<path d="M1469.5,690.5 H1550.5 V658.5" stroke="#696969" fill="none"/>
<path d="M1470.5,689.5 H1549.5 V659.5" stroke="#a0a0a0" fill="none"/>
<text x="1510.0" y="679.72" font-family="Liberation Sans" font-size="14.5" fill="#000" text-anchor="middle" textLength="68" lengthAdjust="spacingAndGlyphs" >[3D] Image</text>
<rect x="1550.5" y="586.5" width="68" height="65" fill="none" stroke="#ffffff"/>
<rect x="1549.5" y="585.5" width="68" height="65" fill="none" stroke="#a0a0a0"/>
<rect x="1557" y="583" width="37" height="6" fill="#f0f0f0" />
<text x="1558" y="591" font-family="Liberation Sans" font-size="13" fill="#000" textLength="35" lengthAdjust="spacingAndGlyphs" >Width</text>
<circle cx="1566.5" cy="608.5" r="5.5" fill="#fff" stroke="#d4d4d4" stroke-width="1"/>
<path d="M1562.608,612.3919999999999 A5.5,5.5 0 0 1 1570.392,604.6080000000001" stroke="#8a8a8a" stroke-width="1.1" fill="none"/>
<circle cx="1566.5" cy="608.5" r="2.2" fill="#000"/>
<text x="1581" y="613" font-family="Liberation Sans" font-size="14.5" fill="#000" textLength="24" lengthAdjust="spacingAndGlyphs" >Part</text>
<circle cx="1566.5" cy="634.5" r="5.5" fill="#fff" stroke="#d4d4d4" stroke-width="1"/>
<path d="M1562.608,638.3919999999999 A5.5,5.5 0 0 1 1570.392,630.6080000000001" stroke="#8a8a8a" stroke-width="1.1" fill="none"/>
<text x="1581" y="639" font-family="Liberation Sans" font-size="14.5" fill="#000" textLength="34" lengthAdjust="spacingAndGlyphs" >Entire</text>
<rect x="1626" y="582" width="179" height="23" fill="#f0f0f0" />
<path d="M1626.5,604.5 V582.5 H1804.5" stroke="#ffffff" fill="none"/>
<path d="M1626.5,604.5 H1804.5 V582.5" stroke="#696969" fill="none"/>
<path d="M1627.5,603.5 H1803.5 V583.5" stroke="#a0a0a0" fill="none"/>
<text x="1715.5" y="598.72" font-family="Liberation Sans" font-size="14.5" fill="#000" text-anchor="middle" textLength="160" lengthAdjust="spacingAndGlyphs" >Correction for absorption</text>
<rect x="1626" y="608" width="130" height="23" fill="#f0f0f0" />
<path d="M1626.5,630.5 V608.5 H1755.5" stroke="#ffffff" fill="none"/>
<path d="M1626.5,630.5 H1755.5 V608.5" stroke="#696969" fill="none"/>
<path d="M1627.5,629.5 H1754.5 V609.5" stroke="#a0a0a0" fill="none"/>
<text x="1691.0" y="624.72" font-family="Liberation Sans" font-size="14.5" fill="#000" text-anchor="middle" textLength="105" lengthAdjust="spacingAndGlyphs" >Noise Reduction</text>
<rect x="1759" y="608" width="46" height="23" fill="#f0f0f0" />
<path d="M1759.5,630.5 V608.5 H1804.5" stroke="#ffffff" fill="none"/>
<path d="M1759.5,630.5 H1804.5 V608.5" stroke="#696969" fill="none"/>
<path d="M1760.5,629.5 H1803.5 V609.5" stroke="#a0a0a0" fill="none"/>
<text x="1782.0" y="624.72" font-family="Liberation Sans" font-size="14.5" fill="#000" text-anchor="middle" textLength="36" lengthAdjust="spacingAndGlyphs" >Reset</text>
<rect x="1821" y="584" width="50" height="29" fill="#f0f0f0" />
<path d="M1821.5,612.5 V584.5 H1870.5" stroke="#ffffff" fill="none"/>
<path d="M1821.5,612.5 H1870.5 V584.5" stroke="#696969" fill="none"/>
<path d="M1822.5,611.5 H1869.5 V585.5" stroke="#a0a0a0" fill="none"/>
<text x="1846.0" y="603" font-family="Liberation Sans" font-size="14.5" fill="#000" text-anchor="middle" textLength="34" lengthAdjust="spacingAndGlyphs" >close</text>
<rect x="1625" y="633" width="14" height="14" fill="#ffffff" />
<path d="M1625.5,646.5 V633.5 H1638.5" stroke="#a0a0a0" fill="none"/>
<path d="M1626.5,645.5 V634.5 H1637.5" stroke="#696969" fill="none"/>
<path d="M1625.5,646.5 H1638.5 V633.5" stroke="#ffffff" fill="none"/>
<path d="M1626.5,645.5 H1637.5 V634.5" stroke="#e3e3e3" fill="none"/>
<path d="M1628.5466666666666,639.5333333333333 L1631.16,642.52 L1635.8266666666666,637.1066666666667" stroke="#000" stroke-width="2.3333333333333335" fill="none"/>
<text x="1646" y="647" font-family="Liberation Sans" font-size="14.5" fill="#000" textLength="66" lengthAdjust="spacingAndGlyphs" >Information</text>
<rect x="1812" y="630" width="14" height="14" fill="#ffffff" />
<path d="M1812.5,643.5 V630.5 H1825.5" stroke="#a0a0a0" fill="none"/>
<path d="M1813.5,642.5 V631.5 H1824.5" stroke="#696969" fill="none"/>
<path d="M1812.5,643.5 H1825.5 V630.5" stroke="#ffffff" fill="none"/>
<path d="M1813.5,642.5 H1824.5 V631.5" stroke="#e3e3e3" fill="none"/>
<path d="M1815.5466666666666,636.5333333333333 L1818.16,639.52 L1822.8266666666666,634.1066666666667" stroke="#000" stroke-width="2.3333333333333335" fill="none"/>
<text x="1833" y="643" font-family="Liberation Sans" font-size="14.5" fill="#000" textLength="14" lengthAdjust="spacingAndGlyphs" >ID</text>
<rect x="1751.5" y="648.5" width="123" height="42" fill="none" stroke="#ffffff"/>
<rect x="1750.5" y="647.5" width="123" height="42" fill="none" stroke="#a0a0a0"/>
<rect x="1757" y="645" width="44" height="6" fill="#f0f0f0" />
<text x="1758" y="653" font-family="Liberation Sans" font-size="13" fill="#000" textLength="42" lengthAdjust="spacingAndGlyphs" >Object</text>
<rect x="1757" y="660" width="23" height="21" fill="#f4f4f4" />
<path d="M1757.5,680.5 V660.5 H1779.5" stroke="#808080" stroke-width="1" fill="none"/>
<path d="M1758.5,679.5 V661.5 H1778.5" stroke="#a8a8a8" stroke-width="1" fill="none"/>
<path d="M1757.5,680.5 H1779.5 V660.5" stroke="#ffffff" stroke-width="1" fill="none"/>
<text x="1768.5" y="676" font-family="Liberation Sans" font-size="13" fill="#000" text-anchor="middle" >A</text>
<rect x="1784" y="660" width="23" height="21" fill="#f4f4f4" />
<path d="M1784.5,680.5 V660.5 H1806.5" stroke="#808080" stroke-width="1" fill="none"/>
<path d="M1785.5,679.5 V661.5 H1805.5" stroke="#a8a8a8" stroke-width="1" fill="none"/>
<path d="M1784.5,680.5 H1806.5 V660.5" stroke="#ffffff" stroke-width="1" fill="none"/>
<text x="1795.5" y="676" font-family="Liberation Sans" font-size="13" fill="#000" text-anchor="middle" >B</text>
<rect x="1811" y="660" width="23" height="21" fill="#f4f4f4" />
<path d="M1811.5,680.5 V660.5 H1833.5" stroke="#808080" stroke-width="1" fill="none"/>
<path d="M1812.5,679.5 V661.5 H1832.5" stroke="#a8a8a8" stroke-width="1" fill="none"/>
<path d="M1811.5,680.5 H1833.5 V660.5" stroke="#ffffff" stroke-width="1" fill="none"/>
<text x="1822.5" y="676" font-family="Liberation Sans" font-size="13" fill="#000" text-anchor="middle" >C</text>
<rect x="1839" y="660" width="21" height="22" fill="#f0f0f0" />
<path d="M1839.5,681.5 V660.5 H1859.5" stroke="#ffffff" fill="none"/>
<path d="M1839.5,681.5 H1859.5 V660.5" stroke="#696969" fill="none"/>
<path d="M1840.5,680.5 H1858.5 V661.5" stroke="#a0a0a0" fill="none"/>
<text x="1849.5" y="676" font-family="Liberation Sans" font-size="13" fill="#000" text-anchor="middle" >L</text>
<rect x="1394" y="698" width="211" height="35" fill="#f0f0f0" />
<path d="M1394.5,732.5 V698.5 H1604.5" stroke="#ffffff" fill="none"/>
<path d="M1394.5,732.5 H1604.5 V698.5" stroke="#696969" fill="none"/>
<path d="M1395.5,731.5 H1603.5 V699.5" stroke="#a0a0a0" fill="none"/>
<text x="1499.5" y="720.9" font-family="Liberation Sans" font-size="15" fill="#000" font-weight="bold" text-anchor="middle" textLength="165" lengthAdjust="spacingAndGlyphs" >Diffraction Analysis</text>
<rect x="1611" y="698" width="132" height="35" fill="#f0f0f0" />
<path d="M1611.5,732.5 V698.5 H1742.5" stroke="#ffffff" fill="none"/>
<path d="M1611.5,732.5 H1742.5 V698.5" stroke="#696969" fill="none"/>
<path d="M1612.5,731.5 H1741.5 V699.5" stroke="#a0a0a0" fill="none"/>
<text x="1677.0" y="720.9" font-family="Liberation Sans" font-size="15" fill="#000" font-weight="bold" text-anchor="middle" textLength="100" lengthAdjust="spacingAndGlyphs" >Make Report</text>
<line x1="931" y1="740.5" x2="1864" y2="740.5" stroke="#a0a0a0" stroke-width="1" />
<rect x="942.5" y="775.5" width="919" height="112" fill="none" stroke="#ffffff"/>
<rect x="941.5" y="774.5" width="919" height="112" fill="none" stroke="#a0a0a0"/>
<rect x="949" y="772" width="84" height="6" fill="#f0f0f0" />
<text x="950" y="780" font-family="Liberation Sans" font-size="13" fill="#000" textLength="82" lengthAdjust="spacingAndGlyphs" >S/N vs Error</text>
<text x="951" y="804" font-family="Liberation Sans" font-size="15" fill="#000" font-weight="bold" textLength="124" lengthAdjust="spacingAndGlyphs" >S/N (Full drop)</text>
<rect x="1081" y="785" width="70" height="33" fill="#ffffff" />
<path d="M1081.5,817.5 V785.5 H1150.5" stroke="#a0a0a0" fill="none"/>
<path d="M1082.5,816.5 V786.5 H1149.5" stroke="#696969" fill="none"/>
<path d="M1081.5,817.5 H1150.5 V785.5" stroke="#ffffff" fill="none"/>
<path d="M1082.5,816.5 H1149.5 V786.5" stroke="#e3e3e3" fill="none"/>
<text x="1089.5" y="807" font-family="Liberation Sans" font-size="21" fill="#0000ff" font-weight="bold" textLength="26.5" lengthAdjust="spacingAndGlyphs" >6.7</text>
<text x="1181" y="804" font-family="Liberation Sans" font-size="15" fill="#000" font-weight="bold" textLength="30" lengthAdjust="spacingAndGlyphs" >S/N</text>
<rect x="1221" y="785" width="60" height="33" fill="#ffffff" />
<path d="M1221.5,817.5 V785.5 H1280.5" stroke="#a0a0a0" fill="none"/>
<path d="M1222.5,816.5 V786.5 H1279.5" stroke="#696969" fill="none"/>
<path d="M1221.5,817.5 H1280.5 V785.5" stroke="#ffffff" fill="none"/>
<path d="M1222.5,816.5 H1279.5 V786.5" stroke="#e3e3e3" fill="none"/>
<text x="1226.3" y="807" font-family="Liberation Sans" font-size="21" fill="#ff0000" font-weight="bold" textLength="26.4" lengthAdjust="spacingAndGlyphs" >3.5</text>
<text x="1292" y="804" font-family="Liberation Sans" font-size="15" fill="#000" font-weight="bold" textLength="101" lengthAdjust="spacingAndGlyphs" >expected on</text>
<rect x="1401" y="784" width="61" height="33" fill="#ffffff" />
<path d="M1401.5,816.5 V784.5 H1461.5" stroke="#a0a0a0" fill="none"/>
<path d="M1402.5,815.5 V785.5 H1460.5" stroke="#696969" fill="none"/>
<path d="M1401.5,816.5 H1461.5 V784.5" stroke="#ffffff" fill="none"/>
<path d="M1402.5,815.5 H1460.5 V785.5" stroke="#e3e3e3" fill="none"/>
<text x="1405" y="807" font-family="Liberation Sans" font-size="20" fill="#000" textLength="27" lengthAdjust="spacingAndGlyphs" >0.8</text>
<text x="1471" y="804" font-family="Liberation Sans" font-size="15" fill="#000" font-weight="bold" textLength="77" lengthAdjust="spacingAndGlyphs" >Mag drop</text>
<text x="1592" y="804" font-family="Liberation Sans" font-size="15" fill="#000" font-weight="bold" textLength="133" lengthAdjust="spacingAndGlyphs" >Frame exposure</text>
<rect x="1742" y="784" width="59" height="33" fill="#ffffff" />
<path d="M1742.5,816.5 V784.5 H1800.5" stroke="#a0a0a0" fill="none"/>
<path d="M1743.5,815.5 V785.5 H1799.5" stroke="#696969" fill="none"/>
<path d="M1742.5,816.5 H1800.5 V784.5" stroke="#ffffff" fill="none"/>
<path d="M1743.5,815.5 H1799.5 V785.5" stroke="#e3e3e3" fill="none"/>
<text x="1746" y="807" font-family="Liberation Sans" font-size="20" fill="#000" textLength="31" lengthAdjust="spacingAndGlyphs" >490</text>
<text x="1812" y="804" font-family="Liberation Sans" font-size="15" fill="#000" font-weight="bold" textLength="43" lengthAdjust="spacingAndGlyphs" >msec</text>
<text x="951" y="845" font-family="Liberation Sans" font-size="15" fill="#000" font-weight="bold" textLength="62" lengthAdjust="spacingAndGlyphs" >Fresnel</text>
<text x="951" y="864" font-family="Liberation Sans" font-size="15" fill="#000" font-weight="bold" textLength="63" lengthAdjust="spacingAndGlyphs" >Number</text>
<rect x="1021" y="834" width="61" height="34" fill="#ffffff" />
<path d="M1021.5,867.5 V834.5 H1081.5" stroke="#a0a0a0" fill="none"/>
<path d="M1022.5,866.5 V835.5 H1080.5" stroke="#696969" fill="none"/>
<path d="M1021.5,867.5 H1081.5 V834.5" stroke="#ffffff" fill="none"/>
<path d="M1022.5,866.5 H1080.5 V835.5" stroke="#e3e3e3" fill="none"/>
<text x="1026" y="857" font-family="Liberation Sans" font-size="20" fill="#000" textLength="54" lengthAdjust="spacingAndGlyphs" >11002</text>
<text x="1101" y="845" font-family="Liberation Sans" font-size="15" fill="#000" font-weight="bold" textLength="96" lengthAdjust="spacingAndGlyphs" >Lower Limit</text>
<text x="1111" y="864" font-family="Liberation Sans" font-size="15" fill="#000" font-weight="bold" textLength="83" lengthAdjust="spacingAndGlyphs" >for detect</text>
<rect x="1202" y="834" width="69" height="34" fill="#ffffff" />
<path d="M1202.5,867.5 V834.5 H1270.5" stroke="#a0a0a0" fill="none"/>
<path d="M1203.5,866.5 V835.5 H1269.5" stroke="#696969" fill="none"/>
<path d="M1202.5,867.5 H1270.5 V834.5" stroke="#ffffff" fill="none"/>
<path d="M1203.5,866.5 H1269.5 V835.5" stroke="#e3e3e3" fill="none"/>
<text x="1207" y="857" font-family="Liberation Sans" font-size="20" fill="#0000ff" textLength="43" lengthAdjust="spacingAndGlyphs" >1354</text>
<text x="1272" y="855" font-family="Liberation Sans" font-size="15" fill="#000" font-weight="bold" textLength="43" lengthAdjust="spacingAndGlyphs" >msec</text>
<text x="1332" y="845" font-family="Liberation Sans" font-size="15" fill="#000" font-weight="bold" textLength="79" lengthAdjust="spacingAndGlyphs" >Predicted</text>
<text x="1332" y="864" font-family="Liberation Sans" font-size="15" fill="#000" font-weight="bold" textLength="86" lengthAdjust="spacingAndGlyphs" >Time Error</text>
<rect x="1421" y="834" width="80" height="34" fill="#ffffff" />
<path d="M1421.5,867.5 V834.5 H1500.5" stroke="#a0a0a0" fill="none"/>
<path d="M1422.5,866.5 V835.5 H1499.5" stroke="#696969" fill="none"/>
<path d="M1421.5,867.5 H1500.5 V834.5" stroke="#ffffff" fill="none"/>
<path d="M1422.5,866.5 H1499.5 V835.5" stroke="#e3e3e3" fill="none"/>
<text x="1425" y="857" font-family="Liberation Sans" font-size="20" fill="#ff0000" textLength="32" lengthAdjust="spacingAndGlyphs" >202</text>
<text x="1502" y="864" font-family="Liberation Sans" font-size="15" fill="#000" font-weight="bold" textLength="43" lengthAdjust="spacingAndGlyphs" >msec</text>
<text x="1561" y="845" font-family="Liberation Sans" font-size="15" fill="#000" font-weight="bold" textLength="156" lengthAdjust="spacingAndGlyphs" >Expected Error for</text>
<text x="1561" y="864" font-family="Liberation Sans" font-size="15" fill="#000" font-weight="bold" textLength="176" lengthAdjust="spacingAndGlyphs" >Analyzing event time</text>
<rect x="1742" y="834" width="59" height="34" fill="#ffffff" />
<path d="M1742.5,867.5 V834.5 H1800.5" stroke="#a0a0a0" fill="none"/>
<path d="M1743.5,866.5 V835.5 H1799.5" stroke="#696969" fill="none"/>
<path d="M1742.5,867.5 H1800.5 V834.5" stroke="#ffffff" fill="none"/>
<path d="M1743.5,866.5 H1799.5 V835.5" stroke="#e3e3e3" fill="none"/>
<text x="1746" y="857" font-family="Liberation Sans" font-size="20" fill="#000" textLength="30" lengthAdjust="spacingAndGlyphs" >181</text>
<text x="1808" y="864" font-family="Liberation Sans" font-size="15" fill="#000" font-weight="bold" textLength="43" lengthAdjust="spacingAndGlyphs" >msec</text>
</svg></body></html>
